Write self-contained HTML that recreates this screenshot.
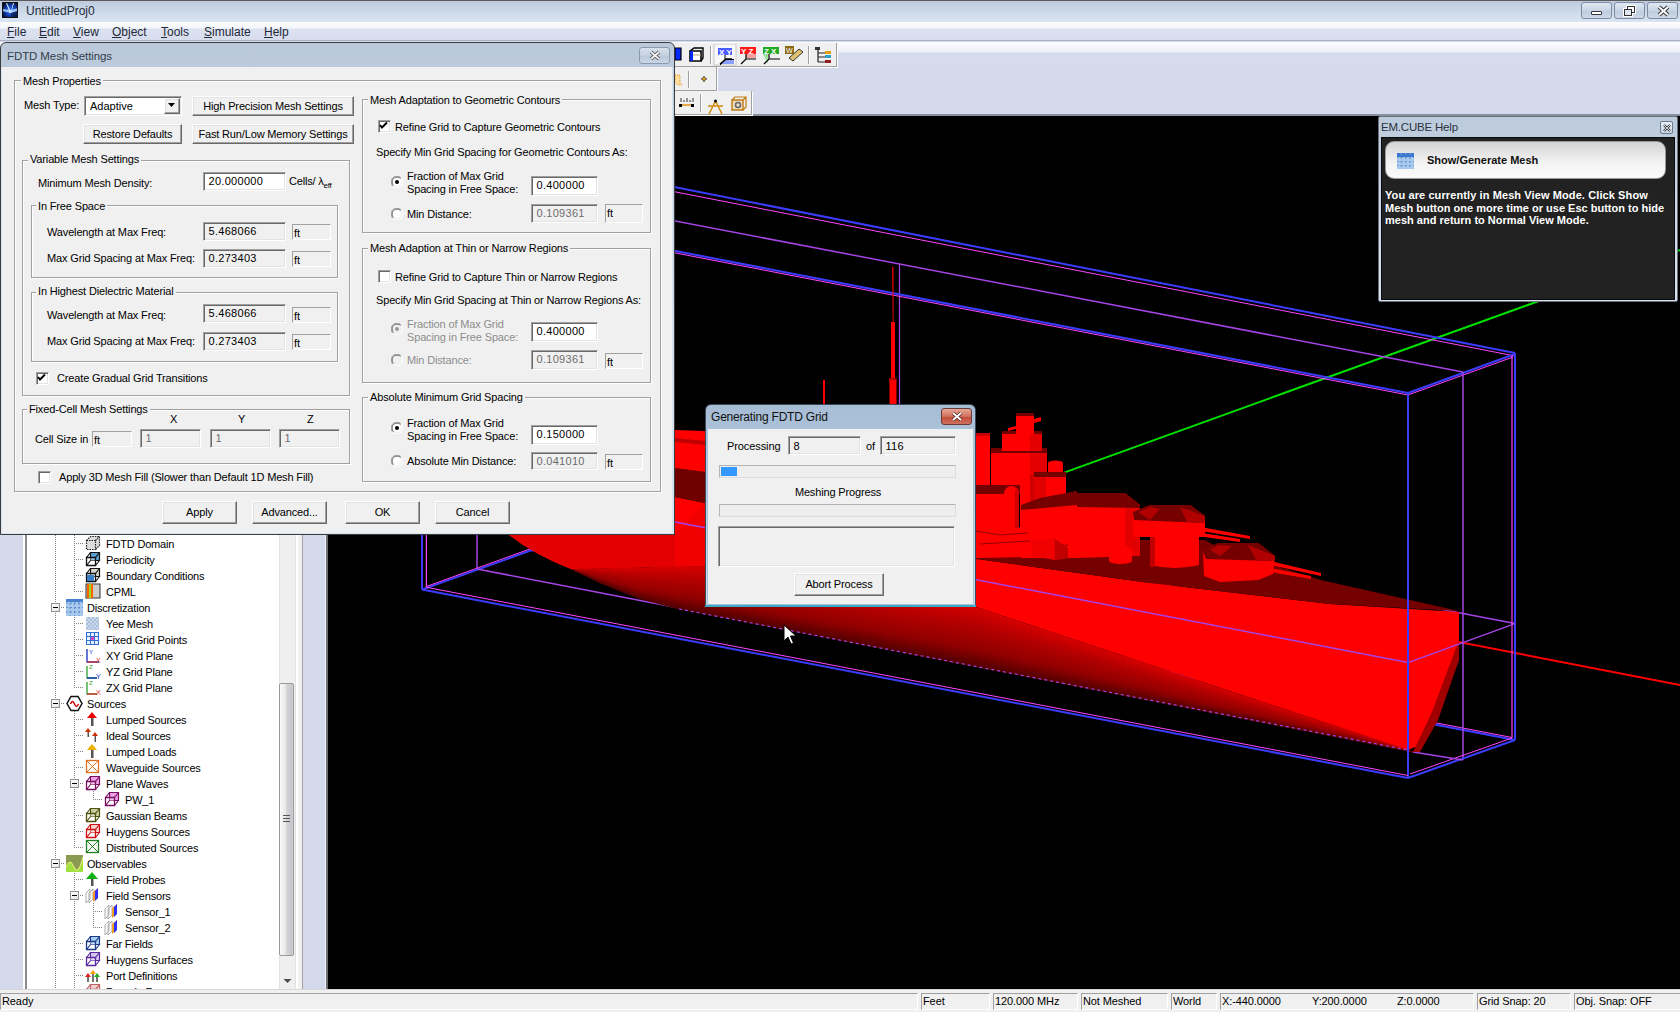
<!DOCTYPE html><html><head><meta charset="utf-8"><style>
*{margin:0;padding:0;box-sizing:border-box}
body{width:1680px;height:1012px;overflow:hidden;position:relative;background:#d4d9ec;font-family:"Liberation Sans",sans-serif;font-size:11px;color:#000}
.t{position:absolute;white-space:nowrap;letter-spacing:-0.15px}
.a{position:absolute}
.gb{position:absolute;border:1px solid #a0a0a0;box-shadow:inset 1px 1px 0 #fff,1px 1px 0 #fff}
.ed{position:absolute;border:1px solid;border-color:#a0a0a0 #fff #fff #a0a0a0;box-shadow:inset 1px 1px 0 #696969,inset -1px -1px 0 #e3e3e3}
.ub{position:absolute;border:1px solid;border-color:#a0a0a0 #fff #fff #a0a0a0;background:#f0f0f0}
.bt{position:absolute;background:#f0f0f0;border:1px solid;border-color:#fff #696969 #696969 #fff;box-shadow:inset -1px -1px 0 #a0a0a0,inset 1px 1px 0 #e3e3e3}
.cb{position:absolute;background:#fff;border:1px solid;border-color:#a0a0a0 #fff #fff #a0a0a0;box-shadow:inset 1px 1px 0 #696969,inset -1px -1px 0 #e3e3e3}
.rd{position:absolute}
.sb{position:absolute;border:1px solid;border-color:#a0a0a0 #fff #fff #a0a0a0}
</style></head><body>
<div class="a" style="left:0;top:0;width:1680px;height:22px;background:linear-gradient(#bccbdc,#cfdceb 60%,#dae5f2);border-top:1px solid #5a5a5a"></div>
<svg class="a" style="left:2px;top:2px" width="16" height="16"><defs><radialGradient id="ig" cx="0.55" cy="0.55" r="0.6"><stop offset="0" stop-color="#3a78ff"/><stop offset="0.6" stop-color="#0f3aa8"/><stop offset="1" stop-color="#050a20"/></radialGradient></defs><rect width="16" height="16" fill="url(#ig)"/><path d="M0 9 L9 11 L16 9 L16 6 L9 8 L0 7z" fill="#b8dcff" opacity="0.8"/><path d="M5 1 L9 10 L11 1 L12 1 L9 11 L8 11 L4 1z" fill="#d8f0ff"/><path d="M9 11 L16 9 L16 16 L9 16z" fill="#0a1a40" opacity="0.7"/><rect x="0.5" y="0.5" width="15" height="15" fill="none" stroke="#111" stroke-width="1"/></svg>
<div class="t" style="left:26px;top:5.34px;font-size:12px;line-height:12px;color:#1e2a3a;letter-spacing:0px;">UntitledProj0</div>
<div class="a" style="left:1581px;top:2px;width:31px;height:17px;border:1px solid #7d8ba0;border-radius:3px;background:linear-gradient(#dfe8f3,#c8d5e5 50%,#bccbdd 51%,#cdd9e8)"><div class="a" style="left:9px;top:8px;width:11px;height:4px;background:#fff;border:1px solid #333;border-radius:1px"></div></div>
<div class="a" style="left:1614px;top:2px;width:31px;height:17px;border:1px solid #7d8ba0;border-radius:3px;background:linear-gradient(#dfe8f3,#c8d5e5 50%,#bccbdd 51%,#cdd9e8)"><svg class="a" style="left:8px;top:2px" width="14" height="12"><rect x="4.5" y="1.5" width="7" height="6" fill="none" stroke="#fff" stroke-width="3"/><rect x="1.5" y="4.5" width="7" height="6" fill="none" stroke="#fff" stroke-width="3"/><rect x="4.5" y="1.5" width="7" height="6" fill="none" stroke="#333" stroke-width="1"/><rect x="1.5" y="4.5" width="7" height="6" fill="#dfe7f0" stroke="#333" stroke-width="1"/></svg></div>
<div class="a" style="left:1647px;top:2px;width:31px;height:17px;border:1px solid #7d8ba0;border-radius:3px;background:linear-gradient(#dfe8f3,#c8d5e5 50%,#bccbdd 51%,#cdd9e8)"><svg class="a" style="left:9px;top:2px" width="13" height="12"><path d="M2 2 L11 10 M11 2 L2 10" stroke="#333" stroke-width="4"/><path d="M2 2 L11 10 M11 2 L2 10" stroke="#fff" stroke-width="2"/></svg></div>
<div class="a" style="left:0;top:22px;width:1680px;height:19px;background:linear-gradient(#fdfdfe 0,#f4f6fb 6px,#dde2f1 7px,#d8ddee 18px);border-bottom:1px solid #a8b0c4"></div>
<div class="t" style="left:7px;top:25.84px;font-size:12px;line-height:12px;color:#1e2a3a;letter-spacing:0px;"><u>F</u>ile</div>
<div class="t" style="left:39px;top:25.84px;font-size:12px;line-height:12px;color:#1e2a3a;letter-spacing:0px;"><u>E</u>dit</div>
<div class="t" style="left:73px;top:25.84px;font-size:12px;line-height:12px;color:#1e2a3a;letter-spacing:0px;"><u>V</u>iew</div>
<div class="t" style="left:112px;top:25.84px;font-size:12px;line-height:12px;color:#1e2a3a;letter-spacing:0px;"><u>O</u>bject</div>
<div class="t" style="left:161px;top:25.84px;font-size:12px;line-height:12px;color:#1e2a3a;letter-spacing:0px;"><u>T</u>ools</div>
<div class="t" style="left:204px;top:25.84px;font-size:12px;line-height:12px;color:#1e2a3a;letter-spacing:0px;"><u>S</u>imulate</div>
<div class="t" style="left:264px;top:25.84px;font-size:12px;line-height:12px;color:#1e2a3a;letter-spacing:0px;"><u>H</u>elp</div>
<div class="a" style="left:0;top:42px;width:1680px;height:74px;background:linear-gradient(#fbfcfe 0,#eef0f8 10px,#d5daed 11px,#d4d9ec 100%)"></div>
<div class="a" style="left:0;top:114px;width:1680px;height:2px;background:#8a8f9e"></div>
<div class="a" style="left:640px;top:43px;width:197px;height:24px;background:#f0f0f0;border-right:1px solid #a0a0a0;border-bottom:1px solid #a0a0a0;box-shadow:1px 1px 0 #fff"></div>
<div class="a" style="left:640px;top:67px;width:77px;height:24px;background:#f0f0f0;border-right:1px solid #a0a0a0;border-bottom:1px solid #a0a0a0;box-shadow:1px 1px 0 #fff"></div>
<div class="a" style="left:640px;top:91px;width:112px;height:24px;background:#f0f0f0;border-right:1px solid #a0a0a0;border-bottom:1px solid #a0a0a0;box-shadow:1px 1px 0 #fff"></div>
<div class="a" style="left:710px;top:46px;width:1px;height:18px;background:#a0a0a0;box-shadow:1px 0 0 #fff"></div>
<div class="a" style="left:808px;top:46px;width:1px;height:18px;background:#a0a0a0;box-shadow:1px 0 0 #fff"></div>
<div class="a" style="left:688px;top:71px;width:1px;height:17px;background:#a0a0a0;box-shadow:1px 0 0 #fff"></div>
<div class="a" style="left:700px;top:94px;width:1px;height:18px;background:#a0a0a0;box-shadow:1px 0 0 #fff"></div>
<svg class="a" style="left:672px;top:44px" width="170" height="22"><path d="M3 4 h6 v12 h-6z" fill="#0028ff"/><path d="M3 4 h6 v12 h-6z" fill="none" stroke="#000" stroke-width="1.2"/><path d="M18 7 h11 v10 h-11z" fill="#fff" stroke="#000" stroke-width="1.6"/><path d="M18 7 l4 -3 h9 v10 l-2 3" fill="none" stroke="#000" stroke-width="1.4"/><path d="M18 7 h3 v10 h-3z" fill="#0028ff"/><path d="M21 11 h8" stroke="#b0a080"/><rect x="42" y="0" width="22" height="21" fill="#f8f8f8" stroke="#c8c8c8"/><rect x="46" y="4" width="14" height="7" fill="#4a5cff"/><text x="47" y="10.5" font-family="Liberation Sans" font-size="8" fill="#fff" font-weight="bold">X Y</text><path d="M48 20 L54 15 H60" stroke="#000" stroke-width="1.3" fill="none"/><path d="M49 20 L54 16 H62 V20z" fill="#8ca0ff"/><path d="M48 21 L54 15.5 H62" stroke="#000" stroke-width="1" fill="none"/><path d="M53 11 V16" stroke="#000"/><rect x="68" y="3" width="16" height="7" fill="#ff1a1a"/><text x="69" y="9.5" font-family="Liberation Sans" font-size="8" fill="#fff" font-weight="bold">Y Z</text><rect x="74" y="10" width="10" height="4" fill="#f7a0a0"/><path d="M69 20 L74 15 H84 M74 10 V15" stroke="#000" stroke-width="1.2" fill="none"/><rect x="91" y="3" width="16" height="7" fill="#22aa22"/><text x="92" y="9.5" font-family="Liberation Sans" font-size="8" fill="#fff" font-weight="bold">Z X</text><path d="M91 10 h5 v10z" fill="#a0e0a0"/><path d="M92 20 L97 15 H108 M97 10 V15" stroke="#000" stroke-width="1.2" fill="none"/><rect x="113" y="2" width="9" height="8" fill="#8a6a10"/><text x="114" y="9" font-family="Liberation Sans" font-size="7" fill="#fff">W</text><path d="M117 14 L127 5 L131 8 L121 17z" fill="#e0c070" stroke="#333" stroke-width="1"/><rect x="143" y="3" width="5" height="3" fill="#333"/><path d="M146 6 V18 M146 9 H153 M146 13 H153 M146 18 H153" stroke="#222" stroke-width="1.2" fill="none"/><rect x="153" y="7" width="6" height="3" fill="#e0a010"/><rect x="153" y="11" width="6" height="3" fill="#30a0c0"/><rect x="153" y="16" width="6" height="3" fill="#902020"/></svg>
<svg class="a" style="left:672px;top:68px" width="80" height="46"><path d="M3 7 h5 v8 l2 2 h-4 l-3 -3z" fill="#ffe0a0" stroke="#e09020" stroke-dasharray="1 1"/><path d="M31 10 l1 -2 l1 2 l2 1 l-2 1 l-1 2 l-1 -2 l-2 -1z" fill="#e0a020" stroke="#222" stroke-width="0.6"/><path d="M8 37 H22" stroke="#e09010" stroke-width="1.5"/><rect x="7" y="36" width="3" height="3" fill="#000"/><rect x="19" y="36" width="3" height="3" fill="#000"/><path d="M9 30 V34 M12 32 V34 M15 30 V34 M18 32 V34 M21 30 V34" stroke="#333" stroke-width="1"/><path d="M43.5 33 L37 46 M43.5 33 L50 46 M36 38 L51 38" stroke="#d08a10" stroke-width="1.5" fill="none"/><circle cx="43.5" cy="33" r="1.5" fill="#000"/><path d="M60 32 h11 v10 h-11z" fill="#ecdcc0" stroke="#c07810" stroke-width="1.4"/><path d="M60 32 l3 -3 h11 v10 l-3 3 M71 32 l3 -3" fill="none" stroke="#c07810" stroke-width="1.2"/><circle cx="66" cy="37" r="2.5" fill="none" stroke="#666" stroke-width="1.5"/></svg>
<div class="a" style="left:23px;top:116px;width:280px;height:874px;border-left:2px solid #fff;"></div>
<div class="a" style="left:25px;top:116px;width:278px;height:873px;background:#fff;border-left:2px solid #8c8c8c;border-right:1px solid #a0a0a0"></div>
<div class="a" style="left:279px;top:116px;width:17px;height:873px;background:#efefef;border-left:1px solid #e2e2e2;border-right:1px solid #e2e2e2"></div>
<div class="a" style="left:296px;top:116px;width:2px;height:873px;background:#fff"></div>
<div class="a" style="left:298px;top:116px;width:4px;height:873px;background:#f0f0f0"></div>
<div class="a" style="left:325px;top:116px;width:1px;height:874px;background:#eef0f8"></div>
<div class="a" style="left:326px;top:116px;width:2px;height:874px;background:#6e6e6e"></div>
<div class="a" style="left:279px;top:683px;width:15px;height:273px;border:1px solid #9a9a9a;border-radius:2px;background:linear-gradient(90deg,#fbfbfb,#e6e6e8 45%,#d6d6da 50%,#c4c4ca 92%,#d8d8dc)"></div>
<div class="a" style="left:283px;top:815px;width:7px;height:7px;border-top:1px solid #555;border-bottom:1px solid #555"></div><div class="a" style="left:283px;top:818px;width:7px;height:1px;background:#555"></div>
<svg class="a" style="left:282px;top:978px" width="11" height="6"><path d="M1.5 1 H9.5 L5.5 5z" fill="#4d4d4d"/></svg>
<div class="a" style="left:25px;top:989px;width:278px;height:1px;background:#a0a0a0"></div>
<div class="a" style="left:28px;top:535px;width:251px;height:454px;overflow:hidden">
<div class="a" style="left:27px;top:0px;width:1px;height:455px;background:repeating-linear-gradient(#808080 0 1px,transparent 1px 2px)"></div>
<div class="a" style="left:46px;top:0px;width:1px;height:57px;background:repeating-linear-gradient(#808080 0 1px,transparent 1px 2px)"></div>
<div class="a" style="left:46px;top:80px;width:1px;height:73px;background:repeating-linear-gradient(#808080 0 1px,transparent 1px 2px)"></div>
<div class="a" style="left:46px;top:176px;width:1px;height:137px;background:repeating-linear-gradient(#808080 0 1px,transparent 1px 2px)"></div>
<div class="a" style="left:46px;top:336px;width:1px;height:119px;background:repeating-linear-gradient(#808080 0 1px,transparent 1px 2px)"></div>
<div class="a" style="left:65px;top:256px;width:1px;height:9px;background:repeating-linear-gradient(#808080 0 1px,transparent 1px 2px)"></div>
<div class="a" style="left:65px;top:368px;width:1px;height:25px;background:repeating-linear-gradient(#808080 0 1px,transparent 1px 2px)"></div>
<div class="a" style="left:46px;top:8px;width:10px;height:1px;background:repeating-linear-gradient(90deg,#808080 0 1px,transparent 1px 2px)"></div>
<svg class="a" style="left:57px;top:0px" width="16" height="16"><path d="M1.5 5.5 h9 v9 h-9z M1.5 5.5 l4 -4 h9 v9 l-4 4 M10.5 5.5 l4 -4" fill="#ddd" stroke="#222" stroke-dasharray="1.5 1" stroke-width="1.2"/></svg>
<div class="t" style="left:78px;top:3.6899999999999995px;font-size:11px;line-height:11px;letter-spacing:-0.2px;">FDTD Domain</div>
<div class="a" style="left:46px;top:24px;width:10px;height:1px;background:repeating-linear-gradient(90deg,#808080 0 1px,transparent 1px 2px)"></div>
<svg class="a" style="left:57px;top:16px" width="16" height="16"><path d="M5.5 1.5 h9 v8 h-9z" fill="#5aa0d0" stroke="#111" stroke-width="1.2"/><path d="M1.5 6.5 h9 v8 h-9z" fill="#fff" fill-opacity="0.35" stroke="#111" stroke-width="1.3"/><path d="M1.5 6.5 L5.5 1.5 M10.5 6.5 L14.5 1.5 M10.5 14.5 L14.5 9.5 M1.5 14.5 L5.5 9.5" stroke="#111" stroke-width="1.2" fill="none"/></svg>
<div class="t" style="left:78px;top:19.689999999999998px;font-size:11px;line-height:11px;letter-spacing:-0.2px;">Periodicity</div>
<div class="a" style="left:46px;top:40px;width:10px;height:1px;background:repeating-linear-gradient(90deg,#808080 0 1px,transparent 1px 2px)"></div>
<svg class="a" style="left:57px;top:32px" width="16" height="16"><path d="M5.5 1.5 h9 v8 h-9z" fill="#d8d4cc" stroke="#111" stroke-width="1.2"/><path d="M1.5 6.5 h9 v8 h-9z" fill="#fff" fill-opacity="0.35" stroke="#111" stroke-width="1.3"/><path d="M1.5 6.5 L5.5 1.5 M10.5 6.5 L14.5 1.5 M10.5 14.5 L14.5 9.5 M1.5 14.5 L5.5 9.5" stroke="#111" stroke-width="1.2" fill="none"/><path d="M2 8 h7 v6 h-7z" fill="#3a80c8"/></svg>
<div class="t" style="left:78px;top:35.69px;font-size:11px;line-height:11px;letter-spacing:-0.2px;">Boundary Conditions</div>
<div class="a" style="left:46px;top:56px;width:10px;height:1px;background:repeating-linear-gradient(90deg,#808080 0 1px,transparent 1px 2px)"></div>
<svg class="a" style="left:57px;top:48px" width="16" height="16"><rect x="1" y="1" width="14" height="14" fill="#ccc" stroke="#333"/><rect x="2" y="1" width="2" height="14" fill="#ff6000"/><rect x="4" y="1" width="2" height="14" fill="#90e020"/><rect x="6" y="1" width="2" height="14" fill="#ff6000"/></svg>
<div class="t" style="left:78px;top:51.69px;font-size:11px;line-height:11px;letter-spacing:-0.2px;">CPML</div>
<div class="a" style="left:27px;top:72px;width:10px;height:1px;background:repeating-linear-gradient(90deg,#808080 0 1px,transparent 1px 2px)"></div>
<div class="a" style="left:23px;top:68px;width:9px;height:9px;border:1px solid #919191;background:linear-gradient(135deg,#fff,#e6e6e6)"><div class="a" style="left:1px;top:3px;width:5px;height:1px;background:#000"></div></div>
<svg class="a" style="left:38px;top:64px" width="17" height="17"><rect x="0" y="0" width="17" height="17" fill="#a8c8ec"/><path d="M0 4 H17 M0 8.5 H17 M0 13 H17 M4 0 V17 M8.5 0 V17 M13 0 V17" stroke="#5a8cd0" stroke-width="1" stroke-dasharray="2 2"/><rect x="0" y="0" width="17" height="3" fill="#4a80d0"/></svg>
<div class="t" style="left:59px;top:67.69px;font-size:11px;line-height:11px;letter-spacing:-0.2px;">Discretization</div>
<div class="a" style="left:46px;top:88px;width:10px;height:1px;background:repeating-linear-gradient(90deg,#808080 0 1px,transparent 1px 2px)"></div>
<svg class="a" style="left:57px;top:80px" width="16" height="16"><rect x="1" y="2" width="13" height="13" fill="#c8d8ea"/><path d="M1 5 H14 M1 9 H14 M1 13 H14 M4 2 V15 M8 2 V15 M12 2 V15" stroke="#8aaad0" stroke-dasharray="2 2"/></svg>
<div class="t" style="left:78px;top:83.69px;font-size:11px;line-height:11px;letter-spacing:-0.2px;">Yee Mesh</div>
<div class="a" style="left:46px;top:104px;width:10px;height:1px;background:repeating-linear-gradient(90deg,#808080 0 1px,transparent 1px 2px)"></div>
<svg class="a" style="left:57px;top:96px" width="16" height="16"><rect x="1.5" y="1.5" width="12" height="12" fill="#e8f0ff" stroke="#3070d0"/><path d="M1.5 5.5 H13.5 M1.5 9.5 H13.5 M5.5 1.5 V13.5 M9.5 1.5 V13.5" stroke="#3070d0"/><circle cx="7.5" cy="7.5" r="1.8" fill="#e040c0"/></svg>
<div class="t" style="left:78px;top:99.69px;font-size:11px;line-height:11px;letter-spacing:-0.2px;">Fixed Grid Points</div>
<div class="a" style="left:46px;top:120px;width:10px;height:1px;background:repeating-linear-gradient(90deg,#808080 0 1px,transparent 1px 2px)"></div>
<svg class="a" style="left:57px;top:112px" width="16" height="16"><path d="M2 2 V15 H14" stroke="#1030c0" stroke-width="1.3" fill="none"/><path d="M2 15 H12" stroke="#e03030" stroke-width="1.3"/><text x="4" y="7" font-size="6" fill="#1030c0" font-family="Liberation Sans">Y</text><text x="11" y="16" font-size="7" fill="#e03030" font-family="Liberation Sans">X</text></svg>
<div class="t" style="left:78px;top:115.69px;font-size:11px;line-height:11px;letter-spacing:-0.2px;">XY Grid Plane</div>
<div class="a" style="left:46px;top:136px;width:10px;height:1px;background:repeating-linear-gradient(90deg,#808080 0 1px,transparent 1px 2px)"></div>
<svg class="a" style="left:57px;top:128px" width="16" height="16"><path d="M2 3 V15 H12" stroke="#30a030" stroke-width="1.3" fill="none"/><path d="M2 15 H12" stroke="#1030c0" stroke-width="1.3"/><text x="4" y="6" font-size="6" fill="#30a030" font-family="Liberation Sans">Z</text><text x="11" y="16" font-size="7" fill="#1030c0" font-family="Liberation Sans">Y</text></svg>
<div class="t" style="left:78px;top:131.69px;font-size:11px;line-height:11px;letter-spacing:-0.2px;">YZ Grid Plane</div>
<div class="a" style="left:46px;top:152px;width:10px;height:1px;background:repeating-linear-gradient(90deg,#808080 0 1px,transparent 1px 2px)"></div>
<svg class="a" style="left:57px;top:144px" width="16" height="16"><path d="M2 3 V15 H12" stroke="#30a030" stroke-width="1.3" fill="none"/><path d="M2 15 H12" stroke="#e03030" stroke-width="1.3"/><text x="4" y="6" font-size="6" fill="#30a030" font-family="Liberation Sans">Z</text><text x="11" y="16" font-size="7" fill="#e03030" font-family="Liberation Sans">X</text></svg>
<div class="t" style="left:78px;top:147.69px;font-size:11px;line-height:11px;letter-spacing:-0.2px;">ZX Grid Plane</div>
<div class="a" style="left:27px;top:168px;width:10px;height:1px;background:repeating-linear-gradient(90deg,#808080 0 1px,transparent 1px 2px)"></div>
<div class="a" style="left:23px;top:164px;width:9px;height:9px;border:1px solid #919191;background:linear-gradient(135deg,#fff,#e6e6e6)"><div class="a" style="left:1px;top:3px;width:5px;height:1px;background:#000"></div></div>
<svg class="a" style="left:38px;top:160px" width="17" height="17"><path d="M5 1.5 h7 l4 7 l-4 7 h-7 l-4 -7z" fill="#fff" stroke="#111" stroke-width="1.5"/><path d="M4.5 9 q2 -5 4 0 t4 0" stroke="#c00" stroke-width="1.5" fill="none"/></svg>
<div class="t" style="left:59px;top:163.69px;font-size:11px;line-height:11px;letter-spacing:-0.2px;">Sources</div>
<div class="a" style="left:46px;top:184px;width:10px;height:1px;background:repeating-linear-gradient(90deg,#808080 0 1px,transparent 1px 2px)"></div>
<svg class="a" style="left:57px;top:176px" width="16" height="16"><path d="M7 1 L12 7 H2z" fill="#e00"/><rect x="6" y="7" width="2.5" height="8" fill="#555"/></svg>
<div class="t" style="left:78px;top:179.69px;font-size:11px;line-height:11px;letter-spacing:-0.2px;">Lumped Sources</div>
<div class="a" style="left:46px;top:200px;width:10px;height:1px;background:repeating-linear-gradient(90deg,#808080 0 1px,transparent 1px 2px)"></div>
<svg class="a" style="left:57px;top:192px" width="16" height="16"><path d="M3 1 L6 5 H0z M10 5 L13 9 H7z" fill="#d03000"/><rect x="2.5" y="5" width="1.5" height="5" fill="#555"/><rect x="9.5" y="9" width="1.5" height="6" fill="#555"/></svg>
<div class="t" style="left:78px;top:195.69px;font-size:11px;line-height:11px;letter-spacing:-0.2px;">Ideal Sources</div>
<div class="a" style="left:46px;top:216px;width:10px;height:1px;background:repeating-linear-gradient(90deg,#808080 0 1px,transparent 1px 2px)"></div>
<svg class="a" style="left:57px;top:208px" width="16" height="16"><path d="M7 1 L12 7 H2z" fill="#f0b000"/><rect x="6" y="7" width="2.5" height="8" fill="#555"/></svg>
<div class="t" style="left:78px;top:211.69px;font-size:11px;line-height:11px;letter-spacing:-0.2px;">Lumped Loads</div>
<div class="a" style="left:46px;top:232px;width:10px;height:1px;background:repeating-linear-gradient(90deg,#808080 0 1px,transparent 1px 2px)"></div>
<svg class="a" style="left:57px;top:224px" width="16" height="16"><rect x="1.5" y="1.5" width="12" height="12" fill="#fff" stroke="#e07020" stroke-width="1.3"/><path d="M1.5 1.5 L13.5 13.5 M13.5 1.5 L1.5 13.5" stroke="#e07020"/></svg>
<div class="t" style="left:78px;top:227.69px;font-size:11px;line-height:11px;letter-spacing:-0.2px;">Waveguide Sources</div>
<div class="a" style="left:46px;top:248px;width:10px;height:1px;background:repeating-linear-gradient(90deg,#808080 0 1px,transparent 1px 2px)"></div>
<div class="a" style="left:42px;top:244px;width:9px;height:9px;border:1px solid #919191;background:linear-gradient(135deg,#fff,#e6e6e6)"><div class="a" style="left:1px;top:3px;width:5px;height:1px;background:#000"></div></div>
<svg class="a" style="left:57px;top:240px" width="16" height="16"><path d="M5.5 1.5 h9 v8 h-9z" fill="#f0a0e8" stroke="#7a1060" stroke-width="1.2"/><path d="M1.5 6.5 h9 v8 h-9z" fill="#fff" fill-opacity="0.35" stroke="#7a1060" stroke-width="1.3"/><path d="M1.5 6.5 L5.5 1.5 M10.5 6.5 L14.5 1.5 M10.5 14.5 L14.5 9.5 M1.5 14.5 L5.5 9.5" stroke="#7a1060" stroke-width="1.2" fill="none"/></svg>
<div class="t" style="left:78px;top:243.69px;font-size:11px;line-height:11px;letter-spacing:-0.2px;">Plane Waves</div>
<div class="a" style="left:65px;top:264px;width:10px;height:1px;background:repeating-linear-gradient(90deg,#808080 0 1px,transparent 1px 2px)"></div>
<svg class="a" style="left:76px;top:256px" width="16" height="16"><path d="M5.5 1.5 h9 v8 h-9z" fill="#f0a0e8" stroke="#7a1060" stroke-width="1.2"/><path d="M1.5 6.5 h9 v8 h-9z" fill="#fff" fill-opacity="0.35" stroke="#7a1060" stroke-width="1.3"/><path d="M1.5 6.5 L5.5 1.5 M10.5 6.5 L14.5 1.5 M10.5 14.5 L14.5 9.5 M1.5 14.5 L5.5 9.5" stroke="#7a1060" stroke-width="1.2" fill="none"/></svg>
<div class="t" style="left:97px;top:259.69px;font-size:11px;line-height:11px;letter-spacing:-0.2px;">PW_1</div>
<div class="a" style="left:46px;top:280px;width:10px;height:1px;background:repeating-linear-gradient(90deg,#808080 0 1px,transparent 1px 2px)"></div>
<svg class="a" style="left:57px;top:272px" width="16" height="16"><path d="M5.5 1.5 h9 v8 h-9z" fill="#c8d0a0" stroke="#505010" stroke-width="1.2"/><path d="M1.5 6.5 h9 v8 h-9z" fill="#fff" fill-opacity="0.35" stroke="#505010" stroke-width="1.3"/><path d="M1.5 6.5 L5.5 1.5 M10.5 6.5 L14.5 1.5 M10.5 14.5 L14.5 9.5 M1.5 14.5 L5.5 9.5" stroke="#505010" stroke-width="1.2" fill="none"/></svg>
<div class="t" style="left:78px;top:275.69px;font-size:11px;line-height:11px;letter-spacing:-0.2px;">Gaussian Beams</div>
<div class="a" style="left:46px;top:296px;width:10px;height:1px;background:repeating-linear-gradient(90deg,#808080 0 1px,transparent 1px 2px)"></div>
<svg class="a" style="left:57px;top:288px" width="16" height="16"><path d="M5.5 1.5 h9 v8 h-9z" fill="#f8d0d0" stroke="#d01010" stroke-width="1.2"/><path d="M1.5 6.5 h9 v8 h-9z" fill="#fff" fill-opacity="0.35" stroke="#d01010" stroke-width="1.3"/><path d="M1.5 6.5 L5.5 1.5 M10.5 6.5 L14.5 1.5 M10.5 14.5 L14.5 9.5 M1.5 14.5 L5.5 9.5" stroke="#d01010" stroke-width="1.2" fill="none"/></svg>
<div class="t" style="left:78px;top:291.69px;font-size:11px;line-height:11px;letter-spacing:-0.2px;">Huygens Sources</div>
<div class="a" style="left:46px;top:312px;width:10px;height:1px;background:repeating-linear-gradient(90deg,#808080 0 1px,transparent 1px 2px)"></div>
<svg class="a" style="left:57px;top:304px" width="16" height="16"><rect x="1.5" y="1.5" width="12" height="12" fill="#fff" stroke="#208020" stroke-width="1.3"/><path d="M1.5 1.5 L13.5 13.5 M13.5 1.5 L1.5 13.5" stroke="#208020"/></svg>
<div class="t" style="left:78px;top:307.69px;font-size:11px;line-height:11px;letter-spacing:-0.2px;">Distributed Sources</div>
<div class="a" style="left:27px;top:328px;width:10px;height:1px;background:repeating-linear-gradient(90deg,#808080 0 1px,transparent 1px 2px)"></div>
<div class="a" style="left:23px;top:324px;width:9px;height:9px;border:1px solid #919191;background:linear-gradient(135deg,#fff,#e6e6e6)"><div class="a" style="left:1px;top:3px;width:5px;height:1px;background:#000"></div></div>
<svg class="a" style="left:38px;top:320px" width="17" height="17"><rect x="0" y="0" width="17" height="17" fill="#8a9a50"/><path d="M0 17 V12 Q4 2 8 12 T17 2 V17z" fill="#a0e040"/><path d="M0 12 Q4 2 8 12 T17 2" stroke="#f0f080" fill="none"/></svg>
<div class="t" style="left:59px;top:323.69px;font-size:11px;line-height:11px;letter-spacing:-0.2px;">Observables</div>
<div class="a" style="left:46px;top:344px;width:10px;height:1px;background:repeating-linear-gradient(90deg,#808080 0 1px,transparent 1px 2px)"></div>
<svg class="a" style="left:57px;top:336px" width="16" height="16"><path d="M7 1 L13 8 H1z" fill="#10b010"/><rect x="6" y="8" width="2.5" height="7" fill="#555"/></svg>
<div class="t" style="left:78px;top:339.69px;font-size:11px;line-height:11px;letter-spacing:-0.2px;">Field Probes</div>
<div class="a" style="left:46px;top:360px;width:10px;height:1px;background:repeating-linear-gradient(90deg,#808080 0 1px,transparent 1px 2px)"></div>
<div class="a" style="left:42px;top:356px;width:9px;height:9px;border:1px solid #919191;background:linear-gradient(135deg,#fff,#e6e6e6)"><div class="a" style="left:1px;top:3px;width:5px;height:1px;background:#000"></div></div>
<svg class="a" style="left:57px;top:352px" width="16" height="16"><path d="M1 6 l4 -4 v10 l-4 4z M4 6 l4 -4 v10 l-4 4z" fill="none" stroke="#aaa"/><path d="M8 5 l5 -4 v10 l-5 4z" fill="#f0a020"/><path d="M10 4 l3 -3 v10 l-3 3z" fill="#3030ff"/></svg>
<div class="t" style="left:78px;top:355.69px;font-size:11px;line-height:11px;letter-spacing:-0.2px;">Field Sensors</div>
<div class="a" style="left:65px;top:376px;width:10px;height:1px;background:repeating-linear-gradient(90deg,#808080 0 1px,transparent 1px 2px)"></div>
<svg class="a" style="left:76px;top:368px" width="16" height="16"><path d="M1 6 l4 -4 v10 l-4 4z M4 6 l4 -4 v10 l-4 4z" fill="none" stroke="#aaa"/><path d="M8 5 l5 -4 v10 l-5 4z" fill="#f0a020"/><path d="M10 4 l3 -3 v10 l-3 3z" fill="#3030ff"/></svg>
<div class="t" style="left:97px;top:371.69px;font-size:11px;line-height:11px;letter-spacing:-0.2px;">Sensor_1</div>
<div class="a" style="left:65px;top:392px;width:10px;height:1px;background:repeating-linear-gradient(90deg,#808080 0 1px,transparent 1px 2px)"></div>
<svg class="a" style="left:76px;top:384px" width="16" height="16"><path d="M1 6 l4 -4 v10 l-4 4z M4 6 l4 -4 v10 l-4 4z" fill="none" stroke="#aaa"/><path d="M8 5 l5 -4 v10 l-5 4z" fill="#f0a020"/><path d="M10 4 l3 -3 v10 l-3 3z" fill="#3030ff"/></svg>
<div class="t" style="left:97px;top:387.69px;font-size:11px;line-height:11px;letter-spacing:-0.2px;">Sensor_2</div>
<div class="a" style="left:46px;top:408px;width:10px;height:1px;background:repeating-linear-gradient(90deg,#808080 0 1px,transparent 1px 2px)"></div>
<svg class="a" style="left:57px;top:400px" width="16" height="16"><path d="M5.5 1.5 h9 v8 h-9z" fill="#a8d0f0" stroke="#1a3a8a" stroke-width="1.2"/><path d="M1.5 6.5 h9 v8 h-9z" fill="#fff" fill-opacity="0.35" stroke="#1a3a8a" stroke-width="1.3"/><path d="M1.5 6.5 L5.5 1.5 M10.5 6.5 L14.5 1.5 M10.5 14.5 L14.5 9.5 M1.5 14.5 L5.5 9.5" stroke="#1a3a8a" stroke-width="1.2" fill="none"/></svg>
<div class="t" style="left:78px;top:403.69px;font-size:11px;line-height:11px;letter-spacing:-0.2px;">Far Fields</div>
<div class="a" style="left:46px;top:424px;width:10px;height:1px;background:repeating-linear-gradient(90deg,#808080 0 1px,transparent 1px 2px)"></div>
<svg class="a" style="left:57px;top:416px" width="16" height="16"><path d="M5.5 1.5 h9 v8 h-9z" fill="#d8c8f0" stroke="#5a2aa0" stroke-width="1.2"/><path d="M1.5 6.5 h9 v8 h-9z" fill="#fff" fill-opacity="0.35" stroke="#5a2aa0" stroke-width="1.3"/><path d="M1.5 6.5 L5.5 1.5 M10.5 6.5 L14.5 1.5 M10.5 14.5 L14.5 9.5 M1.5 14.5 L5.5 9.5" stroke="#5a2aa0" stroke-width="1.2" fill="none"/></svg>
<div class="t" style="left:78px;top:419.69px;font-size:11px;line-height:11px;letter-spacing:-0.2px;">Huygens Surfaces</div>
<div class="a" style="left:46px;top:440px;width:10px;height:1px;background:repeating-linear-gradient(90deg,#808080 0 1px,transparent 1px 2px)"></div>
<svg class="a" style="left:57px;top:432px" width="16" height="16"><path d="M3 6 L6 10 H0z" fill="#e02020"/><path d="M8 3 L11 7 H5z" fill="#f0a000"/><path d="M12 6 L15 10 H9z" fill="#20b020"/><path d="M3 10 V15 M8 7 V15 M12 10 V15" stroke="#444" stroke-width="1.5"/></svg>
<div class="t" style="left:78px;top:435.69px;font-size:11px;line-height:11px;letter-spacing:-0.2px;">Port Definitions</div>
<div class="a" style="left:46px;top:456px;width:10px;height:1px;background:repeating-linear-gradient(90deg,#808080 0 1px,transparent 1px 2px)"></div>
<svg class="a" style="left:57px;top:448px" width="16" height="16"><path d="M5.5 1.5 h9 v8 h-9z" fill="#f0d0d0" stroke="#c06060" stroke-width="1.2"/><path d="M1.5 6.5 h9 v8 h-9z" fill="#fff" fill-opacity="0.35" stroke="#c06060" stroke-width="1.3"/><path d="M1.5 6.5 L5.5 1.5 M10.5 6.5 L14.5 1.5 M10.5 14.5 L14.5 9.5 M1.5 14.5 L5.5 9.5" stroke="#c06060" stroke-width="1.2" fill="none"/></svg>
<div class="t" style="left:78px;top:451.69px;font-size:11px;line-height:11px;letter-spacing:-0.2px;">Domain F</div>
</div>
<div class="a" style="left:0;top:989px;width:1680px;height:23px;background:#f0f0f0;border-top:1px solid #d8d8d8"></div>
<div class="t" style="left:2px;top:996.19px;font-size:11px;line-height:11px;letter-spacing:-0.1px;">Ready</div>
<div class="sb" style="left:0px;top:993px;width:918px;height:17px"></div>
<div class="sb" style="left:921px;top:993px;width:69px;height:17px"></div>
<div class="t" style="left:923px;top:996.19px;font-size:11px;line-height:11px;letter-spacing:-0.1px;">Feet</div>
<div class="sb" style="left:993px;top:993px;width:85px;height:17px"></div>
<div class="t" style="left:995px;top:996.19px;font-size:11px;line-height:11px;letter-spacing:-0.1px;">120.000 MHz</div>
<div class="sb" style="left:1081px;top:993px;width:87px;height:17px"></div>
<div class="t" style="left:1083px;top:996.19px;font-size:11px;line-height:11px;letter-spacing:-0.1px;">Not Meshed</div>
<div class="sb" style="left:1171px;top:993px;width:46px;height:17px"></div>
<div class="t" style="left:1173px;top:996.19px;font-size:11px;line-height:11px;letter-spacing:-0.1px;">World</div>
<div class="sb" style="left:1220px;top:993px;width:254px;height:17px"></div>
<div class="sb" style="left:1477px;top:993px;width:94px;height:17px"></div>
<div class="t" style="left:1479px;top:996.19px;font-size:11px;line-height:11px;letter-spacing:-0.1px;">Grid Snap: 20</div>
<div class="sb" style="left:1574px;top:993px;width:116px;height:17px"></div>
<div class="t" style="left:1576px;top:996.19px;font-size:11px;line-height:11px;letter-spacing:-0.1px;">Obj. Snap: OFF</div>
<div class="t" style="left:1222px;top:996.19px;font-size:11px;line-height:11px;letter-spacing:-0.1px;">X:-440.0000</div>
<div class="t" style="left:1312px;top:996.19px;font-size:11px;line-height:11px;letter-spacing:-0.1px;">Y:200.0000</div>
<div class="t" style="left:1397px;top:996.19px;font-size:11px;line-height:11px;letter-spacing:-0.1px;">Z:0.0000</div>
<svg class="a" style="left:328px;top:116px" width="1352" height="873" viewBox="328 116 1352 873"><defs><filter id="bl" x="-20%" y="-50%" width="140%" height="200%"><feGaussianBlur stdDeviation="7"/></filter><linearGradient id="hg" gradientUnits="userSpaceOnUse" x1="1000" y1="600" x2="970" y2="680"><stop offset="0" stop-color="#b00000"/><stop offset="1" stop-color="#200000"/></linearGradient><linearGradient id="hg2" gradientUnits="userSpaceOnUse" x1="640" y1="566" x2="620" y2="600"><stop offset="0" stop-color="#a80000"/><stop offset="1" stop-color="#400000"/></linearGradient></defs><rect x="328" y="116" width="1352" height="873" fill="#000"/><line x1="897" y1="533" x2="1680" y2="685" stroke="#ff0000" stroke-width="2" /><line x1="897" y1="533" x2="1680" y2="250" stroke="#00e000" stroke-width="2" /><line x1="530" y1="550" x2="1515" y2="740" stroke="#3c3cff" stroke-width="2" /><line x1="530" y1="548.5" x2="1512" y2="737.5" stroke="#ff44ff" stroke-width="1" /><line x1="530" y1="434" x2="1515" y2="623.6" stroke="#a444e4" stroke-width="1.5" /><line x1="899.5" y1="264" x2="899.5" y2="533" stroke="#a444e4" stroke-width="1.2" /><line x1="423" y1="202" x2="1408" y2="393" stroke="#3c3cff" stroke-width="2" /><line x1="423" y1="204" x2="1408" y2="395" stroke="#ff44ff" stroke-width="1" /><line x1="530" y1="158.6" x2="1515" y2="353" stroke="#3c3cff" stroke-width="2" /><line x1="530" y1="163.5" x2="1515" y2="356" stroke="#ff44ff" stroke-width="1" /><line x1="477" y1="183" x2="1463" y2="372" stroke="#a444e4" stroke-width="1.5" /><line x1="1408" y1="393" x2="1515" y2="354" stroke="#3c3cff" stroke-width="2" /><line x1="1408" y1="395" x2="1513" y2="357" stroke="#ff44ff" stroke-width="1" /><line x1="1515" y1="353" x2="1515" y2="740" stroke="#3c3cff" stroke-width="2" /><line x1="1512" y1="355" x2="1512" y2="738" stroke="#ff44ff" stroke-width="1.2" /><line x1="422" y1="202" x2="422" y2="589.6" stroke="#3c3cff" stroke-width="2" /><line x1="426.4" y1="206" x2="426.4" y2="587.3" stroke="#ff44ff" stroke-width="1.2" /><line x1="422" y1="589.6" x2="531" y2="550.4" stroke="#3c3cff" stroke-width="2" /><line x1="426.4" y1="586.5" x2="531" y2="548.6" stroke="#ff44ff" stroke-width="1" /><line x1="477" y1="183" x2="477" y2="569" stroke="#a444e4" stroke-width="1.5" /><line x1="477" y1="569" x2="679" y2="608" stroke="#a444e4" stroke-width="1.5" /><line x1="1463" y1="372" x2="1463" y2="760" stroke="#a444e4" stroke-width="1.5" /><line x1="1408" y1="778" x2="1515" y2="740" stroke="#3c3cff" stroke-width="2" /><line x1="1410" y1="774" x2="1512" y2="738" stroke="#ff44ff" stroke-width="1" /><line x1="1413" y1="752" x2="1463" y2="760" stroke="#a444e4" stroke-width="1.5" /><path d="M892.2 267 h1.3 v55 h1.5 v56 h1.5 v34 h-7 v-34 h1.5 v-56 h1.7z" fill="#ff0000"/><path d="M889 378 h7 v2 h-7z" fill="#b00000"/><path d="M823 380 h2 v40 h-2z" fill="#ff0000"/><path d="M480 535 L675 535 L675 497 L705 503 L977 559 L1150 583 L1330 604 L1459 612 L1459 645 L1440 700 L1420 745 L1408 750 L976 607 L704 566 L571 569 Q535 555 509 535z" fill="#ff0000"/><path d="M480 535 L675 535 L705 566 L571 569 Q535 555 509 535z" fill="#e20000"/><path d="M675 535 L705 503 L705 566 L675 567z" fill="#f00000"/><g><path d="M571.0 569.0 L577.0 568.9 L583.0 568.7 L589.0 568.6 L595.0 568.5 L601.0 568.3 L607.0 568.2 L613.0 568.1 L619.0 567.9 L625.0 567.8 L631.0 567.6 L637.0 567.5 L643.0 567.4 L649.0 567.2 L655.0 567.1 L661.0 567.0 L667.0 566.8 L673.0 566.7 L679.0 566.6 L685.0 566.4 L691.0 566.3 L697.0 566.2 L703.0 566.0 L709.0 566.8 L715.0 567.7 L721.0 568.6 L727.0 569.5 L733.0 570.4 L739.0 571.3 L745.0 572.2 L751.0 573.1 L757.0 574.0 L763.0 574.9 L769.0 575.8 L775.0 576.7 L781.0 577.6 L787.0 578.5 L793.0 579.4 L799.0 580.3 L805.0 581.2 L811.0 582.1 L817.0 583.0 L823.0 583.9 L829.0 584.8 L835.0 585.7 L841.0 586.7 L847.0 587.6 L853.0 588.5 L859.0 589.4 L865.0 590.3 L871.0 591.2 L877.0 592.1 L883.0 593.0 L889.0 593.9 L895.0 594.8 L901.0 595.7 L907.0 596.6 L913.0 597.5 L919.0 598.4 L925.0 599.3 L931.0 600.2 L937.0 601.1 L943.0 602.0 L949.0 602.9 L955.0 603.8 L961.0 604.7 L967.0 605.6 L973.0 606.5 L979.0 608.0 L985.0 610.0 L991.0 612.0 L997.0 614.0 L1003.0 615.9 L1009.0 617.9 L1015.0 619.9 L1021.0 621.9 L1027.0 623.9 L1033.0 625.9 L1039.0 627.9 L1045.0 629.8 L1051.0 631.8 L1057.0 633.8 L1063.0 635.8 L1069.0 637.8 L1075.0 639.8 L1081.0 641.8 L1087.0 643.7 L1093.0 645.7 L1099.0 647.7 L1105.0 649.7 L1111.0 651.7 L1117.0 653.7 L1123.0 655.7 L1129.0 657.6 L1135.0 659.6 L1141.0 661.6 L1147.0 663.6 L1153.0 665.6 L1159.0 667.6 L1165.0 669.6 L1171.0 671.5 L1177.0 673.5 L1183.0 675.5 L1189.0 677.5 L1195.0 679.5 L1201.0 681.5 L1207.0 683.5 L1213.0 685.5 L1219.0 687.4 L1225.0 689.4 L1231.0 691.4 L1237.0 693.4 L1243.0 695.4 L1249.0 697.4 L1255.0 699.4 L1261.0 701.3 L1267.0 703.3 L1273.0 705.3 L1279.0 707.3 L1285.0 709.3 L1291.0 711.3 L1297.0 713.3 L1303.0 715.2 L1309.0 717.2 L1315.0 719.2 L1321.0 721.2 L1327.0 723.2 L1333.0 725.2 L1339.0 727.2 L1345.0 729.1 L1351.0 731.1 L1357.0 733.1 L1363.0 735.1 L1369.0 737.1 L1375.0 739.1 L1381.0 741.1 L1387.0 743.0 L1393.0 745.0 L1399.0 747.0 L1405.0 749.0 L1411.0 751.2 L1413.0 752.0 L1413.0 752.3 L1411.0 751.5 L1405.0 749.4 L1399.0 747.4 L1393.0 745.5 L1387.0 743.6 L1381.0 741.6 L1375.0 739.7 L1369.0 737.7 L1363.0 735.8 L1357.0 733.9 L1351.0 731.9 L1345.0 730.0 L1339.0 728.0 L1333.0 726.1 L1327.0 724.2 L1321.0 722.2 L1315.0 720.3 L1309.0 718.3 L1303.0 716.4 L1297.0 714.5 L1291.0 712.5 L1285.0 710.6 L1279.0 708.6 L1273.0 706.7 L1267.0 704.8 L1261.0 702.8 L1255.0 700.9 L1249.0 698.9 L1243.0 697.0 L1237.0 695.1 L1231.0 693.1 L1225.0 691.2 L1219.0 689.2 L1213.0 687.3 L1207.0 685.3 L1201.0 683.4 L1195.0 681.5 L1189.0 679.5 L1183.0 677.6 L1177.0 675.6 L1171.0 673.7 L1165.0 671.8 L1159.0 669.8 L1153.0 667.9 L1147.0 665.9 L1141.0 664.0 L1135.0 662.1 L1129.0 660.1 L1123.0 658.2 L1117.0 656.2 L1111.0 654.3 L1105.0 652.4 L1099.0 650.4 L1093.0 648.5 L1087.0 646.5 L1081.0 644.6 L1075.0 642.7 L1069.0 640.7 L1063.0 638.8 L1057.0 636.8 L1051.0 634.9 L1045.0 633.0 L1039.0 631.0 L1033.0 629.1 L1027.0 627.1 L1021.0 625.2 L1015.0 623.2 L1009.0 621.3 L1003.0 619.4 L997.0 617.4 L991.0 615.5 L985.0 613.5 L979.0 611.6 L973.0 610.2 L967.0 609.3 L961.0 608.3 L955.0 607.4 L949.0 606.5 L943.0 605.6 L937.0 604.7 L931.0 603.7 L925.0 602.8 L919.0 601.9 L913.0 601.0 L907.0 600.1 L901.0 599.1 L895.0 598.2 L889.0 597.3 L883.0 596.4 L877.0 595.5 L871.0 594.6 L865.0 593.6 L859.0 592.7 L853.0 591.8 L847.0 590.9 L841.0 590.0 L835.0 589.0 L829.0 588.1 L823.0 587.2 L817.0 586.3 L811.0 585.4 L805.0 584.4 L799.0 583.5 L793.0 582.6 L787.0 581.7 L781.0 580.8 L775.0 579.8 L769.0 578.9 L763.0 578.0 L757.0 577.1 L751.0 576.2 L745.0 575.2 L739.0 574.3 L733.0 573.4 L727.0 572.5 L721.0 571.6 L715.0 570.7 L709.0 569.7 L703.0 569.0 L697.0 569.0 L691.0 569.1 L685.0 569.2 L679.0 569.2 L673.0 569.3 L667.0 569.3 L661.0 569.4 L655.0 569.4 L649.0 569.4 L643.0 569.5 L637.0 569.5 L631.0 569.5 L625.0 569.5 L619.0 569.5 L613.0 569.5 L607.0 569.5 L601.0 569.5 L595.0 569.4 L589.0 569.4 L583.0 569.4 L577.0 569.3 L571.0 569.3z" fill="#d50000"/><path d="M571.0 569.0 L577.0 569.0 L583.0 568.9 L589.0 568.9 L595.0 568.9 L601.0 568.9 L607.0 568.8 L613.0 568.8 L619.0 568.7 L625.0 568.7 L631.0 568.6 L637.0 568.6 L643.0 568.5 L649.0 568.5 L655.0 568.4 L661.0 568.3 L667.0 568.2 L673.0 568.2 L679.0 568.1 L685.0 568.0 L691.0 567.9 L697.0 567.8 L703.0 567.7 L709.0 568.5 L715.0 569.4 L721.0 570.3 L727.0 571.2 L733.0 572.1 L739.0 573.0 L745.0 574.0 L751.0 574.9 L757.0 575.8 L763.0 576.7 L769.0 577.6 L775.0 578.5 L781.0 579.4 L787.0 580.4 L793.0 581.3 L799.0 582.2 L805.0 583.1 L811.0 584.0 L817.0 584.9 L823.0 585.8 L829.0 586.7 L835.0 587.7 L841.0 588.6 L847.0 589.5 L853.0 590.4 L859.0 591.3 L865.0 592.2 L871.0 593.1 L877.0 594.1 L883.0 595.0 L889.0 595.9 L895.0 596.8 L901.0 597.7 L907.0 598.6 L913.0 599.5 L919.0 600.5 L925.0 601.4 L931.0 602.3 L937.0 603.2 L943.0 604.1 L949.0 605.0 L955.0 605.9 L961.0 606.9 L967.0 607.8 L973.0 608.7 L979.0 610.1 L985.0 612.1 L991.0 614.0 L997.0 616.0 L1003.0 617.9 L1009.0 619.9 L1015.0 621.9 L1021.0 623.8 L1027.0 625.8 L1033.0 627.7 L1039.0 629.7 L1045.0 631.6 L1051.0 633.6 L1057.0 635.6 L1063.0 637.5 L1069.0 639.5 L1075.0 641.4 L1081.0 643.4 L1087.0 645.3 L1093.0 647.3 L1099.0 649.3 L1105.0 651.2 L1111.0 653.2 L1117.0 655.1 L1123.0 657.1 L1129.0 659.0 L1135.0 661.0 L1141.0 663.0 L1147.0 664.9 L1153.0 666.9 L1159.0 668.8 L1165.0 670.8 L1171.0 672.7 L1177.0 674.7 L1183.0 676.7 L1189.0 678.6 L1195.0 680.6 L1201.0 682.5 L1207.0 684.5 L1213.0 686.4 L1219.0 688.4 L1225.0 690.4 L1231.0 692.3 L1237.0 694.3 L1243.0 696.2 L1249.0 698.2 L1255.0 700.1 L1261.0 702.1 L1267.0 704.0 L1273.0 706.0 L1279.0 708.0 L1285.0 709.9 L1291.0 711.9 L1297.0 713.8 L1303.0 715.8 L1309.0 717.7 L1315.0 719.7 L1321.0 721.7 L1327.0 723.6 L1333.0 725.6 L1339.0 727.5 L1345.0 729.5 L1351.0 731.4 L1357.0 733.4 L1363.0 735.4 L1369.0 737.3 L1375.0 739.3 L1381.0 741.2 L1387.0 743.2 L1393.0 745.1 L1399.0 747.1 L1405.0 749.1 L1411.0 751.2 L1413.0 752.0 L1413.0 752.3 L1411.0 751.5 L1405.0 749.4 L1399.0 747.5 L1393.0 745.6 L1387.0 743.7 L1381.0 741.8 L1375.0 739.9 L1369.0 738.0 L1363.0 736.1 L1357.0 734.1 L1351.0 732.2 L1345.0 730.3 L1339.0 728.4 L1333.0 726.5 L1327.0 724.6 L1321.0 722.7 L1315.0 720.8 L1309.0 718.9 L1303.0 716.9 L1297.0 715.0 L1291.0 713.1 L1285.0 711.2 L1279.0 709.3 L1273.0 707.4 L1267.0 705.5 L1261.0 703.6 L1255.0 701.7 L1249.0 699.7 L1243.0 697.8 L1237.0 695.9 L1231.0 694.0 L1225.0 692.1 L1219.0 690.2 L1213.0 688.3 L1207.0 686.4 L1201.0 684.5 L1195.0 682.5 L1189.0 680.6 L1183.0 678.7 L1177.0 676.8 L1171.0 674.9 L1165.0 673.0 L1159.0 671.1 L1153.0 669.2 L1147.0 667.2 L1141.0 665.3 L1135.0 663.4 L1129.0 661.5 L1123.0 659.6 L1117.0 657.7 L1111.0 655.8 L1105.0 653.9 L1099.0 652.0 L1093.0 650.0 L1087.0 648.1 L1081.0 646.2 L1075.0 644.3 L1069.0 642.4 L1063.0 640.5 L1057.0 638.6 L1051.0 636.7 L1045.0 634.8 L1039.0 632.8 L1033.0 630.9 L1027.0 629.0 L1021.0 627.1 L1015.0 625.2 L1009.0 623.3 L1003.0 621.4 L997.0 619.5 L991.0 617.6 L985.0 615.6 L979.0 613.7 L973.0 612.3 L967.0 611.4 L961.0 610.5 L955.0 609.5 L949.0 608.6 L943.0 607.7 L937.0 606.7 L931.0 605.8 L925.0 604.9 L919.0 604.0 L913.0 603.0 L907.0 602.1 L901.0 601.2 L895.0 600.2 L889.0 599.3 L883.0 598.4 L877.0 597.5 L871.0 596.5 L865.0 595.6 L859.0 594.7 L853.0 593.7 L847.0 592.8 L841.0 591.9 L835.0 591.0 L829.0 590.0 L823.0 589.1 L817.0 588.2 L811.0 587.2 L805.0 586.3 L799.0 585.4 L793.0 584.5 L787.0 583.5 L781.0 582.6 L775.0 581.7 L769.0 580.7 L763.0 579.8 L757.0 578.9 L751.0 578.0 L745.0 577.0 L739.0 576.1 L733.0 575.2 L727.0 574.2 L721.0 573.3 L715.0 572.4 L709.0 571.5 L703.0 570.7 L697.0 570.7 L691.0 570.7 L685.0 570.7 L679.0 570.7 L673.0 570.7 L667.0 570.7 L661.0 570.7 L655.0 570.7 L649.0 570.7 L643.0 570.6 L637.0 570.6 L631.0 570.5 L625.0 570.4 L619.0 570.3 L613.0 570.2 L607.0 570.1 L601.0 570.0 L595.0 569.9 L589.0 569.7 L583.0 569.6 L577.0 569.4 L571.0 569.3z" fill="#d10000"/><path d="M571.0 569.0 L577.0 569.1 L583.0 569.2 L589.0 569.2 L595.0 569.3 L601.0 569.4 L607.0 569.4 L613.0 569.5 L619.0 569.5 L625.0 569.6 L631.0 569.6 L637.0 569.7 L643.0 569.7 L649.0 569.7 L655.0 569.7 L661.0 569.6 L667.0 569.6 L673.0 569.6 L679.0 569.6 L685.0 569.6 L691.0 569.5 L697.0 569.5 L703.0 569.4 L709.0 570.2 L715.0 571.1 L721.0 572.0 L727.0 573.0 L733.0 573.9 L739.0 574.8 L745.0 575.7 L751.0 576.7 L757.0 577.6 L763.0 578.5 L769.0 579.4 L775.0 580.3 L781.0 581.3 L787.0 582.2 L793.0 583.1 L799.0 584.0 L805.0 585.0 L811.0 585.9 L817.0 586.8 L823.0 587.7 L829.0 588.7 L835.0 589.6 L841.0 590.5 L847.0 591.4 L853.0 592.3 L859.0 593.3 L865.0 594.2 L871.0 595.1 L877.0 596.0 L883.0 597.0 L889.0 597.9 L895.0 598.8 L901.0 599.7 L907.0 600.7 L913.0 601.6 L919.0 602.5 L925.0 603.4 L931.0 604.4 L937.0 605.3 L943.0 606.2 L949.0 607.1 L955.0 608.0 L961.0 609.0 L967.0 609.9 L973.0 610.8 L979.0 612.2 L985.0 614.2 L991.0 616.1 L997.0 618.0 L1003.0 620.0 L1009.0 621.9 L1015.0 623.8 L1021.0 625.7 L1027.0 627.7 L1033.0 629.6 L1039.0 631.5 L1045.0 633.4 L1051.0 635.4 L1057.0 637.3 L1063.0 639.2 L1069.0 641.2 L1075.0 643.1 L1081.0 645.0 L1087.0 646.9 L1093.0 648.9 L1099.0 650.8 L1105.0 652.7 L1111.0 654.7 L1117.0 656.6 L1123.0 658.5 L1129.0 660.4 L1135.0 662.4 L1141.0 664.3 L1147.0 666.2 L1153.0 668.1 L1159.0 670.1 L1165.0 672.0 L1171.0 673.9 L1177.0 675.9 L1183.0 677.8 L1189.0 679.7 L1195.0 681.6 L1201.0 683.6 L1207.0 685.5 L1213.0 687.4 L1219.0 689.3 L1225.0 691.3 L1231.0 693.2 L1237.0 695.1 L1243.0 697.1 L1249.0 699.0 L1255.0 700.9 L1261.0 702.8 L1267.0 704.8 L1273.0 706.7 L1279.0 708.6 L1285.0 710.6 L1291.0 712.5 L1297.0 714.4 L1303.0 716.3 L1309.0 718.3 L1315.0 720.2 L1321.0 722.1 L1327.0 724.0 L1333.0 726.0 L1339.0 727.9 L1345.0 729.8 L1351.0 731.8 L1357.0 733.7 L1363.0 735.6 L1369.0 737.5 L1375.0 739.5 L1381.0 741.4 L1387.0 743.3 L1393.0 745.3 L1399.0 747.2 L1405.0 749.1 L1411.0 751.2 L1413.0 752.0 L1413.0 752.3 L1411.0 751.6 L1405.0 749.5 L1399.0 747.6 L1393.0 745.7 L1387.0 743.8 L1381.0 742.0 L1375.0 740.1 L1369.0 738.2 L1363.0 736.3 L1357.0 734.4 L1351.0 732.5 L1345.0 730.7 L1339.0 728.8 L1333.0 726.9 L1327.0 725.0 L1321.0 723.1 L1315.0 721.3 L1309.0 719.4 L1303.0 717.5 L1297.0 715.6 L1291.0 713.7 L1285.0 711.8 L1279.0 710.0 L1273.0 708.1 L1267.0 706.2 L1261.0 704.3 L1255.0 702.4 L1249.0 700.6 L1243.0 698.7 L1237.0 696.8 L1231.0 694.9 L1225.0 693.0 L1219.0 691.1 L1213.0 689.3 L1207.0 687.4 L1201.0 685.5 L1195.0 683.6 L1189.0 681.7 L1183.0 679.8 L1177.0 678.0 L1171.0 676.1 L1165.0 674.2 L1159.0 672.3 L1153.0 670.4 L1147.0 668.6 L1141.0 666.7 L1135.0 664.8 L1129.0 662.9 L1123.0 661.0 L1117.0 659.1 L1111.0 657.3 L1105.0 655.4 L1099.0 653.5 L1093.0 651.6 L1087.0 649.7 L1081.0 647.8 L1075.0 646.0 L1069.0 644.1 L1063.0 642.2 L1057.0 640.3 L1051.0 638.4 L1045.0 636.6 L1039.0 634.7 L1033.0 632.8 L1027.0 630.9 L1021.0 629.0 L1015.0 627.1 L1009.0 625.3 L1003.0 623.4 L997.0 621.5 L991.0 619.6 L985.0 617.7 L979.0 615.9 L973.0 614.4 L967.0 613.5 L961.0 612.6 L955.0 611.6 L949.0 610.7 L943.0 609.8 L937.0 608.8 L931.0 607.9 L925.0 606.9 L919.0 606.0 L913.0 605.1 L907.0 604.1 L901.0 603.2 L895.0 602.2 L889.0 601.3 L883.0 600.4 L877.0 599.4 L871.0 598.5 L865.0 597.6 L859.0 596.6 L853.0 595.7 L847.0 594.7 L841.0 593.8 L835.0 592.9 L829.0 591.9 L823.0 591.0 L817.0 590.1 L811.0 589.1 L805.0 588.2 L799.0 587.2 L793.0 586.3 L787.0 585.4 L781.0 584.4 L775.0 583.5 L769.0 582.5 L763.0 581.6 L757.0 580.7 L751.0 579.7 L745.0 578.8 L739.0 577.9 L733.0 576.9 L727.0 576.0 L721.0 575.0 L715.0 574.1 L709.0 573.2 L703.0 572.4 L697.0 572.4 L691.0 572.3 L685.0 572.3 L679.0 572.3 L673.0 572.2 L667.0 572.1 L661.0 572.0 L655.0 571.9 L649.0 571.9 L643.0 571.8 L637.0 571.7 L631.0 571.5 L625.0 571.3 L619.0 571.1 L613.0 570.9 L607.0 570.7 L601.0 570.5 L595.0 570.3 L589.0 570.1 L583.0 569.8 L577.0 569.6 L571.0 569.3z" fill="#cd0000"/><path d="M571.0 569.0 L577.0 569.2 L583.0 569.4 L589.0 569.6 L595.0 569.8 L601.0 569.9 L607.0 570.1 L613.0 570.2 L619.0 570.3 L625.0 570.5 L631.0 570.6 L637.0 570.8 L643.0 570.8 L649.0 570.9 L655.0 570.9 L661.0 571.0 L667.0 571.0 L673.0 571.1 L679.0 571.1 L685.0 571.1 L691.0 571.1 L697.0 571.1 L703.0 571.1 L709.0 571.9 L715.0 572.8 L721.0 573.8 L727.0 574.7 L733.0 575.6 L739.0 576.6 L745.0 577.5 L751.0 578.4 L757.0 579.4 L763.0 580.3 L769.0 581.2 L775.0 582.2 L781.0 583.1 L787.0 584.0 L793.0 585.0 L799.0 585.9 L805.0 586.8 L811.0 587.8 L817.0 588.7 L823.0 589.6 L829.0 590.6 L835.0 591.5 L841.0 592.4 L847.0 593.4 L853.0 594.3 L859.0 595.2 L865.0 596.2 L871.0 597.1 L877.0 598.0 L883.0 599.0 L889.0 599.9 L895.0 600.8 L901.0 601.8 L907.0 602.7 L913.0 603.6 L919.0 604.6 L925.0 605.5 L931.0 606.4 L937.0 607.4 L943.0 608.3 L949.0 609.2 L955.0 610.1 L961.0 611.1 L967.0 612.0 L973.0 612.9 L979.0 614.4 L985.0 616.3 L991.0 618.2 L997.0 620.1 L1003.0 622.0 L1009.0 623.9 L1015.0 625.8 L1021.0 627.7 L1027.0 629.6 L1033.0 631.5 L1039.0 633.3 L1045.0 635.2 L1051.0 637.1 L1057.0 639.0 L1063.0 640.9 L1069.0 642.8 L1075.0 644.7 L1081.0 646.6 L1087.0 648.5 L1093.0 650.4 L1099.0 652.3 L1105.0 654.2 L1111.0 656.1 L1117.0 658.0 L1123.0 659.9 L1129.0 661.8 L1135.0 663.7 L1141.0 665.6 L1147.0 667.5 L1153.0 669.4 L1159.0 671.3 L1165.0 673.2 L1171.0 675.1 L1177.0 677.0 L1183.0 678.9 L1189.0 680.8 L1195.0 682.7 L1201.0 684.6 L1207.0 686.5 L1213.0 688.4 L1219.0 690.3 L1225.0 692.2 L1231.0 694.1 L1237.0 696.0 L1243.0 697.9 L1249.0 699.8 L1255.0 701.7 L1261.0 703.6 L1267.0 705.5 L1273.0 707.4 L1279.0 709.3 L1285.0 711.2 L1291.0 713.1 L1297.0 715.0 L1303.0 716.9 L1309.0 718.8 L1315.0 720.7 L1321.0 722.6 L1327.0 724.5 L1333.0 726.4 L1339.0 728.3 L1345.0 730.2 L1351.0 732.1 L1357.0 734.0 L1363.0 735.9 L1369.0 737.8 L1375.0 739.7 L1381.0 741.6 L1387.0 743.5 L1393.0 745.4 L1399.0 747.3 L1405.0 749.2 L1411.0 751.2 L1413.0 752.0 L1413.0 752.3 L1411.0 751.6 L1405.0 749.5 L1399.0 747.7 L1393.0 745.8 L1387.0 744.0 L1381.0 742.1 L1375.0 740.3 L1369.0 738.4 L1363.0 736.6 L1357.0 734.7 L1351.0 732.9 L1345.0 731.0 L1339.0 729.2 L1333.0 727.3 L1327.0 725.5 L1321.0 723.6 L1315.0 721.7 L1309.0 719.9 L1303.0 718.0 L1297.0 716.2 L1291.0 714.3 L1285.0 712.5 L1279.0 710.6 L1273.0 708.8 L1267.0 706.9 L1261.0 705.1 L1255.0 703.2 L1249.0 701.4 L1243.0 699.5 L1237.0 697.7 L1231.0 695.8 L1225.0 693.9 L1219.0 692.1 L1213.0 690.2 L1207.0 688.4 L1201.0 686.5 L1195.0 684.7 L1189.0 682.8 L1183.0 681.0 L1177.0 679.1 L1171.0 677.3 L1165.0 675.4 L1159.0 673.6 L1153.0 671.7 L1147.0 669.9 L1141.0 668.0 L1135.0 666.2 L1129.0 664.3 L1123.0 662.4 L1117.0 660.6 L1111.0 658.7 L1105.0 656.9 L1099.0 655.0 L1093.0 653.2 L1087.0 651.3 L1081.0 649.5 L1075.0 647.6 L1069.0 645.8 L1063.0 643.9 L1057.0 642.1 L1051.0 640.2 L1045.0 638.4 L1039.0 636.5 L1033.0 634.7 L1027.0 632.8 L1021.0 630.9 L1015.0 629.1 L1009.0 627.2 L1003.0 625.4 L997.0 623.5 L991.0 621.7 L985.0 619.8 L979.0 618.0 L973.0 616.6 L967.0 615.6 L961.0 614.7 L955.0 613.7 L949.0 612.8 L943.0 611.8 L937.0 610.9 L931.0 609.9 L925.0 609.0 L919.0 608.0 L913.0 607.1 L907.0 606.2 L901.0 605.2 L895.0 604.3 L889.0 603.3 L883.0 602.4 L877.0 601.4 L871.0 600.5 L865.0 599.5 L859.0 598.6 L853.0 597.6 L847.0 596.7 L841.0 595.7 L835.0 594.8 L829.0 593.8 L823.0 592.9 L817.0 591.9 L811.0 591.0 L805.0 590.0 L799.0 589.1 L793.0 588.2 L787.0 587.2 L781.0 586.3 L775.0 585.3 L769.0 584.4 L763.0 583.4 L757.0 582.5 L751.0 581.5 L745.0 580.6 L739.0 579.6 L733.0 578.7 L727.0 577.7 L721.0 576.8 L715.0 575.8 L709.0 574.9 L703.0 574.1 L697.0 574.0 L691.0 573.9 L685.0 573.9 L679.0 573.8 L673.0 573.6 L667.0 573.5 L661.0 573.4 L655.0 573.2 L649.0 573.1 L643.0 573.0 L637.0 572.7 L631.0 572.5 L625.0 572.2 L619.0 571.9 L613.0 571.6 L607.0 571.4 L601.0 571.1 L595.0 570.7 L589.0 570.4 L583.0 570.0 L577.0 569.7 L571.0 569.3z" fill="#c80000"/><path d="M571.0 569.0 L577.0 569.3 L583.0 569.6 L589.0 569.9 L595.0 570.2 L601.0 570.5 L607.0 570.7 L613.0 570.9 L619.0 571.2 L625.0 571.4 L631.0 571.6 L637.0 571.8 L643.0 572.0 L649.0 572.1 L655.0 572.2 L661.0 572.3 L667.0 572.4 L673.0 572.5 L679.0 572.6 L685.0 572.7 L691.0 572.7 L697.0 572.8 L703.0 572.8 L709.0 573.6 L715.0 574.6 L721.0 575.5 L727.0 576.5 L733.0 577.4 L739.0 578.3 L745.0 579.3 L751.0 580.2 L757.0 581.2 L763.0 582.1 L769.0 583.0 L775.0 584.0 L781.0 584.9 L787.0 585.9 L793.0 586.8 L799.0 587.8 L805.0 588.7 L811.0 589.6 L817.0 590.6 L823.0 591.5 L829.0 592.5 L835.0 593.4 L841.0 594.4 L847.0 595.3 L853.0 596.2 L859.0 597.2 L865.0 598.1 L871.0 599.1 L877.0 600.0 L883.0 600.9 L889.0 601.9 L895.0 602.8 L901.0 603.8 L907.0 604.7 L913.0 605.7 L919.0 606.6 L925.0 607.5 L931.0 608.5 L937.0 609.4 L943.0 610.4 L949.0 611.3 L955.0 612.3 L961.0 613.2 L967.0 614.1 L973.0 615.1 L979.0 616.5 L985.0 618.4 L991.0 620.2 L997.0 622.1 L1003.0 624.0 L1009.0 625.8 L1015.0 627.7 L1021.0 629.6 L1027.0 631.4 L1033.0 633.3 L1039.0 635.2 L1045.0 637.0 L1051.0 638.9 L1057.0 640.8 L1063.0 642.7 L1069.0 644.5 L1075.0 646.4 L1081.0 648.3 L1087.0 650.1 L1093.0 652.0 L1099.0 653.9 L1105.0 655.7 L1111.0 657.6 L1117.0 659.5 L1123.0 661.4 L1129.0 663.2 L1135.0 665.1 L1141.0 667.0 L1147.0 668.8 L1153.0 670.7 L1159.0 672.6 L1165.0 674.4 L1171.0 676.3 L1177.0 678.2 L1183.0 680.0 L1189.0 681.9 L1195.0 683.8 L1201.0 685.7 L1207.0 687.5 L1213.0 689.4 L1219.0 691.3 L1225.0 693.1 L1231.0 695.0 L1237.0 696.9 L1243.0 698.7 L1249.0 700.6 L1255.0 702.5 L1261.0 704.3 L1267.0 706.2 L1273.0 708.1 L1279.0 710.0 L1285.0 711.8 L1291.0 713.7 L1297.0 715.6 L1303.0 717.4 L1309.0 719.3 L1315.0 721.2 L1321.0 723.0 L1327.0 724.9 L1333.0 726.8 L1339.0 728.6 L1345.0 730.5 L1351.0 732.4 L1357.0 734.3 L1363.0 736.1 L1369.0 738.0 L1375.0 739.9 L1381.0 741.7 L1387.0 743.6 L1393.0 745.5 L1399.0 747.3 L1405.0 749.2 L1411.0 751.3 L1413.0 752.0 L1413.0 752.3 L1411.0 751.6 L1405.0 749.6 L1399.0 747.8 L1393.0 745.9 L1387.0 744.1 L1381.0 742.3 L1375.0 740.5 L1369.0 738.6 L1363.0 736.8 L1357.0 735.0 L1351.0 733.2 L1345.0 731.4 L1339.0 729.5 L1333.0 727.7 L1327.0 725.9 L1321.0 724.1 L1315.0 722.2 L1309.0 720.4 L1303.0 718.6 L1297.0 716.8 L1291.0 714.9 L1285.0 713.1 L1279.0 711.3 L1273.0 709.5 L1267.0 707.6 L1261.0 705.8 L1255.0 704.0 L1249.0 702.2 L1243.0 700.3 L1237.0 698.5 L1231.0 696.7 L1225.0 694.9 L1219.0 693.1 L1213.0 691.2 L1207.0 689.4 L1201.0 687.6 L1195.0 685.8 L1189.0 683.9 L1183.0 682.1 L1177.0 680.3 L1171.0 678.5 L1165.0 676.6 L1159.0 674.8 L1153.0 673.0 L1147.0 671.2 L1141.0 669.3 L1135.0 667.5 L1129.0 665.7 L1123.0 663.9 L1117.0 662.0 L1111.0 660.2 L1105.0 658.4 L1099.0 656.6 L1093.0 654.8 L1087.0 652.9 L1081.0 651.1 L1075.0 649.3 L1069.0 647.5 L1063.0 645.6 L1057.0 643.8 L1051.0 642.0 L1045.0 640.2 L1039.0 638.3 L1033.0 636.5 L1027.0 634.7 L1021.0 632.9 L1015.0 631.0 L1009.0 629.2 L1003.0 627.4 L997.0 625.6 L991.0 623.7 L985.0 621.9 L979.0 620.1 L973.0 618.7 L967.0 617.8 L961.0 616.8 L955.0 615.8 L949.0 614.9 L943.0 613.9 L937.0 613.0 L931.0 612.0 L925.0 611.1 L919.0 610.1 L913.0 609.1 L907.0 608.2 L901.0 607.2 L895.0 606.3 L889.0 605.3 L883.0 604.4 L877.0 603.4 L871.0 602.4 L865.0 601.5 L859.0 600.5 L853.0 599.6 L847.0 598.6 L841.0 597.7 L835.0 596.7 L829.0 595.7 L823.0 594.8 L817.0 593.8 L811.0 592.9 L805.0 591.9 L799.0 591.0 L793.0 590.0 L787.0 589.0 L781.0 588.1 L775.0 587.1 L769.0 586.2 L763.0 585.2 L757.0 584.3 L751.0 583.3 L745.0 582.3 L739.0 581.4 L733.0 580.4 L727.0 579.5 L721.0 578.5 L715.0 577.6 L709.0 576.6 L703.0 575.8 L697.0 575.7 L691.0 575.5 L685.0 575.4 L679.0 575.3 L673.0 575.1 L667.0 574.9 L661.0 574.7 L655.0 574.5 L649.0 574.3 L643.0 574.1 L637.0 573.8 L631.0 573.5 L625.0 573.1 L619.0 572.7 L613.0 572.4 L607.0 572.0 L601.0 571.6 L595.0 571.2 L589.0 570.7 L583.0 570.2 L577.0 569.8 L571.0 569.3z" fill="#c40000"/><path d="M571.0 569.0 L577.0 569.4 L583.0 569.8 L589.0 570.2 L595.0 570.6 L601.0 571.0 L607.0 571.3 L613.0 571.7 L619.0 572.0 L625.0 572.3 L631.0 572.6 L637.0 572.9 L643.0 573.2 L649.0 573.3 L655.0 573.5 L661.0 573.7 L667.0 573.8 L673.0 574.0 L679.0 574.1 L685.0 574.2 L691.0 574.3 L697.0 574.4 L703.0 574.5 L709.0 575.3 L715.0 576.3 L721.0 577.2 L727.0 578.2 L733.0 579.1 L739.0 580.1 L745.0 581.1 L751.0 582.0 L757.0 583.0 L763.0 583.9 L769.0 584.9 L775.0 585.8 L781.0 586.8 L787.0 587.7 L793.0 588.7 L799.0 589.6 L805.0 590.6 L811.0 591.5 L817.0 592.5 L823.0 593.4 L829.0 594.4 L835.0 595.3 L841.0 596.3 L847.0 597.2 L853.0 598.2 L859.0 599.1 L865.0 600.1 L871.0 601.0 L877.0 602.0 L883.0 602.9 L889.0 603.9 L895.0 604.8 L901.0 605.8 L907.0 606.7 L913.0 607.7 L919.0 608.6 L925.0 609.6 L931.0 610.6 L937.0 611.5 L943.0 612.5 L949.0 613.4 L955.0 614.4 L961.0 615.3 L967.0 616.3 L973.0 617.2 L979.0 618.6 L985.0 620.4 L991.0 622.3 L997.0 624.1 L1003.0 626.0 L1009.0 627.8 L1015.0 629.7 L1021.0 631.5 L1027.0 633.3 L1033.0 635.2 L1039.0 637.0 L1045.0 638.9 L1051.0 640.7 L1057.0 642.5 L1063.0 644.4 L1069.0 646.2 L1075.0 648.1 L1081.0 649.9 L1087.0 651.7 L1093.0 653.6 L1099.0 655.4 L1105.0 657.3 L1111.0 659.1 L1117.0 660.9 L1123.0 662.8 L1129.0 664.6 L1135.0 666.5 L1141.0 668.3 L1147.0 670.1 L1153.0 672.0 L1159.0 673.8 L1165.0 675.7 L1171.0 677.5 L1177.0 679.3 L1183.0 681.2 L1189.0 683.0 L1195.0 684.9 L1201.0 686.7 L1207.0 688.5 L1213.0 690.4 L1219.0 692.2 L1225.0 694.1 L1231.0 695.9 L1237.0 697.7 L1243.0 699.6 L1249.0 701.4 L1255.0 703.3 L1261.0 705.1 L1267.0 706.9 L1273.0 708.8 L1279.0 710.6 L1285.0 712.5 L1291.0 714.3 L1297.0 716.1 L1303.0 718.0 L1309.0 719.8 L1315.0 721.7 L1321.0 723.5 L1327.0 725.3 L1333.0 727.2 L1339.0 729.0 L1345.0 730.9 L1351.0 732.7 L1357.0 734.5 L1363.0 736.4 L1369.0 738.2 L1375.0 740.1 L1381.0 741.9 L1387.0 743.7 L1393.0 745.6 L1399.0 747.4 L1405.0 749.3 L1411.0 751.3 L1413.0 752.0 L1413.0 752.3 L1411.0 751.6 L1405.0 749.6 L1399.0 747.8 L1393.0 746.1 L1387.0 744.3 L1381.0 742.5 L1375.0 740.7 L1369.0 738.9 L1363.0 737.1 L1357.0 735.3 L1351.0 733.5 L1345.0 731.7 L1339.0 729.9 L1333.0 728.1 L1327.0 726.3 L1321.0 724.5 L1315.0 722.7 L1309.0 720.9 L1303.0 719.1 L1297.0 717.3 L1291.0 715.5 L1285.0 713.7 L1279.0 712.0 L1273.0 710.2 L1267.0 708.4 L1261.0 706.6 L1255.0 704.8 L1249.0 703.0 L1243.0 701.2 L1237.0 699.4 L1231.0 697.6 L1225.0 695.8 L1219.0 694.0 L1213.0 692.2 L1207.0 690.4 L1201.0 688.6 L1195.0 686.8 L1189.0 685.0 L1183.0 683.2 L1177.0 681.4 L1171.0 679.7 L1165.0 677.9 L1159.0 676.1 L1153.0 674.3 L1147.0 672.5 L1141.0 670.7 L1135.0 668.9 L1129.0 667.1 L1123.0 665.3 L1117.0 663.5 L1111.0 661.7 L1105.0 659.9 L1099.0 658.1 L1093.0 656.3 L1087.0 654.5 L1081.0 652.7 L1075.0 650.9 L1069.0 649.1 L1063.0 647.3 L1057.0 645.6 L1051.0 643.8 L1045.0 642.0 L1039.0 640.2 L1033.0 638.4 L1027.0 636.6 L1021.0 634.8 L1015.0 633.0 L1009.0 631.2 L1003.0 629.4 L997.0 627.6 L991.0 625.8 L985.0 624.0 L979.0 622.2 L973.0 620.8 L967.0 619.9 L961.0 618.9 L955.0 617.9 L949.0 617.0 L943.0 616.0 L937.0 615.0 L931.0 614.1 L925.0 613.1 L919.0 612.1 L913.0 611.2 L907.0 610.2 L901.0 609.2 L895.0 608.3 L889.0 607.3 L883.0 606.3 L877.0 605.4 L871.0 604.4 L865.0 603.4 L859.0 602.5 L853.0 601.5 L847.0 600.5 L841.0 599.6 L835.0 598.6 L829.0 597.6 L823.0 596.7 L817.0 595.7 L811.0 594.7 L805.0 593.8 L799.0 592.8 L793.0 591.9 L787.0 590.9 L781.0 589.9 L775.0 589.0 L769.0 588.0 L763.0 587.0 L757.0 586.1 L751.0 585.1 L745.0 584.1 L739.0 583.2 L733.0 582.2 L727.0 581.2 L721.0 580.3 L715.0 579.3 L709.0 578.3 L703.0 577.5 L697.0 577.3 L691.0 577.1 L685.0 577.0 L679.0 576.8 L673.0 576.5 L667.0 576.3 L661.0 576.0 L655.0 575.8 L649.0 575.5 L643.0 575.3 L637.0 574.9 L631.0 574.4 L625.0 574.0 L619.0 573.5 L613.0 573.1 L607.0 572.6 L601.0 572.2 L595.0 571.6 L589.0 571.0 L583.0 570.4 L577.0 569.9 L571.0 569.3z" fill="#c00000"/><path d="M571.0 569.0 L577.0 569.5 L583.0 570.0 L589.0 570.5 L595.0 571.1 L601.0 571.6 L607.0 572.0 L613.0 572.4 L619.0 572.8 L625.0 573.2 L631.0 573.6 L637.0 574.0 L643.0 574.3 L649.0 574.5 L655.0 574.8 L661.0 575.0 L667.0 575.2 L673.0 575.4 L679.0 575.7 L685.0 575.8 L691.0 575.9 L697.0 576.1 L703.0 576.2 L709.0 577.1 L715.0 578.0 L721.0 579.0 L727.0 579.9 L733.0 580.9 L739.0 581.9 L745.0 582.8 L751.0 583.8 L757.0 584.7 L763.0 585.7 L769.0 586.7 L775.0 587.6 L781.0 588.6 L787.0 589.6 L793.0 590.5 L799.0 591.5 L805.0 592.4 L811.0 593.4 L817.0 594.4 L823.0 595.3 L829.0 596.3 L835.0 597.2 L841.0 598.2 L847.0 599.2 L853.0 600.1 L859.0 601.1 L865.0 602.0 L871.0 603.0 L877.0 604.0 L883.0 604.9 L889.0 605.9 L895.0 606.9 L901.0 607.8 L907.0 608.8 L913.0 609.7 L919.0 610.7 L925.0 611.7 L931.0 612.6 L937.0 613.6 L943.0 614.5 L949.0 615.5 L955.0 616.5 L961.0 617.4 L967.0 618.4 L973.0 619.3 L979.0 620.7 L985.0 622.5 L991.0 624.4 L997.0 626.2 L1003.0 628.0 L1009.0 629.8 L1015.0 631.6 L1021.0 633.4 L1027.0 635.2 L1033.0 637.0 L1039.0 638.8 L1045.0 640.7 L1051.0 642.5 L1057.0 644.3 L1063.0 646.1 L1069.0 647.9 L1075.0 649.7 L1081.0 651.5 L1087.0 653.3 L1093.0 655.1 L1099.0 657.0 L1105.0 658.8 L1111.0 660.6 L1117.0 662.4 L1123.0 664.2 L1129.0 666.0 L1135.0 667.8 L1141.0 669.6 L1147.0 671.4 L1153.0 673.3 L1159.0 675.1 L1165.0 676.9 L1171.0 678.7 L1177.0 680.5 L1183.0 682.3 L1189.0 684.1 L1195.0 685.9 L1201.0 687.7 L1207.0 689.6 L1213.0 691.4 L1219.0 693.2 L1225.0 695.0 L1231.0 696.8 L1237.0 698.6 L1243.0 700.4 L1249.0 702.2 L1255.0 704.0 L1261.0 705.9 L1267.0 707.7 L1273.0 709.5 L1279.0 711.3 L1285.0 713.1 L1291.0 714.9 L1297.0 716.7 L1303.0 718.5 L1309.0 720.3 L1315.0 722.1 L1321.0 724.0 L1327.0 725.8 L1333.0 727.6 L1339.0 729.4 L1345.0 731.2 L1351.0 733.0 L1357.0 734.8 L1363.0 736.6 L1369.0 738.4 L1375.0 740.3 L1381.0 742.1 L1387.0 743.9 L1393.0 745.7 L1399.0 747.5 L1405.0 749.3 L1411.0 751.3 L1413.0 752.0 L1413.0 752.3 L1411.0 751.6 L1405.0 749.7 L1399.0 747.9 L1393.0 746.2 L1387.0 744.4 L1381.0 742.6 L1375.0 740.9 L1369.0 739.1 L1363.0 737.3 L1357.0 735.6 L1351.0 733.8 L1345.0 732.0 L1339.0 730.3 L1333.0 728.5 L1327.0 726.7 L1321.0 725.0 L1315.0 723.2 L1309.0 721.4 L1303.0 719.7 L1297.0 717.9 L1291.0 716.2 L1285.0 714.4 L1279.0 712.6 L1273.0 710.9 L1267.0 709.1 L1261.0 707.3 L1255.0 705.6 L1249.0 703.8 L1243.0 702.0 L1237.0 700.3 L1231.0 698.5 L1225.0 696.7 L1219.0 695.0 L1213.0 693.2 L1207.0 691.4 L1201.0 689.7 L1195.0 687.9 L1189.0 686.1 L1183.0 684.4 L1177.0 682.6 L1171.0 680.8 L1165.0 679.1 L1159.0 677.3 L1153.0 675.5 L1147.0 673.8 L1141.0 672.0 L1135.0 670.2 L1129.0 668.5 L1123.0 666.7 L1117.0 665.0 L1111.0 663.2 L1105.0 661.4 L1099.0 659.7 L1093.0 657.9 L1087.0 656.1 L1081.0 654.4 L1075.0 652.6 L1069.0 650.8 L1063.0 649.1 L1057.0 647.3 L1051.0 645.5 L1045.0 643.8 L1039.0 642.0 L1033.0 640.2 L1027.0 638.5 L1021.0 636.7 L1015.0 634.9 L1009.0 633.2 L1003.0 631.4 L997.0 629.6 L991.0 627.9 L985.0 626.1 L979.0 624.3 L973.0 623.0 L967.0 622.0 L961.0 621.0 L955.0 620.0 L949.0 619.1 L943.0 618.1 L937.0 617.1 L931.0 616.1 L925.0 615.2 L919.0 614.2 L913.0 613.2 L907.0 612.2 L901.0 611.3 L895.0 610.3 L889.0 609.3 L883.0 608.3 L877.0 607.4 L871.0 606.4 L865.0 605.4 L859.0 604.4 L853.0 603.5 L847.0 602.5 L841.0 601.5 L835.0 600.5 L829.0 599.6 L823.0 598.6 L817.0 597.6 L811.0 596.6 L805.0 595.7 L799.0 594.7 L793.0 593.7 L787.0 592.7 L781.0 591.7 L775.0 590.8 L769.0 589.8 L763.0 588.8 L757.0 587.8 L751.0 586.9 L745.0 585.9 L739.0 584.9 L733.0 583.9 L727.0 583.0 L721.0 582.0 L715.0 581.0 L709.0 580.0 L703.0 579.2 L697.0 579.0 L691.0 578.8 L685.0 578.5 L679.0 578.3 L673.0 578.0 L667.0 577.7 L661.0 577.4 L655.0 577.1 L649.0 576.7 L643.0 576.4 L637.0 576.0 L631.0 575.4 L625.0 574.9 L619.0 574.3 L613.0 573.8 L607.0 573.2 L601.0 572.7 L595.0 572.0 L589.0 571.3 L583.0 570.7 L577.0 570.0 L571.0 569.3z" fill="#bc0000"/><path d="M571.0 569.0 L577.0 569.6 L583.0 570.2 L589.0 570.9 L595.0 571.5 L601.0 572.1 L607.0 572.6 L613.0 573.1 L619.0 573.6 L625.0 574.1 L631.0 574.6 L637.0 575.1 L643.0 575.5 L649.0 575.8 L655.0 576.0 L661.0 576.3 L667.0 576.6 L673.0 576.9 L679.0 577.2 L685.0 577.4 L691.0 577.6 L697.0 577.7 L703.0 577.9 L709.0 578.8 L715.0 579.7 L721.0 580.7 L727.0 581.7 L733.0 582.7 L739.0 583.6 L745.0 584.6 L751.0 585.6 L757.0 586.5 L763.0 587.5 L769.0 588.5 L775.0 589.5 L781.0 590.4 L787.0 591.4 L793.0 592.4 L799.0 593.3 L805.0 594.3 L811.0 595.3 L817.0 596.2 L823.0 597.2 L829.0 598.2 L835.0 599.2 L841.0 600.1 L847.0 601.1 L853.0 602.1 L859.0 603.0 L865.0 604.0 L871.0 605.0 L877.0 606.0 L883.0 606.9 L889.0 607.9 L895.0 608.9 L901.0 609.8 L907.0 610.8 L913.0 611.8 L919.0 612.7 L925.0 613.7 L931.0 614.7 L937.0 615.7 L943.0 616.6 L949.0 617.6 L955.0 618.6 L961.0 619.5 L967.0 620.5 L973.0 621.5 L979.0 622.9 L985.0 624.6 L991.0 626.4 L997.0 628.2 L1003.0 630.0 L1009.0 631.8 L1015.0 633.5 L1021.0 635.3 L1027.0 637.1 L1033.0 638.9 L1039.0 640.7 L1045.0 642.5 L1051.0 644.2 L1057.0 646.0 L1063.0 647.8 L1069.0 649.6 L1075.0 651.4 L1081.0 653.1 L1087.0 654.9 L1093.0 656.7 L1099.0 658.5 L1105.0 660.3 L1111.0 662.1 L1117.0 663.8 L1123.0 665.6 L1129.0 667.4 L1135.0 669.2 L1141.0 671.0 L1147.0 672.7 L1153.0 674.5 L1159.0 676.3 L1165.0 678.1 L1171.0 679.9 L1177.0 681.7 L1183.0 683.4 L1189.0 685.2 L1195.0 687.0 L1201.0 688.8 L1207.0 690.6 L1213.0 692.3 L1219.0 694.1 L1225.0 695.9 L1231.0 697.7 L1237.0 699.5 L1243.0 701.3 L1249.0 703.0 L1255.0 704.8 L1261.0 706.6 L1267.0 708.4 L1273.0 710.2 L1279.0 711.9 L1285.0 713.7 L1291.0 715.5 L1297.0 717.3 L1303.0 719.1 L1309.0 720.9 L1315.0 722.6 L1321.0 724.4 L1327.0 726.2 L1333.0 728.0 L1339.0 729.8 L1345.0 731.5 L1351.0 733.3 L1357.0 735.1 L1363.0 736.9 L1369.0 738.7 L1375.0 740.5 L1381.0 742.2 L1387.0 744.0 L1393.0 745.8 L1399.0 747.6 L1405.0 749.4 L1411.0 751.3 L1413.0 752.0 L1413.0 752.3 L1411.0 751.6 L1405.0 749.7 L1399.0 748.0 L1393.0 746.3 L1387.0 744.5 L1381.0 742.8 L1375.0 741.1 L1369.0 739.3 L1363.0 737.6 L1357.0 735.9 L1351.0 734.1 L1345.0 732.4 L1339.0 730.6 L1333.0 728.9 L1327.0 727.2 L1321.0 725.4 L1315.0 723.7 L1309.0 722.0 L1303.0 720.2 L1297.0 718.5 L1291.0 716.8 L1285.0 715.0 L1279.0 713.3 L1273.0 711.5 L1267.0 709.8 L1261.0 708.1 L1255.0 706.3 L1249.0 704.6 L1243.0 702.9 L1237.0 701.1 L1231.0 699.4 L1225.0 697.7 L1219.0 695.9 L1213.0 694.2 L1207.0 692.4 L1201.0 690.7 L1195.0 689.0 L1189.0 687.2 L1183.0 685.5 L1177.0 683.8 L1171.0 682.0 L1165.0 680.3 L1159.0 678.6 L1153.0 676.8 L1147.0 675.1 L1141.0 673.3 L1135.0 671.6 L1129.0 669.9 L1123.0 668.1 L1117.0 666.4 L1111.0 664.7 L1105.0 662.9 L1099.0 661.2 L1093.0 659.5 L1087.0 657.7 L1081.0 656.0 L1075.0 654.2 L1069.0 652.5 L1063.0 650.8 L1057.0 649.0 L1051.0 647.3 L1045.0 645.6 L1039.0 643.8 L1033.0 642.1 L1027.0 640.4 L1021.0 638.6 L1015.0 636.9 L1009.0 635.2 L1003.0 633.4 L997.0 631.7 L991.0 629.9 L985.0 628.2 L979.0 626.5 L973.0 625.1 L967.0 624.1 L961.0 623.1 L955.0 622.2 L949.0 621.2 L943.0 620.2 L937.0 619.2 L931.0 618.2 L925.0 617.2 L919.0 616.2 L913.0 615.3 L907.0 614.3 L901.0 613.3 L895.0 612.3 L889.0 611.3 L883.0 610.3 L877.0 609.3 L871.0 608.4 L865.0 607.4 L859.0 606.4 L853.0 605.4 L847.0 604.4 L841.0 603.4 L835.0 602.4 L829.0 601.5 L823.0 600.5 L817.0 599.5 L811.0 598.5 L805.0 597.5 L799.0 596.5 L793.0 595.5 L787.0 594.6 L781.0 593.6 L775.0 592.6 L769.0 591.6 L763.0 590.6 L757.0 589.6 L751.0 588.7 L745.0 587.7 L739.0 586.7 L733.0 585.7 L727.0 584.7 L721.0 583.7 L715.0 582.7 L709.0 581.8 L703.0 580.9 L697.0 580.6 L691.0 580.4 L685.0 580.1 L679.0 579.8 L673.0 579.5 L667.0 579.1 L661.0 578.7 L655.0 578.3 L649.0 578.0 L643.0 577.6 L637.0 577.1 L631.0 576.4 L625.0 575.8 L619.0 575.2 L613.0 574.5 L607.0 573.9 L601.0 573.2 L595.0 572.5 L589.0 571.7 L583.0 570.9 L577.0 570.1 L571.0 569.3z" fill="#b80000"/><path d="M571.0 569.0 L577.0 569.7 L583.0 570.5 L589.0 571.2 L595.0 571.9 L601.0 572.6 L607.0 573.2 L613.0 573.8 L619.0 574.4 L625.0 575.0 L631.0 575.6 L637.0 576.2 L643.0 576.6 L649.0 577.0 L655.0 577.3 L661.0 577.7 L667.0 578.0 L673.0 578.3 L679.0 578.7 L685.0 578.9 L691.0 579.2 L697.0 579.4 L703.0 579.6 L709.0 580.5 L715.0 581.5 L721.0 582.5 L727.0 583.4 L733.0 584.4 L739.0 585.4 L745.0 586.4 L751.0 587.4 L757.0 588.3 L763.0 589.3 L769.0 590.3 L775.0 591.3 L781.0 592.3 L787.0 593.2 L793.0 594.2 L799.0 595.2 L805.0 596.2 L811.0 597.2 L817.0 598.1 L823.0 599.1 L829.0 600.1 L835.0 601.1 L841.0 602.1 L847.0 603.0 L853.0 604.0 L859.0 605.0 L865.0 606.0 L871.0 607.0 L877.0 607.9 L883.0 608.9 L889.0 609.9 L895.0 610.9 L901.0 611.9 L907.0 612.8 L913.0 613.8 L919.0 614.8 L925.0 615.8 L931.0 616.8 L937.0 617.7 L943.0 618.7 L949.0 619.7 L955.0 620.7 L961.0 621.7 L967.0 622.6 L973.0 623.6 L979.0 625.0 L985.0 626.7 L991.0 628.5 L997.0 630.2 L1003.0 632.0 L1009.0 633.7 L1015.0 635.5 L1021.0 637.2 L1027.0 639.0 L1033.0 640.8 L1039.0 642.5 L1045.0 644.3 L1051.0 646.0 L1057.0 647.8 L1063.0 649.5 L1069.0 651.3 L1075.0 653.0 L1081.0 654.8 L1087.0 656.5 L1093.0 658.3 L1099.0 660.0 L1105.0 661.8 L1111.0 663.5 L1117.0 665.3 L1123.0 667.0 L1129.0 668.8 L1135.0 670.5 L1141.0 672.3 L1147.0 674.1 L1153.0 675.8 L1159.0 677.6 L1165.0 679.3 L1171.0 681.1 L1177.0 682.8 L1183.0 684.6 L1189.0 686.3 L1195.0 688.1 L1201.0 689.8 L1207.0 691.6 L1213.0 693.3 L1219.0 695.1 L1225.0 696.8 L1231.0 698.6 L1237.0 700.3 L1243.0 702.1 L1249.0 703.8 L1255.0 705.6 L1261.0 707.4 L1267.0 709.1 L1273.0 710.9 L1279.0 712.6 L1285.0 714.4 L1291.0 716.1 L1297.0 717.9 L1303.0 719.6 L1309.0 721.4 L1315.0 723.1 L1321.0 724.9 L1327.0 726.6 L1333.0 728.4 L1339.0 730.1 L1345.0 731.9 L1351.0 733.6 L1357.0 735.4 L1363.0 737.1 L1369.0 738.9 L1375.0 740.7 L1381.0 742.4 L1387.0 744.2 L1393.0 745.9 L1399.0 747.7 L1405.0 749.4 L1411.0 751.3 L1413.0 752.0 L1413.0 752.3 L1411.0 751.6 L1405.0 749.8 L1399.0 748.1 L1393.0 746.4 L1387.0 744.7 L1381.0 743.0 L1375.0 741.3 L1369.0 739.6 L1363.0 737.8 L1357.0 736.1 L1351.0 734.4 L1345.0 732.7 L1339.0 731.0 L1333.0 729.3 L1327.0 727.6 L1321.0 725.9 L1315.0 724.2 L1309.0 722.5 L1303.0 720.8 L1297.0 719.1 L1291.0 717.4 L1285.0 715.7 L1279.0 713.9 L1273.0 712.2 L1267.0 710.5 L1261.0 708.8 L1255.0 707.1 L1249.0 705.4 L1243.0 703.7 L1237.0 702.0 L1231.0 700.3 L1225.0 698.6 L1219.0 696.9 L1213.0 695.2 L1207.0 693.5 L1201.0 691.8 L1195.0 690.0 L1189.0 688.3 L1183.0 686.6 L1177.0 684.9 L1171.0 683.2 L1165.0 681.5 L1159.0 679.8 L1153.0 678.1 L1147.0 676.4 L1141.0 674.7 L1135.0 673.0 L1129.0 671.3 L1123.0 669.6 L1117.0 667.9 L1111.0 666.1 L1105.0 664.4 L1099.0 662.7 L1093.0 661.0 L1087.0 659.3 L1081.0 657.6 L1075.0 655.9 L1069.0 654.2 L1063.0 652.5 L1057.0 650.8 L1051.0 649.1 L1045.0 647.4 L1039.0 645.7 L1033.0 644.0 L1027.0 642.2 L1021.0 640.5 L1015.0 638.8 L1009.0 637.1 L1003.0 635.4 L997.0 633.7 L991.0 632.0 L985.0 630.3 L979.0 628.6 L973.0 627.2 L967.0 626.2 L961.0 625.3 L955.0 624.3 L949.0 623.3 L943.0 622.3 L937.0 621.3 L931.0 620.3 L925.0 619.3 L919.0 618.3 L913.0 617.3 L907.0 616.3 L901.0 615.3 L895.0 614.3 L889.0 613.3 L883.0 612.3 L877.0 611.3 L871.0 610.3 L865.0 609.3 L859.0 608.3 L853.0 607.3 L847.0 606.4 L841.0 605.4 L835.0 604.4 L829.0 603.4 L823.0 602.4 L817.0 601.4 L811.0 600.4 L805.0 599.4 L799.0 598.4 L793.0 597.4 L787.0 596.4 L781.0 595.4 L775.0 594.4 L769.0 593.4 L763.0 592.4 L757.0 591.4 L751.0 590.4 L745.0 589.4 L739.0 588.4 L733.0 587.5 L727.0 586.5 L721.0 585.5 L715.0 584.5 L709.0 583.5 L703.0 582.6 L697.0 582.3 L691.0 582.0 L685.0 581.7 L679.0 581.4 L673.0 580.9 L667.0 580.5 L661.0 580.0 L655.0 579.6 L649.0 579.2 L643.0 578.7 L637.0 578.2 L631.0 577.4 L625.0 576.7 L619.0 576.0 L613.0 575.2 L607.0 574.5 L601.0 573.8 L595.0 572.9 L589.0 572.0 L583.0 571.1 L577.0 570.2 L571.0 569.3z" fill="#b40000"/><path d="M571.0 569.0 L577.0 569.8 L583.0 570.7 L589.0 571.5 L595.0 572.4 L601.0 573.2 L607.0 573.8 L613.0 574.5 L619.0 575.2 L625.0 575.9 L631.0 576.6 L637.0 577.2 L643.0 577.8 L649.0 578.2 L655.0 578.6 L661.0 579.0 L667.0 579.4 L673.0 579.8 L679.0 580.2 L685.0 580.5 L691.0 580.8 L697.0 581.1 L703.0 581.3 L709.0 582.2 L715.0 583.2 L721.0 584.2 L727.0 585.2 L733.0 586.2 L739.0 587.2 L745.0 588.1 L751.0 589.1 L757.0 590.1 L763.0 591.1 L769.0 592.1 L775.0 593.1 L781.0 594.1 L787.0 595.1 L793.0 596.1 L799.0 597.1 L805.0 598.0 L811.0 599.0 L817.0 600.0 L823.0 601.0 L829.0 602.0 L835.0 603.0 L841.0 604.0 L847.0 605.0 L853.0 606.0 L859.0 606.9 L865.0 607.9 L871.0 608.9 L877.0 609.9 L883.0 610.9 L889.0 611.9 L895.0 612.9 L901.0 613.9 L907.0 614.9 L913.0 615.9 L919.0 616.8 L925.0 617.8 L931.0 618.8 L937.0 619.8 L943.0 620.8 L949.0 621.8 L955.0 622.8 L961.0 623.8 L967.0 624.8 L973.0 625.7 L979.0 627.1 L985.0 628.8 L991.0 630.6 L997.0 632.3 L1003.0 634.0 L1009.0 635.7 L1015.0 637.4 L1021.0 639.2 L1027.0 640.9 L1033.0 642.6 L1039.0 644.3 L1045.0 646.1 L1051.0 647.8 L1057.0 649.5 L1063.0 651.2 L1069.0 653.0 L1075.0 654.7 L1081.0 656.4 L1087.0 658.1 L1093.0 659.8 L1099.0 661.6 L1105.0 663.3 L1111.0 665.0 L1117.0 666.7 L1123.0 668.5 L1129.0 670.2 L1135.0 671.9 L1141.0 673.6 L1147.0 675.4 L1153.0 677.1 L1159.0 678.8 L1165.0 680.5 L1171.0 682.3 L1177.0 684.0 L1183.0 685.7 L1189.0 687.4 L1195.0 689.1 L1201.0 690.9 L1207.0 692.6 L1213.0 694.3 L1219.0 696.0 L1225.0 697.8 L1231.0 699.5 L1237.0 701.2 L1243.0 702.9 L1249.0 704.7 L1255.0 706.4 L1261.0 708.1 L1267.0 709.8 L1273.0 711.6 L1279.0 713.3 L1285.0 715.0 L1291.0 716.7 L1297.0 718.4 L1303.0 720.2 L1309.0 721.9 L1315.0 723.6 L1321.0 725.3 L1327.0 727.1 L1333.0 728.8 L1339.0 730.5 L1345.0 732.2 L1351.0 734.0 L1357.0 735.7 L1363.0 737.4 L1369.0 739.1 L1375.0 740.9 L1381.0 742.6 L1387.0 744.3 L1393.0 746.0 L1399.0 747.7 L1405.0 749.5 L1411.0 751.3 L1413.0 752.0 L1413.0 752.3 L1411.0 751.7 L1405.0 749.8 L1399.0 748.2 L1393.0 746.5 L1387.0 744.8 L1381.0 743.1 L1375.0 741.5 L1369.0 739.8 L1363.0 738.1 L1357.0 736.4 L1351.0 734.7 L1345.0 733.1 L1339.0 731.4 L1333.0 729.7 L1327.0 728.0 L1321.0 726.4 L1315.0 724.7 L1309.0 723.0 L1303.0 721.3 L1297.0 719.6 L1291.0 718.0 L1285.0 716.3 L1279.0 714.6 L1273.0 712.9 L1267.0 711.3 L1261.0 709.6 L1255.0 707.9 L1249.0 706.2 L1243.0 704.5 L1237.0 702.9 L1231.0 701.2 L1225.0 699.5 L1219.0 697.8 L1213.0 696.2 L1207.0 694.5 L1201.0 692.8 L1195.0 691.1 L1189.0 689.4 L1183.0 687.8 L1177.0 686.1 L1171.0 684.4 L1165.0 682.7 L1159.0 681.1 L1153.0 679.4 L1147.0 677.7 L1141.0 676.0 L1135.0 674.3 L1129.0 672.7 L1123.0 671.0 L1117.0 669.3 L1111.0 667.6 L1105.0 666.0 L1099.0 664.3 L1093.0 662.6 L1087.0 660.9 L1081.0 659.2 L1075.0 657.6 L1069.0 655.9 L1063.0 654.2 L1057.0 652.5 L1051.0 650.9 L1045.0 649.2 L1039.0 647.5 L1033.0 645.8 L1027.0 644.1 L1021.0 642.5 L1015.0 640.8 L1009.0 639.1 L1003.0 637.4 L997.0 635.7 L991.0 634.1 L985.0 632.4 L979.0 630.7 L973.0 629.4 L967.0 628.4 L961.0 627.4 L955.0 626.4 L949.0 625.4 L943.0 624.4 L937.0 623.3 L931.0 622.3 L925.0 621.3 L919.0 620.3 L913.0 619.3 L907.0 618.3 L901.0 617.3 L895.0 616.3 L889.0 615.3 L883.0 614.3 L877.0 613.3 L871.0 612.3 L865.0 611.3 L859.0 610.3 L853.0 609.3 L847.0 608.3 L841.0 607.3 L835.0 606.3 L829.0 605.3 L823.0 604.3 L817.0 603.3 L811.0 602.3 L805.0 601.3 L799.0 600.3 L793.0 599.2 L787.0 598.2 L781.0 597.2 L775.0 596.2 L769.0 595.2 L763.0 594.2 L757.0 593.2 L751.0 592.2 L745.0 591.2 L739.0 590.2 L733.0 589.2 L727.0 588.2 L721.0 587.2 L715.0 586.2 L709.0 585.2 L703.0 584.3 L697.0 583.9 L691.0 583.6 L685.0 583.2 L679.0 582.9 L673.0 582.4 L667.0 581.9 L661.0 581.4 L655.0 580.9 L649.0 580.4 L643.0 579.9 L637.0 579.2 L631.0 578.4 L625.0 577.6 L619.0 576.8 L613.0 576.0 L607.0 575.1 L601.0 574.3 L595.0 573.3 L589.0 572.3 L583.0 571.3 L577.0 570.3 L571.0 569.3z" fill="#b10000"/><path d="M571.0 569.0 L577.0 569.9 L583.0 570.9 L589.0 571.8 L595.0 572.8 L601.0 573.7 L607.0 574.5 L613.0 575.2 L619.0 576.0 L625.0 576.8 L631.0 577.6 L637.0 578.3 L643.0 578.9 L649.0 579.4 L655.0 579.9 L661.0 580.3 L667.0 580.8 L673.0 581.3 L679.0 581.7 L685.0 582.1 L691.0 582.4 L697.0 582.7 L703.0 583.0 L709.0 583.9 L715.0 584.9 L721.0 585.9 L727.0 586.9 L733.0 587.9 L739.0 588.9 L745.0 589.9 L751.0 590.9 L757.0 591.9 L763.0 592.9 L769.0 593.9 L775.0 594.9 L781.0 595.9 L787.0 596.9 L793.0 597.9 L799.0 598.9 L805.0 599.9 L811.0 600.9 L817.0 601.9 L823.0 602.9 L829.0 603.9 L835.0 604.9 L841.0 605.9 L847.0 606.9 L853.0 607.9 L859.0 608.9 L865.0 609.9 L871.0 610.9 L877.0 611.9 L883.0 612.9 L889.0 613.9 L895.0 614.9 L901.0 615.9 L907.0 616.9 L913.0 617.9 L919.0 618.9 L925.0 619.9 L931.0 620.9 L937.0 621.9 L943.0 622.9 L949.0 623.9 L955.0 624.9 L961.0 625.9 L967.0 626.9 L973.0 627.9 L979.0 629.2 L985.0 630.9 L991.0 632.6 L997.0 634.3 L1003.0 636.0 L1009.0 637.7 L1015.0 639.4 L1021.0 641.1 L1027.0 642.8 L1033.0 644.5 L1039.0 646.2 L1045.0 647.9 L1051.0 649.6 L1057.0 651.3 L1063.0 652.9 L1069.0 654.6 L1075.0 656.3 L1081.0 658.0 L1087.0 659.7 L1093.0 661.4 L1099.0 663.1 L1105.0 664.8 L1111.0 666.5 L1117.0 668.2 L1123.0 669.9 L1129.0 671.6 L1135.0 673.3 L1141.0 675.0 L1147.0 676.7 L1153.0 678.4 L1159.0 680.1 L1165.0 681.7 L1171.0 683.4 L1177.0 685.1 L1183.0 686.8 L1189.0 688.5 L1195.0 690.2 L1201.0 691.9 L1207.0 693.6 L1213.0 695.3 L1219.0 697.0 L1225.0 698.7 L1231.0 700.4 L1237.0 702.1 L1243.0 703.8 L1249.0 705.5 L1255.0 707.2 L1261.0 708.9 L1267.0 710.6 L1273.0 712.2 L1279.0 713.9 L1285.0 715.6 L1291.0 717.3 L1297.0 719.0 L1303.0 720.7 L1309.0 722.4 L1315.0 724.1 L1321.0 725.8 L1327.0 727.5 L1333.0 729.2 L1339.0 730.9 L1345.0 732.6 L1351.0 734.3 L1357.0 736.0 L1363.0 737.7 L1369.0 739.4 L1375.0 741.0 L1381.0 742.7 L1387.0 744.4 L1393.0 746.1 L1399.0 747.8 L1405.0 749.5 L1411.0 751.3 L1413.0 752.0 L1413.0 752.3 L1411.0 751.7 L1405.0 749.9 L1399.0 748.3 L1393.0 746.6 L1387.0 745.0 L1381.0 743.3 L1375.0 741.7 L1369.0 740.0 L1363.0 738.4 L1357.0 736.7 L1351.0 735.1 L1345.0 733.4 L1339.0 731.8 L1333.0 730.1 L1327.0 728.5 L1321.0 726.8 L1315.0 725.2 L1309.0 723.5 L1303.0 721.9 L1297.0 720.2 L1291.0 718.6 L1285.0 716.9 L1279.0 715.3 L1273.0 713.6 L1267.0 712.0 L1261.0 710.3 L1255.0 708.7 L1249.0 707.0 L1243.0 705.4 L1237.0 703.7 L1231.0 702.1 L1225.0 700.4 L1219.0 698.8 L1213.0 697.1 L1207.0 695.5 L1201.0 693.8 L1195.0 692.2 L1189.0 690.5 L1183.0 688.9 L1177.0 687.2 L1171.0 685.6 L1165.0 683.9 L1159.0 682.3 L1153.0 680.7 L1147.0 679.0 L1141.0 677.4 L1135.0 675.7 L1129.0 674.1 L1123.0 672.4 L1117.0 670.8 L1111.0 669.1 L1105.0 667.5 L1099.0 665.8 L1093.0 664.2 L1087.0 662.5 L1081.0 660.9 L1075.0 659.2 L1069.0 657.6 L1063.0 655.9 L1057.0 654.3 L1051.0 652.6 L1045.0 651.0 L1039.0 649.3 L1033.0 647.7 L1027.0 646.0 L1021.0 644.4 L1015.0 642.7 L1009.0 641.1 L1003.0 639.4 L997.0 637.8 L991.0 636.1 L985.0 634.5 L979.0 632.8 L973.0 631.5 L967.0 630.5 L961.0 629.5 L955.0 628.5 L949.0 627.5 L943.0 626.4 L937.0 625.4 L931.0 624.4 L925.0 623.4 L919.0 622.4 L913.0 621.4 L907.0 620.4 L901.0 619.3 L895.0 618.3 L889.0 617.3 L883.0 616.3 L877.0 615.3 L871.0 614.3 L865.0 613.3 L859.0 612.2 L853.0 611.2 L847.0 610.2 L841.0 609.2 L835.0 608.2 L829.0 607.2 L823.0 606.2 L817.0 605.2 L811.0 604.1 L805.0 603.1 L799.0 602.1 L793.0 601.1 L787.0 600.1 L781.0 599.1 L775.0 598.1 L769.0 597.0 L763.0 596.0 L757.0 595.0 L751.0 594.0 L745.0 593.0 L739.0 592.0 L733.0 591.0 L727.0 589.9 L721.0 588.9 L715.0 587.9 L709.0 586.9 L703.0 586.0 L697.0 585.6 L691.0 585.2 L685.0 584.8 L679.0 584.4 L673.0 583.8 L667.0 583.3 L661.0 582.7 L655.0 582.2 L649.0 581.6 L643.0 581.0 L637.0 580.3 L631.0 579.4 L625.0 578.5 L619.0 577.6 L613.0 576.7 L607.0 575.8 L601.0 574.8 L595.0 573.8 L589.0 572.6 L583.0 571.5 L577.0 570.4 L571.0 569.3z" fill="#ad0000"/><path d="M571.0 569.0 L577.0 570.1 L583.0 571.1 L589.0 572.2 L595.0 573.2 L601.0 574.2 L607.0 575.1 L613.0 576.0 L619.0 576.8 L625.0 577.7 L631.0 578.5 L637.0 579.4 L643.0 580.1 L649.0 580.6 L655.0 581.1 L661.0 581.7 L667.0 582.2 L673.0 582.7 L679.0 583.2 L685.0 583.6 L691.0 584.0 L697.0 584.4 L703.0 584.7 L709.0 585.6 L715.0 586.7 L721.0 587.7 L727.0 588.7 L733.0 589.7 L739.0 590.7 L745.0 591.7 L751.0 592.7 L757.0 593.7 L763.0 594.7 L769.0 595.7 L775.0 596.7 L781.0 597.7 L787.0 598.8 L793.0 599.8 L799.0 600.8 L805.0 601.8 L811.0 602.8 L817.0 603.8 L823.0 604.8 L829.0 605.8 L835.0 606.8 L841.0 607.8 L847.0 608.8 L853.0 609.8 L859.0 610.9 L865.0 611.9 L871.0 612.9 L877.0 613.9 L883.0 614.9 L889.0 615.9 L895.0 616.9 L901.0 617.9 L907.0 618.9 L913.0 619.9 L919.0 620.9 L925.0 621.9 L931.0 623.0 L937.0 624.0 L943.0 625.0 L949.0 626.0 L955.0 627.0 L961.0 628.0 L967.0 629.0 L973.0 630.0 L979.0 631.3 L985.0 633.0 L991.0 634.7 L997.0 636.3 L1003.0 638.0 L1009.0 639.7 L1015.0 641.3 L1021.0 643.0 L1027.0 644.7 L1033.0 646.3 L1039.0 648.0 L1045.0 649.7 L1051.0 651.3 L1057.0 653.0 L1063.0 654.7 L1069.0 656.3 L1075.0 658.0 L1081.0 659.7 L1087.0 661.3 L1093.0 663.0 L1099.0 664.7 L1105.0 666.3 L1111.0 668.0 L1117.0 669.6 L1123.0 671.3 L1129.0 673.0 L1135.0 674.6 L1141.0 676.3 L1147.0 678.0 L1153.0 679.6 L1159.0 681.3 L1165.0 683.0 L1171.0 684.6 L1177.0 686.3 L1183.0 688.0 L1189.0 689.6 L1195.0 691.3 L1201.0 693.0 L1207.0 694.6 L1213.0 696.3 L1219.0 698.0 L1225.0 699.6 L1231.0 701.3 L1237.0 702.9 L1243.0 704.6 L1249.0 706.3 L1255.0 707.9 L1261.0 709.6 L1267.0 711.3 L1273.0 712.9 L1279.0 714.6 L1285.0 716.3 L1291.0 717.9 L1297.0 719.6 L1303.0 721.3 L1309.0 722.9 L1315.0 724.6 L1321.0 726.3 L1327.0 727.9 L1333.0 729.6 L1339.0 731.3 L1345.0 732.9 L1351.0 734.6 L1357.0 736.2 L1363.0 737.9 L1369.0 739.6 L1375.0 741.2 L1381.0 742.9 L1387.0 744.6 L1393.0 746.2 L1399.0 747.9 L1405.0 749.6 L1411.0 751.4 L1413.0 752.0 L1413.0 752.3 L1411.0 751.7 L1405.0 750.0 L1399.0 748.3 L1393.0 746.7 L1387.0 745.1 L1381.0 743.5 L1375.0 741.9 L1369.0 740.2 L1363.0 738.6 L1357.0 737.0 L1351.0 735.4 L1345.0 733.8 L1339.0 732.1 L1333.0 730.5 L1327.0 728.9 L1321.0 727.3 L1315.0 725.7 L1309.0 724.0 L1303.0 722.4 L1297.0 720.8 L1291.0 719.2 L1285.0 717.6 L1279.0 715.9 L1273.0 714.3 L1267.0 712.7 L1261.0 711.1 L1255.0 709.5 L1249.0 707.8 L1243.0 706.2 L1237.0 704.6 L1231.0 703.0 L1225.0 701.4 L1219.0 699.7 L1213.0 698.1 L1207.0 696.5 L1201.0 694.9 L1195.0 693.3 L1189.0 691.6 L1183.0 690.0 L1177.0 688.4 L1171.0 686.8 L1165.0 685.2 L1159.0 683.5 L1153.0 681.9 L1147.0 680.3 L1141.0 678.7 L1135.0 677.1 L1129.0 675.5 L1123.0 673.8 L1117.0 672.2 L1111.0 670.6 L1105.0 669.0 L1099.0 667.4 L1093.0 665.7 L1087.0 664.1 L1081.0 662.5 L1075.0 660.9 L1069.0 659.3 L1063.0 657.6 L1057.0 656.0 L1051.0 654.4 L1045.0 652.8 L1039.0 651.2 L1033.0 649.5 L1027.0 647.9 L1021.0 646.3 L1015.0 644.7 L1009.0 643.1 L1003.0 641.4 L997.0 639.8 L991.0 638.2 L985.0 636.6 L979.0 635.0 L973.0 633.6 L967.0 632.6 L961.0 631.6 L955.0 630.6 L949.0 629.5 L943.0 628.5 L937.0 627.5 L931.0 626.5 L925.0 625.5 L919.0 624.4 L913.0 623.4 L907.0 622.4 L901.0 621.4 L895.0 620.3 L889.0 619.3 L883.0 618.3 L877.0 617.3 L871.0 616.2 L865.0 615.2 L859.0 614.2 L853.0 613.2 L847.0 612.2 L841.0 611.1 L835.0 610.1 L829.0 609.1 L823.0 608.1 L817.0 607.0 L811.0 606.0 L805.0 605.0 L799.0 604.0 L793.0 602.9 L787.0 601.9 L781.0 600.9 L775.0 599.9 L769.0 598.9 L763.0 597.8 L757.0 596.8 L751.0 595.8 L745.0 594.8 L739.0 593.7 L733.0 592.7 L727.0 591.7 L721.0 590.7 L715.0 589.6 L709.0 588.6 L703.0 587.7 L697.0 587.2 L691.0 586.8 L685.0 586.3 L679.0 585.9 L673.0 585.3 L667.0 584.7 L661.0 584.1 L655.0 583.4 L649.0 582.8 L643.0 582.2 L637.0 581.4 L631.0 580.4 L625.0 579.4 L619.0 578.4 L613.0 577.4 L607.0 576.4 L601.0 575.4 L595.0 574.2 L589.0 573.0 L583.0 571.7 L577.0 570.5 L571.0 569.3z" fill="#aa0000"/><path d="M571.0 569.0 L577.0 570.2 L583.0 571.3 L589.0 572.5 L595.0 573.7 L601.0 574.8 L607.0 575.7 L613.0 576.7 L619.0 577.6 L625.0 578.6 L631.0 579.5 L637.0 580.5 L643.0 581.3 L649.0 581.8 L655.0 582.4 L661.0 583.0 L667.0 583.6 L673.0 584.2 L679.0 584.8 L685.0 585.2 L691.0 585.6 L697.0 586.0 L703.0 586.4 L709.0 587.4 L715.0 588.4 L721.0 589.4 L727.0 590.4 L733.0 591.4 L739.0 592.5 L745.0 593.5 L751.0 594.5 L757.0 595.5 L763.0 596.5 L769.0 597.5 L775.0 598.6 L781.0 599.6 L787.0 600.6 L793.0 601.6 L799.0 602.6 L805.0 603.6 L811.0 604.7 L817.0 605.7 L823.0 606.7 L829.0 607.7 L835.0 608.7 L841.0 609.8 L847.0 610.8 L853.0 611.8 L859.0 612.8 L865.0 613.8 L871.0 614.8 L877.0 615.9 L883.0 616.9 L889.0 617.9 L895.0 618.9 L901.0 619.9 L907.0 621.0 L913.0 622.0 L919.0 623.0 L925.0 624.0 L931.0 625.0 L937.0 626.0 L943.0 627.1 L949.0 628.1 L955.0 629.1 L961.0 630.1 L967.0 631.1 L973.0 632.1 L979.0 633.5 L985.0 635.1 L991.0 636.7 L997.0 638.4 L1003.0 640.0 L1009.0 641.7 L1015.0 643.3 L1021.0 644.9 L1027.0 646.6 L1033.0 648.2 L1039.0 649.8 L1045.0 651.5 L1051.0 653.1 L1057.0 654.7 L1063.0 656.4 L1069.0 658.0 L1075.0 659.6 L1081.0 661.3 L1087.0 662.9 L1093.0 664.6 L1099.0 666.2 L1105.0 667.8 L1111.0 669.5 L1117.0 671.1 L1123.0 672.7 L1129.0 674.4 L1135.0 676.0 L1141.0 677.6 L1147.0 679.3 L1153.0 680.9 L1159.0 682.6 L1165.0 684.2 L1171.0 685.8 L1177.0 687.5 L1183.0 689.1 L1189.0 690.7 L1195.0 692.4 L1201.0 694.0 L1207.0 695.6 L1213.0 697.3 L1219.0 698.9 L1225.0 700.5 L1231.0 702.2 L1237.0 703.8 L1243.0 705.5 L1249.0 707.1 L1255.0 708.7 L1261.0 710.4 L1267.0 712.0 L1273.0 713.6 L1279.0 715.3 L1285.0 716.9 L1291.0 718.5 L1297.0 720.2 L1303.0 721.8 L1309.0 723.4 L1315.0 725.1 L1321.0 726.7 L1327.0 728.4 L1333.0 730.0 L1339.0 731.6 L1345.0 733.3 L1351.0 734.9 L1357.0 736.5 L1363.0 738.2 L1369.0 739.8 L1375.0 741.4 L1381.0 743.1 L1387.0 744.7 L1393.0 746.3 L1399.0 748.0 L1405.0 749.6 L1411.0 751.4 L1413.0 752.0 L1413.0 752.3 L1411.0 751.7 L1405.0 750.0 L1399.0 748.4 L1393.0 746.8 L1387.0 745.2 L1381.0 743.6 L1375.0 742.0 L1369.0 740.5 L1363.0 738.9 L1357.0 737.3 L1351.0 735.7 L1345.0 734.1 L1339.0 732.5 L1333.0 730.9 L1327.0 729.3 L1321.0 727.7 L1315.0 726.1 L1309.0 724.6 L1303.0 723.0 L1297.0 721.4 L1291.0 719.8 L1285.0 718.2 L1279.0 716.6 L1273.0 715.0 L1267.0 713.4 L1261.0 711.8 L1255.0 710.2 L1249.0 708.7 L1243.0 707.1 L1237.0 705.5 L1231.0 703.9 L1225.0 702.3 L1219.0 700.7 L1213.0 699.1 L1207.0 697.5 L1201.0 695.9 L1195.0 694.3 L1189.0 692.7 L1183.0 691.2 L1177.0 689.6 L1171.0 688.0 L1165.0 686.4 L1159.0 684.8 L1153.0 683.2 L1147.0 681.6 L1141.0 680.0 L1135.0 678.4 L1129.0 676.8 L1123.0 675.3 L1117.0 673.7 L1111.0 672.1 L1105.0 670.5 L1099.0 668.9 L1093.0 667.3 L1087.0 665.7 L1081.0 664.1 L1075.0 662.5 L1069.0 660.9 L1063.0 659.4 L1057.0 657.8 L1051.0 656.2 L1045.0 654.6 L1039.0 653.0 L1033.0 651.4 L1027.0 649.8 L1021.0 648.2 L1015.0 646.6 L1009.0 645.0 L1003.0 643.4 L997.0 641.9 L991.0 640.3 L985.0 638.7 L979.0 637.1 L973.0 635.8 L967.0 634.7 L961.0 633.7 L955.0 632.7 L949.0 631.6 L943.0 630.6 L937.0 629.6 L931.0 628.5 L925.0 627.5 L919.0 626.5 L913.0 625.4 L907.0 624.4 L901.0 623.4 L895.0 622.4 L889.0 621.3 L883.0 620.3 L877.0 619.3 L871.0 618.2 L865.0 617.2 L859.0 616.2 L853.0 615.1 L847.0 614.1 L841.0 613.1 L835.0 612.0 L829.0 611.0 L823.0 610.0 L817.0 608.9 L811.0 607.9 L805.0 606.9 L799.0 605.8 L793.0 604.8 L787.0 603.8 L781.0 602.7 L775.0 601.7 L769.0 600.7 L763.0 599.6 L757.0 598.6 L751.0 597.6 L745.0 596.5 L739.0 595.5 L733.0 594.5 L727.0 593.4 L721.0 592.4 L715.0 591.4 L709.0 590.3 L703.0 589.4 L697.0 588.9 L691.0 588.4 L685.0 587.9 L679.0 587.4 L673.0 586.7 L667.0 586.1 L661.0 585.4 L655.0 584.7 L649.0 584.0 L643.0 583.4 L637.0 582.5 L631.0 581.4 L625.0 580.3 L619.0 579.2 L613.0 578.1 L607.0 577.0 L601.0 575.9 L595.0 574.6 L589.0 573.3 L583.0 572.0 L577.0 570.6 L571.0 569.3z" fill="#a70000"/><path d="M571.0 569.0 L577.0 570.3 L583.0 571.5 L589.0 572.8 L595.0 574.1 L601.0 575.3 L607.0 576.4 L613.0 577.4 L619.0 578.4 L625.0 579.5 L631.0 580.5 L637.0 581.6 L643.0 582.4 L649.0 583.1 L655.0 583.7 L661.0 584.3 L667.0 585.0 L673.0 585.6 L679.0 586.3 L685.0 586.7 L691.0 587.2 L697.0 587.7 L703.0 588.1 L709.0 589.1 L715.0 590.1 L721.0 591.1 L727.0 592.2 L733.0 593.2 L739.0 594.2 L745.0 595.2 L751.0 596.3 L757.0 597.3 L763.0 598.3 L769.0 599.4 L775.0 600.4 L781.0 601.4 L787.0 602.4 L793.0 603.5 L799.0 604.5 L805.0 605.5 L811.0 606.5 L817.0 607.6 L823.0 608.6 L829.0 609.6 L835.0 610.7 L841.0 611.7 L847.0 612.7 L853.0 613.7 L859.0 614.8 L865.0 615.8 L871.0 616.8 L877.0 617.8 L883.0 618.9 L889.0 619.9 L895.0 620.9 L901.0 622.0 L907.0 623.0 L913.0 624.0 L919.0 625.0 L925.0 626.1 L931.0 627.1 L937.0 628.1 L943.0 629.1 L949.0 630.2 L955.0 631.2 L961.0 632.2 L967.0 633.3 L973.0 634.3 L979.0 635.6 L985.0 637.2 L991.0 638.8 L997.0 640.4 L1003.0 642.0 L1009.0 643.6 L1015.0 645.2 L1021.0 646.8 L1027.0 648.5 L1033.0 650.1 L1039.0 651.7 L1045.0 653.3 L1051.0 654.9 L1057.0 656.5 L1063.0 658.1 L1069.0 659.7 L1075.0 661.3 L1081.0 662.9 L1087.0 664.5 L1093.0 666.1 L1099.0 667.7 L1105.0 669.3 L1111.0 670.9 L1117.0 672.6 L1123.0 674.2 L1129.0 675.8 L1135.0 677.4 L1141.0 679.0 L1147.0 680.6 L1153.0 682.2 L1159.0 683.8 L1165.0 685.4 L1171.0 687.0 L1177.0 688.6 L1183.0 690.2 L1189.0 691.8 L1195.0 693.4 L1201.0 695.0 L1207.0 696.7 L1213.0 698.3 L1219.0 699.9 L1225.0 701.5 L1231.0 703.1 L1237.0 704.7 L1243.0 706.3 L1249.0 707.9 L1255.0 709.5 L1261.0 711.1 L1267.0 712.7 L1273.0 714.3 L1279.0 715.9 L1285.0 717.5 L1291.0 719.1 L1297.0 720.8 L1303.0 722.4 L1309.0 724.0 L1315.0 725.6 L1321.0 727.2 L1327.0 728.8 L1333.0 730.4 L1339.0 732.0 L1345.0 733.6 L1351.0 735.2 L1357.0 736.8 L1363.0 738.4 L1369.0 740.0 L1375.0 741.6 L1381.0 743.2 L1387.0 744.9 L1393.0 746.5 L1399.0 748.1 L1405.0 749.7 L1411.0 751.4 L1413.0 752.0 L1413.0 752.3 L1411.0 751.7 L1405.0 750.1 L1399.0 748.5 L1393.0 746.9 L1387.0 745.4 L1381.0 743.8 L1375.0 742.2 L1369.0 740.7 L1363.0 739.1 L1357.0 737.6 L1351.0 736.0 L1345.0 734.4 L1339.0 732.9 L1333.0 731.3 L1327.0 729.8 L1321.0 728.2 L1315.0 726.6 L1309.0 725.1 L1303.0 723.5 L1297.0 722.0 L1291.0 720.4 L1285.0 718.8 L1279.0 717.3 L1273.0 715.7 L1267.0 714.1 L1261.0 712.6 L1255.0 711.0 L1249.0 709.5 L1243.0 707.9 L1237.0 706.3 L1231.0 704.8 L1225.0 703.2 L1219.0 701.7 L1213.0 700.1 L1207.0 698.5 L1201.0 697.0 L1195.0 695.4 L1189.0 693.9 L1183.0 692.3 L1177.0 690.7 L1171.0 689.2 L1165.0 687.6 L1159.0 686.0 L1153.0 684.5 L1147.0 682.9 L1141.0 681.4 L1135.0 679.8 L1129.0 678.2 L1123.0 676.7 L1117.0 675.1 L1111.0 673.6 L1105.0 672.0 L1099.0 670.4 L1093.0 668.9 L1087.0 667.3 L1081.0 665.7 L1075.0 664.2 L1069.0 662.6 L1063.0 661.1 L1057.0 659.5 L1051.0 657.9 L1045.0 656.4 L1039.0 654.8 L1033.0 653.3 L1027.0 651.7 L1021.0 650.1 L1015.0 648.6 L1009.0 647.0 L1003.0 645.5 L997.0 643.9 L991.0 642.3 L985.0 640.8 L979.0 639.2 L973.0 637.9 L967.0 636.9 L961.0 635.8 L955.0 634.8 L949.0 633.7 L943.0 632.7 L937.0 631.7 L931.0 630.6 L925.0 629.6 L919.0 628.5 L913.0 627.5 L907.0 626.4 L901.0 625.4 L895.0 624.4 L889.0 623.3 L883.0 622.3 L877.0 621.2 L871.0 620.2 L865.0 619.2 L859.0 618.1 L853.0 617.1 L847.0 616.0 L841.0 615.0 L835.0 613.9 L829.0 612.9 L823.0 611.9 L817.0 610.8 L811.0 609.8 L805.0 608.7 L799.0 607.7 L793.0 606.6 L787.0 605.6 L781.0 604.6 L775.0 603.5 L769.0 602.5 L763.0 601.4 L757.0 600.4 L751.0 599.4 L745.0 598.3 L739.0 597.3 L733.0 596.2 L727.0 595.2 L721.0 594.1 L715.0 593.1 L709.0 592.1 L703.0 591.1 L697.0 590.6 L691.0 590.0 L685.0 589.5 L679.0 588.9 L673.0 588.2 L667.0 587.5 L661.0 586.7 L655.0 586.0 L649.0 585.3 L643.0 584.5 L637.0 583.6 L631.0 582.4 L625.0 581.2 L619.0 580.0 L613.0 578.8 L607.0 577.6 L601.0 576.5 L595.0 575.1 L589.0 573.6 L583.0 572.2 L577.0 570.7 L571.0 569.3z" fill="#a40000"/><path d="M571.0 569.0 L577.0 570.4 L583.0 571.8 L589.0 573.1 L595.0 574.5 L601.0 575.9 L607.0 577.0 L613.0 578.1 L619.0 579.3 L625.0 580.4 L631.0 581.5 L637.0 582.7 L643.0 583.6 L649.0 584.3 L655.0 585.0 L661.0 585.7 L667.0 586.4 L673.0 587.1 L679.0 587.8 L685.0 588.3 L691.0 588.8 L697.0 589.3 L703.0 589.8 L709.0 590.8 L715.0 591.8 L721.0 592.9 L727.0 593.9 L733.0 594.9 L739.0 596.0 L745.0 597.0 L751.0 598.1 L757.0 599.1 L763.0 600.1 L769.0 601.2 L775.0 602.2 L781.0 603.2 L787.0 604.3 L793.0 605.3 L799.0 606.3 L805.0 607.4 L811.0 608.4 L817.0 609.5 L823.0 610.5 L829.0 611.5 L835.0 612.6 L841.0 613.6 L847.0 614.6 L853.0 615.7 L859.0 616.7 L865.0 617.8 L871.0 618.8 L877.0 619.8 L883.0 620.9 L889.0 621.9 L895.0 622.9 L901.0 624.0 L907.0 625.0 L913.0 626.0 L919.0 627.1 L925.0 628.1 L931.0 629.2 L937.0 630.2 L943.0 631.2 L949.0 632.3 L955.0 633.3 L961.0 634.3 L967.0 635.4 L973.0 636.4 L979.0 637.7 L985.0 639.3 L991.0 640.9 L997.0 642.5 L1003.0 644.0 L1009.0 645.6 L1015.0 647.2 L1021.0 648.8 L1027.0 650.3 L1033.0 651.9 L1039.0 653.5 L1045.0 655.1 L1051.0 656.7 L1057.0 658.2 L1063.0 659.8 L1069.0 661.4 L1075.0 663.0 L1081.0 664.5 L1087.0 666.1 L1093.0 667.7 L1099.0 669.3 L1105.0 670.8 L1111.0 672.4 L1117.0 674.0 L1123.0 675.6 L1129.0 677.2 L1135.0 678.7 L1141.0 680.3 L1147.0 681.9 L1153.0 683.5 L1159.0 685.0 L1165.0 686.6 L1171.0 688.2 L1177.0 689.8 L1183.0 691.4 L1189.0 692.9 L1195.0 694.5 L1201.0 696.1 L1207.0 697.7 L1213.0 699.2 L1219.0 700.8 L1225.0 702.4 L1231.0 704.0 L1237.0 705.6 L1243.0 707.1 L1249.0 708.7 L1255.0 710.3 L1261.0 711.9 L1267.0 713.4 L1273.0 715.0 L1279.0 716.6 L1285.0 718.2 L1291.0 719.8 L1297.0 721.3 L1303.0 722.9 L1309.0 724.5 L1315.0 726.1 L1321.0 727.6 L1327.0 729.2 L1333.0 730.8 L1339.0 732.4 L1345.0 733.9 L1351.0 735.5 L1357.0 737.1 L1363.0 738.7 L1369.0 740.3 L1375.0 741.8 L1381.0 743.4 L1387.0 745.0 L1393.0 746.6 L1399.0 748.1 L1405.0 749.7 L1411.0 751.4 L1413.0 752.0 L1413.0 752.3 L1411.0 751.7 L1405.0 750.1 L1399.0 748.6 L1393.0 747.0 L1387.0 745.5 L1381.0 744.0 L1375.0 742.4 L1369.0 740.9 L1363.0 739.4 L1357.0 737.8 L1351.0 736.3 L1345.0 734.8 L1339.0 733.3 L1333.0 731.7 L1327.0 730.2 L1321.0 728.7 L1315.0 727.1 L1309.0 725.6 L1303.0 724.1 L1297.0 722.5 L1291.0 721.0 L1285.0 719.5 L1279.0 717.9 L1273.0 716.4 L1267.0 714.9 L1261.0 713.3 L1255.0 711.8 L1249.0 710.3 L1243.0 708.7 L1237.0 707.2 L1231.0 705.7 L1225.0 704.1 L1219.0 702.6 L1213.0 701.1 L1207.0 699.5 L1201.0 698.0 L1195.0 696.5 L1189.0 695.0 L1183.0 693.4 L1177.0 691.9 L1171.0 690.4 L1165.0 688.8 L1159.0 687.3 L1153.0 685.8 L1147.0 684.2 L1141.0 682.7 L1135.0 681.2 L1129.0 679.6 L1123.0 678.1 L1117.0 676.6 L1111.0 675.0 L1105.0 673.5 L1099.0 672.0 L1093.0 670.4 L1087.0 668.9 L1081.0 667.4 L1075.0 665.8 L1069.0 664.3 L1063.0 662.8 L1057.0 661.2 L1051.0 659.7 L1045.0 658.2 L1039.0 656.7 L1033.0 655.1 L1027.0 653.6 L1021.0 652.1 L1015.0 650.5 L1009.0 649.0 L1003.0 647.5 L997.0 645.9 L991.0 644.4 L985.0 642.9 L979.0 641.3 L973.0 640.0 L967.0 639.0 L961.0 637.9 L955.0 636.9 L949.0 635.8 L943.0 634.8 L937.0 633.7 L931.0 632.7 L925.0 631.6 L919.0 630.6 L913.0 629.5 L907.0 628.5 L901.0 627.4 L895.0 626.4 L889.0 625.3 L883.0 624.3 L877.0 623.2 L871.0 622.2 L865.0 621.1 L859.0 620.1 L853.0 619.0 L847.0 618.0 L841.0 616.9 L835.0 615.9 L829.0 614.8 L823.0 613.8 L817.0 612.7 L811.0 611.7 L805.0 610.6 L799.0 609.5 L793.0 608.5 L787.0 607.4 L781.0 606.4 L775.0 605.3 L769.0 604.3 L763.0 603.2 L757.0 602.2 L751.0 601.1 L745.0 600.1 L739.0 599.0 L733.0 598.0 L727.0 596.9 L721.0 595.9 L715.0 594.8 L709.0 593.8 L703.0 592.8 L697.0 592.2 L691.0 591.6 L685.0 591.0 L679.0 590.4 L673.0 589.7 L667.0 588.9 L661.0 588.1 L655.0 587.3 L649.0 586.5 L643.0 585.7 L637.0 584.6 L631.0 583.4 L625.0 582.1 L619.0 580.8 L613.0 579.5 L607.0 578.3 L601.0 577.0 L595.0 575.5 L589.0 573.9 L583.0 572.4 L577.0 570.8 L571.0 569.3z" fill="#a10000"/><path d="M571.0 569.0 L577.0 570.5 L583.0 572.0 L589.0 573.5 L595.0 575.0 L601.0 576.4 L607.0 577.6 L613.0 578.8 L619.0 580.1 L625.0 581.3 L631.0 582.5 L637.0 583.7 L643.0 584.7 L649.0 585.5 L655.0 586.3 L661.0 587.0 L667.0 587.8 L673.0 588.5 L679.0 589.3 L685.0 589.9 L691.0 590.4 L697.0 591.0 L703.0 591.6 L709.0 592.5 L715.0 593.6 L721.0 594.6 L727.0 595.7 L733.0 596.7 L739.0 597.7 L745.0 598.8 L751.0 599.8 L757.0 600.9 L763.0 601.9 L769.0 603.0 L775.0 604.0 L781.0 605.1 L787.0 606.1 L793.0 607.2 L799.0 608.2 L805.0 609.3 L811.0 610.3 L817.0 611.3 L823.0 612.4 L829.0 613.4 L835.0 614.5 L841.0 615.5 L847.0 616.6 L853.0 617.6 L859.0 618.7 L865.0 619.7 L871.0 620.8 L877.0 621.8 L883.0 622.9 L889.0 623.9 L895.0 624.9 L901.0 626.0 L907.0 627.0 L913.0 628.1 L919.0 629.1 L925.0 630.2 L931.0 631.2 L937.0 632.3 L943.0 633.3 L949.0 634.4 L955.0 635.4 L961.0 636.5 L967.0 637.5 L973.0 638.5 L979.0 639.8 L985.0 641.4 L991.0 642.9 L997.0 644.5 L1003.0 646.0 L1009.0 647.6 L1015.0 649.1 L1021.0 650.7 L1027.0 652.2 L1033.0 653.8 L1039.0 655.3 L1045.0 656.9 L1051.0 658.4 L1057.0 660.0 L1063.0 661.5 L1069.0 663.1 L1075.0 664.6 L1081.0 666.2 L1087.0 667.7 L1093.0 669.3 L1099.0 670.8 L1105.0 672.4 L1111.0 673.9 L1117.0 675.5 L1123.0 677.0 L1129.0 678.6 L1135.0 680.1 L1141.0 681.6 L1147.0 683.2 L1153.0 684.7 L1159.0 686.3 L1165.0 687.8 L1171.0 689.4 L1177.0 690.9 L1183.0 692.5 L1189.0 694.0 L1195.0 695.6 L1201.0 697.1 L1207.0 698.7 L1213.0 700.2 L1219.0 701.8 L1225.0 703.3 L1231.0 704.9 L1237.0 706.4 L1243.0 708.0 L1249.0 709.5 L1255.0 711.1 L1261.0 712.6 L1267.0 714.2 L1273.0 715.7 L1279.0 717.3 L1285.0 718.8 L1291.0 720.4 L1297.0 721.9 L1303.0 723.5 L1309.0 725.0 L1315.0 726.6 L1321.0 728.1 L1327.0 729.6 L1333.0 731.2 L1339.0 732.7 L1345.0 734.3 L1351.0 735.8 L1357.0 737.4 L1363.0 738.9 L1369.0 740.5 L1375.0 742.0 L1381.0 743.6 L1387.0 745.1 L1393.0 746.7 L1399.0 748.2 L1405.0 749.8 L1411.0 751.4 L1413.0 752.0 L1413.0 752.3 L1411.0 751.7 L1405.0 750.2 L1399.0 748.7 L1393.0 747.1 L1387.0 745.6 L1381.0 744.1 L1375.0 742.6 L1369.0 741.1 L1363.0 739.6 L1357.0 738.1 L1351.0 736.6 L1345.0 735.1 L1339.0 733.6 L1333.0 732.1 L1327.0 730.6 L1321.0 729.1 L1315.0 727.6 L1309.0 726.1 L1303.0 724.6 L1297.0 723.1 L1291.0 721.6 L1285.0 720.1 L1279.0 718.6 L1273.0 717.1 L1267.0 715.6 L1261.0 714.1 L1255.0 712.6 L1249.0 711.1 L1243.0 709.6 L1237.0 708.1 L1231.0 706.6 L1225.0 705.1 L1219.0 703.6 L1213.0 702.1 L1207.0 700.6 L1201.0 699.1 L1195.0 697.6 L1189.0 696.1 L1183.0 694.6 L1177.0 693.0 L1171.0 691.5 L1165.0 690.0 L1159.0 688.5 L1153.0 687.0 L1147.0 685.5 L1141.0 684.0 L1135.0 682.5 L1129.0 681.0 L1123.0 679.5 L1117.0 678.0 L1111.0 676.5 L1105.0 675.0 L1099.0 673.5 L1093.0 672.0 L1087.0 670.5 L1081.0 669.0 L1075.0 667.5 L1069.0 666.0 L1063.0 664.5 L1057.0 663.0 L1051.0 661.5 L1045.0 660.0 L1039.0 658.5 L1033.0 657.0 L1027.0 655.5 L1021.0 654.0 L1015.0 652.5 L1009.0 651.0 L1003.0 649.5 L997.0 648.0 L991.0 646.5 L985.0 645.0 L979.0 643.5 L973.0 642.2 L967.0 641.1 L961.0 640.1 L955.0 639.0 L949.0 637.9 L943.0 636.9 L937.0 635.8 L931.0 634.7 L925.0 633.7 L919.0 632.6 L913.0 631.6 L907.0 630.5 L901.0 629.4 L895.0 628.4 L889.0 627.3 L883.0 626.3 L877.0 625.2 L871.0 624.1 L865.0 623.1 L859.0 622.0 L853.0 621.0 L847.0 619.9 L841.0 618.8 L835.0 617.8 L829.0 616.7 L823.0 615.7 L817.0 614.6 L811.0 613.5 L805.0 612.5 L799.0 611.4 L793.0 610.3 L787.0 609.3 L781.0 608.2 L775.0 607.2 L769.0 606.1 L763.0 605.0 L757.0 604.0 L751.0 602.9 L745.0 601.9 L739.0 600.8 L733.0 599.7 L727.0 598.7 L721.0 597.6 L715.0 596.6 L709.0 595.5 L703.0 594.5 L697.0 593.9 L691.0 593.2 L685.0 592.6 L679.0 592.0 L673.0 591.1 L667.0 590.3 L661.0 589.4 L655.0 588.5 L649.0 587.7 L643.0 586.8 L637.0 585.7 L631.0 584.4 L625.0 583.0 L619.0 581.6 L613.0 580.3 L607.0 578.9 L601.0 577.5 L595.0 575.9 L589.0 574.3 L583.0 572.6 L577.0 571.0 L571.0 569.3z" fill="#9e0000"/><path d="M571.0 569.0 L577.0 570.6 L583.0 572.2 L589.0 573.8 L595.0 575.4 L601.0 576.9 L607.0 578.3 L613.0 579.6 L619.0 580.9 L625.0 582.2 L631.0 583.5 L637.0 584.8 L643.0 585.9 L649.0 586.7 L655.0 587.5 L661.0 588.3 L667.0 589.2 L673.0 590.0 L679.0 590.8 L685.0 591.4 L691.0 592.0 L697.0 592.6 L703.0 593.3 L709.0 594.2 L715.0 595.3 L721.0 596.3 L727.0 597.4 L733.0 598.5 L739.0 599.5 L745.0 600.6 L751.0 601.6 L757.0 602.7 L763.0 603.7 L769.0 604.8 L775.0 605.8 L781.0 606.9 L787.0 608.0 L793.0 609.0 L799.0 610.1 L805.0 611.1 L811.0 612.2 L817.0 613.2 L823.0 614.3 L829.0 615.3 L835.0 616.4 L841.0 617.5 L847.0 618.5 L853.0 619.6 L859.0 620.6 L865.0 621.7 L871.0 622.7 L877.0 623.8 L883.0 624.8 L889.0 625.9 L895.0 627.0 L901.0 628.0 L907.0 629.1 L913.0 630.1 L919.0 631.2 L925.0 632.2 L931.0 633.3 L937.0 634.3 L943.0 635.4 L949.0 636.5 L955.0 637.5 L961.0 638.6 L967.0 639.6 L973.0 640.7 L979.0 642.0 L985.0 643.5 L991.0 645.0 L997.0 646.5 L1003.0 648.0 L1009.0 649.6 L1015.0 651.1 L1021.0 652.6 L1027.0 654.1 L1033.0 655.6 L1039.0 657.2 L1045.0 658.7 L1051.0 660.2 L1057.0 661.7 L1063.0 663.2 L1069.0 664.8 L1075.0 666.3 L1081.0 667.8 L1087.0 669.3 L1093.0 670.8 L1099.0 672.3 L1105.0 673.9 L1111.0 675.4 L1117.0 676.9 L1123.0 678.4 L1129.0 679.9 L1135.0 681.5 L1141.0 683.0 L1147.0 684.5 L1153.0 686.0 L1159.0 687.5 L1165.0 689.1 L1171.0 690.6 L1177.0 692.1 L1183.0 693.6 L1189.0 695.1 L1195.0 696.7 L1201.0 698.2 L1207.0 699.7 L1213.0 701.2 L1219.0 702.7 L1225.0 704.3 L1231.0 705.8 L1237.0 707.3 L1243.0 708.8 L1249.0 710.3 L1255.0 711.8 L1261.0 713.4 L1267.0 714.9 L1273.0 716.4 L1279.0 717.9 L1285.0 719.4 L1291.0 721.0 L1297.0 722.5 L1303.0 724.0 L1309.0 725.5 L1315.0 727.0 L1321.0 728.6 L1327.0 730.1 L1333.0 731.6 L1339.0 733.1 L1345.0 734.6 L1351.0 736.2 L1357.0 737.7 L1363.0 739.2 L1369.0 740.7 L1375.0 742.2 L1381.0 743.8 L1387.0 745.3 L1393.0 746.8 L1399.0 748.3 L1405.0 749.8 L1411.0 751.4 L1413.0 752.0 L1413.0 752.3 L1411.0 751.8 L1405.0 750.2 L1399.0 748.7 L1393.0 747.3 L1387.0 745.8 L1381.0 744.3 L1375.0 742.8 L1369.0 741.4 L1363.0 739.9 L1357.0 738.4 L1351.0 736.9 L1345.0 735.5 L1339.0 734.0 L1333.0 732.5 L1327.0 731.0 L1321.0 729.6 L1315.0 728.1 L1309.0 726.6 L1303.0 725.2 L1297.0 723.7 L1291.0 722.2 L1285.0 720.7 L1279.0 719.3 L1273.0 717.8 L1267.0 716.3 L1261.0 714.8 L1255.0 713.4 L1249.0 711.9 L1243.0 710.4 L1237.0 708.9 L1231.0 707.5 L1225.0 706.0 L1219.0 704.5 L1213.0 703.1 L1207.0 701.6 L1201.0 700.1 L1195.0 698.6 L1189.0 697.2 L1183.0 695.7 L1177.0 694.2 L1171.0 692.7 L1165.0 691.3 L1159.0 689.8 L1153.0 688.3 L1147.0 686.8 L1141.0 685.4 L1135.0 683.9 L1129.0 682.4 L1123.0 680.9 L1117.0 679.5 L1111.0 678.0 L1105.0 676.5 L1099.0 675.1 L1093.0 673.6 L1087.0 672.1 L1081.0 670.6 L1075.0 669.2 L1069.0 667.7 L1063.0 666.2 L1057.0 664.7 L1051.0 663.3 L1045.0 661.8 L1039.0 660.3 L1033.0 658.8 L1027.0 657.4 L1021.0 655.9 L1015.0 654.4 L1009.0 652.9 L1003.0 651.5 L997.0 650.0 L991.0 648.5 L985.0 647.1 L979.0 645.6 L973.0 644.3 L967.0 643.2 L961.0 642.2 L955.0 641.1 L949.0 640.0 L943.0 639.0 L937.0 637.9 L931.0 636.8 L925.0 635.7 L919.0 634.7 L913.0 633.6 L907.0 632.5 L901.0 631.5 L895.0 630.4 L889.0 629.3 L883.0 628.3 L877.0 627.2 L871.0 626.1 L865.0 625.0 L859.0 624.0 L853.0 622.9 L847.0 621.8 L841.0 620.8 L835.0 619.7 L829.0 618.6 L823.0 617.5 L817.0 616.5 L811.0 615.4 L805.0 614.3 L799.0 613.3 L793.0 612.2 L787.0 611.1 L781.0 610.1 L775.0 609.0 L769.0 607.9 L763.0 606.8 L757.0 605.8 L751.0 604.7 L745.0 603.6 L739.0 602.6 L733.0 601.5 L727.0 600.4 L721.0 599.4 L715.0 598.3 L709.0 597.2 L703.0 596.2 L697.0 595.5 L691.0 594.8 L685.0 594.2 L679.0 593.5 L673.0 592.6 L667.0 591.6 L661.0 590.7 L655.0 589.8 L649.0 588.9 L643.0 588.0 L637.0 586.8 L631.0 585.4 L625.0 583.9 L619.0 582.4 L613.0 581.0 L607.0 579.5 L601.0 578.1 L595.0 576.4 L589.0 574.6 L583.0 572.8 L577.0 571.1 L571.0 569.3z" fill="#9b0000"/><path d="M571.0 569.0 L577.0 570.7 L583.0 572.4 L589.0 574.1 L595.0 575.8 L601.0 577.5 L607.0 578.9 L613.0 580.3 L619.0 581.7 L625.0 583.1 L631.0 584.5 L637.0 585.9 L643.0 587.0 L649.0 587.9 L655.0 588.8 L661.0 589.7 L667.0 590.6 L673.0 591.4 L679.0 592.3 L685.0 593.0 L691.0 593.6 L697.0 594.3 L703.0 595.0 L709.0 596.0 L715.0 597.0 L721.0 598.1 L727.0 599.1 L733.0 600.2 L739.0 601.3 L745.0 602.3 L751.0 603.4 L757.0 604.5 L763.0 605.5 L769.0 606.6 L775.0 607.7 L781.0 608.7 L787.0 609.8 L793.0 610.9 L799.0 611.9 L805.0 613.0 L811.0 614.1 L817.0 615.1 L823.0 616.2 L829.0 617.3 L835.0 618.3 L841.0 619.4 L847.0 620.4 L853.0 621.5 L859.0 622.6 L865.0 623.6 L871.0 624.7 L877.0 625.8 L883.0 626.8 L889.0 627.9 L895.0 629.0 L901.0 630.0 L907.0 631.1 L913.0 632.2 L919.0 633.2 L925.0 634.3 L931.0 635.4 L937.0 636.4 L943.0 637.5 L949.0 638.6 L955.0 639.6 L961.0 640.7 L967.0 641.7 L973.0 642.8 L979.0 644.1 L985.0 645.6 L991.0 647.1 L997.0 648.6 L1003.0 650.0 L1009.0 651.5 L1015.0 653.0 L1021.0 654.5 L1027.0 656.0 L1033.0 657.5 L1039.0 659.0 L1045.0 660.5 L1051.0 662.0 L1057.0 663.5 L1063.0 664.9 L1069.0 666.4 L1075.0 667.9 L1081.0 669.4 L1087.0 670.9 L1093.0 672.4 L1099.0 673.9 L1105.0 675.4 L1111.0 676.9 L1117.0 678.4 L1123.0 679.8 L1129.0 681.3 L1135.0 682.8 L1141.0 684.3 L1147.0 685.8 L1153.0 687.3 L1159.0 688.8 L1165.0 690.3 L1171.0 691.8 L1177.0 693.3 L1183.0 694.7 L1189.0 696.2 L1195.0 697.7 L1201.0 699.2 L1207.0 700.7 L1213.0 702.2 L1219.0 703.7 L1225.0 705.2 L1231.0 706.7 L1237.0 708.2 L1243.0 709.6 L1249.0 711.1 L1255.0 712.6 L1261.0 714.1 L1267.0 715.6 L1273.0 717.1 L1279.0 718.6 L1285.0 720.1 L1291.0 721.6 L1297.0 723.1 L1303.0 724.5 L1309.0 726.0 L1315.0 727.5 L1321.0 729.0 L1327.0 730.5 L1333.0 732.0 L1339.0 733.5 L1345.0 735.0 L1351.0 736.5 L1357.0 738.0 L1363.0 739.4 L1369.0 740.9 L1375.0 742.4 L1381.0 743.9 L1387.0 745.4 L1393.0 746.9 L1399.0 748.4 L1405.0 749.9 L1411.0 751.4 L1413.0 752.0 L1413.0 752.3 L1411.0 751.8 L1405.0 750.3 L1399.0 748.8 L1393.0 747.4 L1387.0 745.9 L1381.0 744.5 L1375.0 743.0 L1369.0 741.6 L1363.0 740.1 L1357.0 738.7 L1351.0 737.3 L1345.0 735.8 L1339.0 734.4 L1333.0 732.9 L1327.0 731.5 L1321.0 730.0 L1315.0 728.6 L1309.0 727.1 L1303.0 725.7 L1297.0 724.3 L1291.0 722.8 L1285.0 721.4 L1279.0 719.9 L1273.0 718.5 L1267.0 717.0 L1261.0 715.6 L1255.0 714.1 L1249.0 712.7 L1243.0 711.3 L1237.0 709.8 L1231.0 708.4 L1225.0 706.9 L1219.0 705.5 L1213.0 704.0 L1207.0 702.6 L1201.0 701.1 L1195.0 699.7 L1189.0 698.3 L1183.0 696.8 L1177.0 695.4 L1171.0 693.9 L1165.0 692.5 L1159.0 691.0 L1153.0 689.6 L1147.0 688.1 L1141.0 686.7 L1135.0 685.3 L1129.0 683.8 L1123.0 682.4 L1117.0 680.9 L1111.0 679.5 L1105.0 678.0 L1099.0 676.6 L1093.0 675.1 L1087.0 673.7 L1081.0 672.3 L1075.0 670.8 L1069.0 669.4 L1063.0 667.9 L1057.0 666.5 L1051.0 665.0 L1045.0 663.6 L1039.0 662.1 L1033.0 660.7 L1027.0 659.3 L1021.0 657.8 L1015.0 656.4 L1009.0 654.9 L1003.0 653.5 L997.0 652.0 L991.0 650.6 L985.0 649.1 L979.0 647.7 L973.0 646.4 L967.0 645.4 L961.0 644.3 L955.0 643.2 L949.0 642.1 L943.0 641.0 L937.0 640.0 L931.0 638.9 L925.0 637.8 L919.0 636.7 L913.0 635.6 L907.0 634.6 L901.0 633.5 L895.0 632.4 L889.0 631.3 L883.0 630.2 L877.0 629.2 L871.0 628.1 L865.0 627.0 L859.0 625.9 L853.0 624.8 L847.0 623.8 L841.0 622.7 L835.0 621.6 L829.0 620.5 L823.0 619.4 L817.0 618.4 L811.0 617.3 L805.0 616.2 L799.0 615.1 L793.0 614.0 L787.0 613.0 L781.0 611.9 L775.0 610.8 L769.0 609.7 L763.0 608.6 L757.0 607.6 L751.0 606.5 L745.0 605.4 L739.0 604.3 L733.0 603.3 L727.0 602.2 L721.0 601.1 L715.0 600.0 L709.0 598.9 L703.0 597.9 L697.0 597.2 L691.0 596.5 L685.0 595.7 L679.0 595.0 L673.0 594.0 L667.0 593.0 L661.0 592.1 L655.0 591.1 L649.0 590.1 L643.0 589.1 L637.0 587.9 L631.0 586.3 L625.0 584.8 L619.0 583.3 L613.0 581.7 L607.0 580.2 L601.0 578.6 L595.0 576.8 L589.0 574.9 L583.0 573.0 L577.0 571.2 L571.0 569.3z" fill="#980000"/><path d="M571.0 569.0 L577.0 570.8 L583.0 572.6 L589.0 574.4 L595.0 576.3 L601.0 578.0 L607.0 579.5 L613.0 581.0 L619.0 582.5 L625.0 584.0 L631.0 585.5 L637.0 587.0 L643.0 588.2 L649.0 589.1 L655.0 590.1 L661.0 591.0 L667.0 592.0 L673.0 592.9 L679.0 593.8 L685.0 594.5 L691.0 595.3 L697.0 596.0 L703.0 596.7 L709.0 597.7 L715.0 598.7 L721.0 599.8 L727.0 600.9 L733.0 602.0 L739.0 603.0 L745.0 604.1 L751.0 605.2 L757.0 606.3 L763.0 607.3 L769.0 608.4 L775.0 609.5 L781.0 610.6 L787.0 611.6 L793.0 612.7 L799.0 613.8 L805.0 614.9 L811.0 615.9 L817.0 617.0 L823.0 618.1 L829.0 619.2 L835.0 620.2 L841.0 621.3 L847.0 622.4 L853.0 623.5 L859.0 624.5 L865.0 625.6 L871.0 626.7 L877.0 627.8 L883.0 628.8 L889.0 629.9 L895.0 631.0 L901.0 632.1 L907.0 633.1 L913.0 634.2 L919.0 635.3 L925.0 636.4 L931.0 637.4 L937.0 638.5 L943.0 639.6 L949.0 640.6 L955.0 641.7 L961.0 642.8 L967.0 643.9 L973.0 644.9 L979.0 646.2 L985.0 647.7 L991.0 649.1 L997.0 650.6 L1003.0 652.1 L1009.0 653.5 L1015.0 655.0 L1021.0 656.4 L1027.0 657.9 L1033.0 659.4 L1039.0 660.8 L1045.0 662.3 L1051.0 663.7 L1057.0 665.2 L1063.0 666.7 L1069.0 668.1 L1075.0 669.6 L1081.0 671.0 L1087.0 672.5 L1093.0 674.0 L1099.0 675.4 L1105.0 676.9 L1111.0 678.4 L1117.0 679.8 L1123.0 681.3 L1129.0 682.7 L1135.0 684.2 L1141.0 685.7 L1147.0 687.1 L1153.0 688.6 L1159.0 690.0 L1165.0 691.5 L1171.0 693.0 L1177.0 694.4 L1183.0 695.9 L1189.0 697.3 L1195.0 698.8 L1201.0 700.3 L1207.0 701.7 L1213.0 703.2 L1219.0 704.6 L1225.0 706.1 L1231.0 707.6 L1237.0 709.0 L1243.0 710.5 L1249.0 711.9 L1255.0 713.4 L1261.0 714.9 L1267.0 716.3 L1273.0 717.8 L1279.0 719.3 L1285.0 720.7 L1291.0 722.2 L1297.0 723.6 L1303.0 725.1 L1309.0 726.6 L1315.0 728.0 L1321.0 729.5 L1327.0 730.9 L1333.0 732.4 L1339.0 733.9 L1345.0 735.3 L1351.0 736.8 L1357.0 738.2 L1363.0 739.7 L1369.0 741.2 L1375.0 742.6 L1381.0 744.1 L1387.0 745.5 L1393.0 747.0 L1399.0 748.5 L1405.0 749.9 L1411.0 751.5 L1413.0 752.0 L1413.0 752.3 L1411.0 751.8 L1405.0 750.3 L1399.0 748.9 L1393.0 747.5 L1387.0 746.1 L1381.0 744.6 L1375.0 743.2 L1369.0 741.8 L1363.0 740.4 L1357.0 739.0 L1351.0 737.6 L1345.0 736.2 L1339.0 734.7 L1333.0 733.3 L1327.0 731.9 L1321.0 730.5 L1315.0 729.1 L1309.0 727.7 L1303.0 726.2 L1297.0 724.8 L1291.0 723.4 L1285.0 722.0 L1279.0 720.6 L1273.0 719.2 L1267.0 717.8 L1261.0 716.3 L1255.0 714.9 L1249.0 713.5 L1243.0 712.1 L1237.0 710.7 L1231.0 709.3 L1225.0 707.9 L1219.0 706.4 L1213.0 705.0 L1207.0 703.6 L1201.0 702.2 L1195.0 700.8 L1189.0 699.4 L1183.0 697.9 L1177.0 696.5 L1171.0 695.1 L1165.0 693.7 L1159.0 692.3 L1153.0 690.9 L1147.0 689.5 L1141.0 688.0 L1135.0 686.6 L1129.0 685.2 L1123.0 683.8 L1117.0 682.4 L1111.0 681.0 L1105.0 679.5 L1099.0 678.1 L1093.0 676.7 L1087.0 675.3 L1081.0 673.9 L1075.0 672.5 L1069.0 671.1 L1063.0 669.6 L1057.0 668.2 L1051.0 666.8 L1045.0 665.4 L1039.0 664.0 L1033.0 662.6 L1027.0 661.1 L1021.0 659.7 L1015.0 658.3 L1009.0 656.9 L1003.0 655.5 L997.0 654.1 L991.0 652.7 L985.0 651.2 L979.0 649.8 L973.0 648.6 L967.0 647.5 L961.0 646.4 L955.0 645.3 L949.0 644.2 L943.0 643.1 L937.0 642.0 L931.0 640.9 L925.0 639.9 L919.0 638.8 L913.0 637.7 L907.0 636.6 L901.0 635.5 L895.0 634.4 L889.0 633.3 L883.0 632.2 L877.0 631.1 L871.0 630.1 L865.0 629.0 L859.0 627.9 L853.0 626.8 L847.0 625.7 L841.0 624.6 L835.0 623.5 L829.0 622.4 L823.0 621.3 L817.0 620.3 L811.0 619.2 L805.0 618.1 L799.0 617.0 L793.0 615.9 L787.0 614.8 L781.0 613.7 L775.0 612.6 L769.0 611.5 L763.0 610.5 L757.0 609.4 L751.0 608.3 L745.0 607.2 L739.0 606.1 L733.0 605.0 L727.0 603.9 L721.0 602.8 L715.0 601.7 L709.0 600.6 L703.0 599.6 L697.0 598.8 L691.0 598.1 L685.0 597.3 L679.0 596.5 L673.0 595.5 L667.0 594.4 L661.0 593.4 L655.0 592.4 L649.0 591.3 L643.0 590.3 L637.0 589.0 L631.0 587.3 L625.0 585.7 L619.0 584.1 L613.0 582.4 L607.0 580.8 L601.0 579.2 L595.0 577.2 L589.0 575.2 L583.0 573.3 L577.0 571.3 L571.0 569.3z" fill="#940000"/><path d="M571.0 569.0 L577.0 570.9 L583.0 572.8 L589.0 574.8 L595.0 576.7 L601.0 578.6 L607.0 580.1 L613.0 581.7 L619.0 583.3 L625.0 584.9 L631.0 586.5 L637.0 588.1 L643.0 589.4 L649.0 590.4 L655.0 591.4 L661.0 592.4 L667.0 593.4 L673.0 594.4 L679.0 595.4 L685.0 596.1 L691.0 596.9 L697.0 597.6 L703.0 598.4 L709.0 599.4 L715.0 600.5 L721.0 601.6 L727.0 602.6 L733.0 603.7 L739.0 604.8 L745.0 605.9 L751.0 607.0 L757.0 608.1 L763.0 609.1 L769.0 610.2 L775.0 611.3 L781.0 612.4 L787.0 613.5 L793.0 614.6 L799.0 615.6 L805.0 616.7 L811.0 617.8 L817.0 618.9 L823.0 620.0 L829.0 621.1 L835.0 622.1 L841.0 623.2 L847.0 624.3 L853.0 625.4 L859.0 626.5 L865.0 627.6 L871.0 628.7 L877.0 629.7 L883.0 630.8 L889.0 631.9 L895.0 633.0 L901.0 634.1 L907.0 635.2 L913.0 636.2 L919.0 637.3 L925.0 638.4 L931.0 639.5 L937.0 640.6 L943.0 641.7 L949.0 642.7 L955.0 643.8 L961.0 644.9 L967.0 646.0 L973.0 647.1 L979.0 648.3 L985.0 649.8 L991.0 651.2 L997.0 652.6 L1003.0 654.1 L1009.0 655.5 L1015.0 656.9 L1021.0 658.4 L1027.0 659.8 L1033.0 661.2 L1039.0 662.7 L1045.0 664.1 L1051.0 665.5 L1057.0 666.9 L1063.0 668.4 L1069.0 669.8 L1075.0 671.2 L1081.0 672.7 L1087.0 674.1 L1093.0 675.5 L1099.0 677.0 L1105.0 678.4 L1111.0 679.8 L1117.0 681.3 L1123.0 682.7 L1129.0 684.1 L1135.0 685.6 L1141.0 687.0 L1147.0 688.4 L1153.0 689.9 L1159.0 691.3 L1165.0 692.7 L1171.0 694.1 L1177.0 695.6 L1183.0 697.0 L1189.0 698.4 L1195.0 699.9 L1201.0 701.3 L1207.0 702.7 L1213.0 704.2 L1219.0 705.6 L1225.0 707.0 L1231.0 708.5 L1237.0 709.9 L1243.0 711.3 L1249.0 712.8 L1255.0 714.2 L1261.0 715.6 L1267.0 717.1 L1273.0 718.5 L1279.0 719.9 L1285.0 721.3 L1291.0 722.8 L1297.0 724.2 L1303.0 725.6 L1309.0 727.1 L1315.0 728.5 L1321.0 729.9 L1327.0 731.4 L1333.0 732.8 L1339.0 734.2 L1345.0 735.7 L1351.0 737.1 L1357.0 738.5 L1363.0 740.0 L1369.0 741.4 L1375.0 742.8 L1381.0 744.3 L1387.0 745.7 L1393.0 747.1 L1399.0 748.5 L1405.0 750.0 L1411.0 751.5 L1413.0 752.0 L1413.0 752.3 L1411.0 751.8 L1405.0 750.4 L1399.0 749.0 L1393.0 747.6 L1387.0 746.2 L1381.0 744.8 L1375.0 743.4 L1369.0 742.0 L1363.0 740.7 L1357.0 739.3 L1351.0 737.9 L1345.0 736.5 L1339.0 735.1 L1333.0 733.7 L1327.0 732.3 L1321.0 731.0 L1315.0 729.6 L1309.0 728.2 L1303.0 726.8 L1297.0 725.4 L1291.0 724.0 L1285.0 722.6 L1279.0 721.3 L1273.0 719.9 L1267.0 718.5 L1261.0 717.1 L1255.0 715.7 L1249.0 714.3 L1243.0 712.9 L1237.0 711.6 L1231.0 710.2 L1225.0 708.8 L1219.0 707.4 L1213.0 706.0 L1207.0 704.6 L1201.0 703.2 L1195.0 701.8 L1189.0 700.5 L1183.0 699.1 L1177.0 697.7 L1171.0 696.3 L1165.0 694.9 L1159.0 693.5 L1153.0 692.1 L1147.0 690.8 L1141.0 689.4 L1135.0 688.0 L1129.0 686.6 L1123.0 685.2 L1117.0 683.8 L1111.0 682.4 L1105.0 681.1 L1099.0 679.7 L1093.0 678.3 L1087.0 676.9 L1081.0 675.5 L1075.0 674.1 L1069.0 672.7 L1063.0 671.4 L1057.0 670.0 L1051.0 668.6 L1045.0 667.2 L1039.0 665.8 L1033.0 664.4 L1027.0 663.0 L1021.0 661.7 L1015.0 660.3 L1009.0 658.9 L1003.0 657.5 L997.0 656.1 L991.0 654.7 L985.0 653.3 L979.0 651.9 L973.0 650.7 L967.0 649.6 L961.0 648.5 L955.0 647.4 L949.0 646.3 L943.0 645.2 L937.0 644.1 L931.0 643.0 L925.0 641.9 L919.0 640.8 L913.0 639.7 L907.0 638.6 L901.0 637.5 L895.0 636.4 L889.0 635.3 L883.0 634.2 L877.0 633.1 L871.0 632.0 L865.0 630.9 L859.0 629.8 L853.0 628.7 L847.0 627.6 L841.0 626.5 L835.0 625.4 L829.0 624.3 L823.0 623.2 L817.0 622.1 L811.0 621.0 L805.0 619.9 L799.0 618.8 L793.0 617.7 L787.0 616.6 L781.0 615.6 L775.0 614.5 L769.0 613.4 L763.0 612.3 L757.0 611.2 L751.0 610.1 L745.0 609.0 L739.0 607.9 L733.0 606.8 L727.0 605.7 L721.0 604.6 L715.0 603.5 L709.0 602.4 L703.0 601.3 L697.0 600.5 L691.0 599.7 L685.0 598.8 L679.0 598.0 L673.0 596.9 L667.0 595.8 L661.0 594.7 L655.0 593.6 L649.0 592.6 L643.0 591.5 L637.0 590.1 L631.0 588.3 L625.0 586.6 L619.0 584.9 L613.0 583.1 L607.0 581.4 L601.0 579.7 L595.0 577.7 L589.0 575.6 L583.0 573.5 L577.0 571.4 L571.0 569.3z" fill="#910000"/><path d="M571.0 569.0 L577.0 571.0 L583.0 573.1 L589.0 575.1 L595.0 577.1 L601.0 579.1 L607.0 580.8 L613.0 582.4 L619.0 584.1 L625.0 585.8 L631.0 587.5 L637.0 589.1 L643.0 590.5 L649.0 591.6 L655.0 592.6 L661.0 593.7 L667.0 594.8 L673.0 595.8 L679.0 596.9 L685.0 597.7 L691.0 598.5 L697.0 599.3 L703.0 600.1 L709.0 601.1 L715.0 602.2 L721.0 603.3 L727.0 604.4 L733.0 605.5 L739.0 606.6 L745.0 607.7 L751.0 608.8 L757.0 609.9 L763.0 610.9 L769.0 612.0 L775.0 613.1 L781.0 614.2 L787.0 615.3 L793.0 616.4 L799.0 617.5 L805.0 618.6 L811.0 619.7 L817.0 620.8 L823.0 621.9 L829.0 623.0 L835.0 624.1 L841.0 625.2 L847.0 626.3 L853.0 627.3 L859.0 628.4 L865.0 629.5 L871.0 630.6 L877.0 631.7 L883.0 632.8 L889.0 633.9 L895.0 635.0 L901.0 636.1 L907.0 637.2 L913.0 638.3 L919.0 639.4 L925.0 640.5 L931.0 641.6 L937.0 642.7 L943.0 643.7 L949.0 644.8 L955.0 645.9 L961.0 647.0 L967.0 648.1 L973.0 649.2 L979.0 650.5 L985.0 651.9 L991.0 653.3 L997.0 654.7 L1003.0 656.1 L1009.0 657.5 L1015.0 658.9 L1021.0 660.3 L1027.0 661.7 L1033.0 663.1 L1039.0 664.5 L1045.0 665.9 L1051.0 667.3 L1057.0 668.7 L1063.0 670.1 L1069.0 671.5 L1075.0 672.9 L1081.0 674.3 L1087.0 675.7 L1093.0 677.1 L1099.0 678.5 L1105.0 679.9 L1111.0 681.3 L1117.0 682.7 L1123.0 684.1 L1129.0 685.5 L1135.0 686.9 L1141.0 688.3 L1147.0 689.7 L1153.0 691.1 L1159.0 692.5 L1165.0 693.9 L1171.0 695.3 L1177.0 696.7 L1183.0 698.1 L1189.0 699.5 L1195.0 700.9 L1201.0 702.3 L1207.0 703.8 L1213.0 705.2 L1219.0 706.6 L1225.0 708.0 L1231.0 709.4 L1237.0 710.8 L1243.0 712.2 L1249.0 713.6 L1255.0 715.0 L1261.0 716.4 L1267.0 717.8 L1273.0 719.2 L1279.0 720.6 L1285.0 722.0 L1291.0 723.4 L1297.0 724.8 L1303.0 726.2 L1309.0 727.6 L1315.0 729.0 L1321.0 730.4 L1327.0 731.8 L1333.0 733.2 L1339.0 734.6 L1345.0 736.0 L1351.0 737.4 L1357.0 738.8 L1363.0 740.2 L1369.0 741.6 L1375.0 743.0 L1381.0 744.4 L1387.0 745.8 L1393.0 747.2 L1399.0 748.6 L1405.0 750.0 L1411.0 751.5 L1413.0 752.0 L1413.0 752.3 L1411.0 751.8 L1405.0 750.4 L1399.0 749.1 L1393.0 747.7 L1387.0 746.3 L1381.0 745.0 L1375.0 743.6 L1369.0 742.3 L1363.0 740.9 L1357.0 739.6 L1351.0 738.2 L1345.0 736.8 L1339.0 735.5 L1333.0 734.1 L1327.0 732.8 L1321.0 731.4 L1315.0 730.1 L1309.0 728.7 L1303.0 727.3 L1297.0 726.0 L1291.0 724.6 L1285.0 723.3 L1279.0 721.9 L1273.0 720.6 L1267.0 719.2 L1261.0 717.8 L1255.0 716.5 L1249.0 715.1 L1243.0 713.8 L1237.0 712.4 L1231.0 711.1 L1225.0 709.7 L1219.0 708.3 L1213.0 707.0 L1207.0 705.6 L1201.0 704.3 L1195.0 702.9 L1189.0 701.6 L1183.0 700.2 L1177.0 698.8 L1171.0 697.5 L1165.0 696.1 L1159.0 694.8 L1153.0 693.4 L1147.0 692.1 L1141.0 690.7 L1135.0 689.4 L1129.0 688.0 L1123.0 686.6 L1117.0 685.3 L1111.0 683.9 L1105.0 682.6 L1099.0 681.2 L1093.0 679.9 L1087.0 678.5 L1081.0 677.1 L1075.0 675.8 L1069.0 674.4 L1063.0 673.1 L1057.0 671.7 L1051.0 670.4 L1045.0 669.0 L1039.0 667.6 L1033.0 666.3 L1027.0 664.9 L1021.0 663.6 L1015.0 662.2 L1009.0 660.9 L1003.0 659.5 L997.0 658.1 L991.0 656.8 L985.0 655.4 L979.0 654.1 L973.0 652.8 L967.0 651.7 L961.0 650.6 L955.0 649.5 L949.0 648.4 L943.0 647.3 L937.0 646.2 L931.0 645.1 L925.0 644.0 L919.0 642.9 L913.0 641.8 L907.0 640.7 L901.0 639.5 L895.0 638.4 L889.0 637.3 L883.0 636.2 L877.0 635.1 L871.0 634.0 L865.0 632.9 L859.0 631.8 L853.0 630.7 L847.0 629.6 L841.0 628.5 L835.0 627.4 L829.0 626.2 L823.0 625.1 L817.0 624.0 L811.0 622.9 L805.0 621.8 L799.0 620.7 L793.0 619.6 L787.0 618.5 L781.0 617.4 L775.0 616.3 L769.0 615.2 L763.0 614.1 L757.0 612.9 L751.0 611.8 L745.0 610.7 L739.0 609.6 L733.0 608.5 L727.0 607.4 L721.0 606.3 L715.0 605.2 L709.0 604.1 L703.0 603.0 L697.0 602.1 L691.0 601.3 L685.0 600.4 L679.0 599.5 L673.0 598.4 L667.0 597.2 L661.0 596.1 L655.0 594.9 L649.0 593.8 L643.0 592.6 L637.0 591.1 L631.0 589.3 L625.0 587.5 L619.0 585.7 L613.0 583.9 L607.0 582.0 L601.0 580.2 L595.0 578.1 L589.0 575.9 L583.0 573.7 L577.0 571.5 L571.0 569.3z" fill="#8a0000"/><path d="M571.0 569.0 L577.0 571.1 L583.0 573.3 L589.0 575.4 L595.0 577.6 L601.0 579.6 L607.0 581.4 L613.0 583.2 L619.0 584.9 L625.0 586.7 L631.0 588.5 L637.0 590.2 L643.0 591.7 L649.0 592.8 L655.0 593.9 L661.0 595.0 L667.0 596.2 L673.0 597.3 L679.0 598.4 L685.0 599.2 L691.0 600.1 L697.0 600.9 L703.0 601.8 L709.0 602.8 L715.0 603.9 L721.0 605.0 L727.0 606.1 L733.0 607.2 L739.0 608.3 L745.0 609.4 L751.0 610.5 L757.0 611.6 L763.0 612.7 L769.0 613.8 L775.0 615.0 L781.0 616.1 L787.0 617.2 L793.0 618.3 L799.0 619.4 L805.0 620.5 L811.0 621.6 L817.0 622.7 L823.0 623.8 L829.0 624.9 L835.0 626.0 L841.0 627.1 L847.0 628.2 L853.0 629.3 L859.0 630.4 L865.0 631.5 L871.0 632.6 L877.0 633.7 L883.0 634.8 L889.0 635.9 L895.0 637.0 L901.0 638.1 L907.0 639.2 L913.0 640.3 L919.0 641.4 L925.0 642.5 L931.0 643.6 L937.0 644.7 L943.0 645.8 L949.0 646.9 L955.0 648.0 L961.0 649.1 L967.0 650.2 L973.0 651.3 L979.0 652.6 L985.0 654.0 L991.0 655.3 L997.0 656.7 L1003.0 658.1 L1009.0 659.4 L1015.0 660.8 L1021.0 662.2 L1027.0 663.6 L1033.0 664.9 L1039.0 666.3 L1045.0 667.7 L1051.0 669.1 L1057.0 670.4 L1063.0 671.8 L1069.0 673.2 L1075.0 674.6 L1081.0 675.9 L1087.0 677.3 L1093.0 678.7 L1099.0 680.0 L1105.0 681.4 L1111.0 682.8 L1117.0 684.2 L1123.0 685.5 L1129.0 686.9 L1135.0 688.3 L1141.0 689.7 L1147.0 691.0 L1153.0 692.4 L1159.0 693.8 L1165.0 695.2 L1171.0 696.5 L1177.0 697.9 L1183.0 699.3 L1189.0 700.6 L1195.0 702.0 L1201.0 703.4 L1207.0 704.8 L1213.0 706.1 L1219.0 707.5 L1225.0 708.9 L1231.0 710.3 L1237.0 711.6 L1243.0 713.0 L1249.0 714.4 L1255.0 715.8 L1261.0 717.1 L1267.0 718.5 L1273.0 719.9 L1279.0 721.2 L1285.0 722.6 L1291.0 724.0 L1297.0 725.4 L1303.0 726.7 L1309.0 728.1 L1315.0 729.5 L1321.0 730.9 L1327.0 732.2 L1333.0 733.6 L1339.0 735.0 L1345.0 736.4 L1351.0 737.7 L1357.0 739.1 L1363.0 740.5 L1369.0 741.8 L1375.0 743.2 L1381.0 744.6 L1387.0 746.0 L1393.0 747.3 L1399.0 748.7 L1405.0 750.1 L1411.0 751.5 L1413.0 752.0 L1413.0 752.3 L1411.0 751.8 L1405.0 750.5 L1399.0 749.1 L1393.0 747.8 L1387.0 746.5 L1381.0 745.2 L1375.0 743.8 L1369.0 742.5 L1363.0 741.2 L1357.0 739.8 L1351.0 738.5 L1345.0 737.2 L1339.0 735.9 L1333.0 734.5 L1327.0 733.2 L1321.0 731.9 L1315.0 730.5 L1309.0 729.2 L1303.0 727.9 L1297.0 726.6 L1291.0 725.2 L1285.0 723.9 L1279.0 722.6 L1273.0 721.3 L1267.0 719.9 L1261.0 718.6 L1255.0 717.3 L1249.0 715.9 L1243.0 714.6 L1237.0 713.3 L1231.0 712.0 L1225.0 710.6 L1219.0 709.3 L1213.0 708.0 L1207.0 706.6 L1201.0 705.3 L1195.0 704.0 L1189.0 702.7 L1183.0 701.3 L1177.0 700.0 L1171.0 698.7 L1165.0 697.4 L1159.0 696.0 L1153.0 694.7 L1147.0 693.4 L1141.0 692.0 L1135.0 690.7 L1129.0 689.4 L1123.0 688.1 L1117.0 686.7 L1111.0 685.4 L1105.0 684.1 L1099.0 682.7 L1093.0 681.4 L1087.0 680.1 L1081.0 678.8 L1075.0 677.4 L1069.0 676.1 L1063.0 674.8 L1057.0 673.5 L1051.0 672.1 L1045.0 670.8 L1039.0 669.5 L1033.0 668.1 L1027.0 666.8 L1021.0 665.5 L1015.0 664.2 L1009.0 662.8 L1003.0 661.5 L997.0 660.2 L991.0 658.9 L985.0 657.5 L979.0 656.2 L973.0 655.0 L967.0 653.9 L961.0 652.7 L955.0 651.6 L949.0 650.5 L943.0 649.4 L937.0 648.3 L931.0 647.2 L925.0 646.0 L919.0 644.9 L913.0 643.8 L907.0 642.7 L901.0 641.6 L895.0 640.4 L889.0 639.3 L883.0 638.2 L877.0 637.1 L871.0 636.0 L865.0 634.9 L859.0 633.7 L853.0 632.6 L847.0 631.5 L841.0 630.4 L835.0 629.3 L829.0 628.2 L823.0 627.0 L817.0 625.9 L811.0 624.8 L805.0 623.7 L799.0 622.6 L793.0 621.4 L787.0 620.3 L781.0 619.2 L775.0 618.1 L769.0 617.0 L763.0 615.9 L757.0 614.7 L751.0 613.6 L745.0 612.5 L739.0 611.4 L733.0 610.3 L727.0 609.2 L721.0 608.0 L715.0 606.9 L709.0 605.8 L703.0 604.7 L697.0 603.8 L691.0 602.9 L685.0 602.0 L679.0 601.1 L673.0 599.8 L667.0 598.6 L661.0 597.4 L655.0 596.2 L649.0 595.0 L643.0 593.8 L637.0 592.2 L631.0 590.3 L625.0 588.4 L619.0 586.5 L613.0 584.6 L607.0 582.7 L601.0 580.8 L595.0 578.5 L589.0 576.2 L583.0 573.9 L577.0 571.6 L571.0 569.3z" fill="#820000"/><path d="M571.0 569.0 L577.0 571.2 L583.0 573.5 L589.0 575.7 L595.0 578.0 L601.0 580.2 L607.0 582.0 L613.0 583.9 L619.0 585.7 L625.0 587.6 L631.0 589.5 L637.0 591.3 L643.0 592.8 L649.0 594.0 L655.0 595.2 L661.0 596.4 L667.0 597.5 L673.0 598.7 L679.0 599.9 L685.0 600.8 L691.0 601.7 L697.0 602.6 L703.0 603.5 L709.0 604.5 L715.0 605.7 L721.0 606.8 L727.0 607.9 L733.0 609.0 L739.0 610.1 L745.0 611.2 L751.0 612.3 L757.0 613.4 L763.0 614.5 L769.0 615.7 L775.0 616.8 L781.0 617.9 L787.0 619.0 L793.0 620.1 L799.0 621.2 L805.0 622.3 L811.0 623.4 L817.0 624.6 L823.0 625.7 L829.0 626.8 L835.0 627.9 L841.0 629.0 L847.0 630.1 L853.0 631.2 L859.0 632.3 L865.0 633.5 L871.0 634.6 L877.0 635.7 L883.0 636.8 L889.0 637.9 L895.0 639.0 L901.0 640.1 L907.0 641.2 L913.0 642.4 L919.0 643.5 L925.0 644.6 L931.0 645.7 L937.0 646.8 L943.0 647.9 L949.0 649.0 L955.0 650.1 L961.0 651.3 L967.0 652.4 L973.0 653.5 L979.0 654.7 L985.0 656.1 L991.0 657.4 L997.0 658.7 L1003.0 660.1 L1009.0 661.4 L1015.0 662.8 L1021.0 664.1 L1027.0 665.5 L1033.0 666.8 L1039.0 668.1 L1045.0 669.5 L1051.0 670.8 L1057.0 672.2 L1063.0 673.5 L1069.0 674.9 L1075.0 676.2 L1081.0 677.6 L1087.0 678.9 L1093.0 680.2 L1099.0 681.6 L1105.0 682.9 L1111.0 684.3 L1117.0 685.6 L1123.0 687.0 L1129.0 688.3 L1135.0 689.7 L1141.0 691.0 L1147.0 692.3 L1153.0 693.7 L1159.0 695.0 L1165.0 696.4 L1171.0 697.7 L1177.0 699.1 L1183.0 700.4 L1189.0 701.7 L1195.0 703.1 L1201.0 704.4 L1207.0 705.8 L1213.0 707.1 L1219.0 708.5 L1225.0 709.8 L1231.0 711.2 L1237.0 712.5 L1243.0 713.8 L1249.0 715.2 L1255.0 716.5 L1261.0 717.9 L1267.0 719.2 L1273.0 720.6 L1279.0 721.9 L1285.0 723.3 L1291.0 724.6 L1297.0 725.9 L1303.0 727.3 L1309.0 728.6 L1315.0 730.0 L1321.0 731.3 L1327.0 732.7 L1333.0 734.0 L1339.0 735.3 L1345.0 736.7 L1351.0 738.0 L1357.0 739.4 L1363.0 740.7 L1369.0 742.1 L1375.0 743.4 L1381.0 744.8 L1387.0 746.1 L1393.0 747.4 L1399.0 748.8 L1405.0 750.1 L1411.0 751.5 L1413.0 752.0 L1413.0 752.3 L1411.0 751.8 L1405.0 750.5 L1399.0 749.2 L1393.0 747.9 L1387.0 746.6 L1381.0 745.3 L1375.0 744.0 L1369.0 742.7 L1363.0 741.4 L1357.0 740.1 L1351.0 738.8 L1345.0 737.5 L1339.0 736.2 L1333.0 734.9 L1327.0 733.6 L1321.0 732.3 L1315.0 731.0 L1309.0 729.7 L1303.0 728.4 L1297.0 727.1 L1291.0 725.8 L1285.0 724.5 L1279.0 723.2 L1273.0 721.9 L1267.0 720.6 L1261.0 719.3 L1255.0 718.1 L1249.0 716.8 L1243.0 715.5 L1237.0 714.2 L1231.0 712.9 L1225.0 711.6 L1219.0 710.3 L1213.0 709.0 L1207.0 707.7 L1201.0 706.4 L1195.0 705.1 L1189.0 703.8 L1183.0 702.5 L1177.0 701.2 L1171.0 699.9 L1165.0 698.6 L1159.0 697.3 L1153.0 696.0 L1147.0 694.7 L1141.0 693.4 L1135.0 692.1 L1129.0 690.8 L1123.0 689.5 L1117.0 688.2 L1111.0 686.9 L1105.0 685.6 L1099.0 684.3 L1093.0 683.0 L1087.0 681.7 L1081.0 680.4 L1075.0 679.1 L1069.0 677.8 L1063.0 676.5 L1057.0 675.2 L1051.0 673.9 L1045.0 672.6 L1039.0 671.3 L1033.0 670.0 L1027.0 668.7 L1021.0 667.4 L1015.0 666.1 L1009.0 664.8 L1003.0 663.5 L997.0 662.2 L991.0 660.9 L985.0 659.6 L979.0 658.3 L973.0 657.1 L967.0 656.0 L961.0 654.9 L955.0 653.7 L949.0 652.6 L943.0 651.5 L937.0 650.3 L931.0 649.2 L925.0 648.1 L919.0 647.0 L913.0 645.8 L907.0 644.7 L901.0 643.6 L895.0 642.5 L889.0 641.3 L883.0 640.2 L877.0 639.1 L871.0 637.9 L865.0 636.8 L859.0 635.7 L853.0 634.6 L847.0 633.4 L841.0 632.3 L835.0 631.2 L829.0 630.1 L823.0 628.9 L817.0 627.8 L811.0 626.7 L805.0 625.6 L799.0 624.4 L793.0 623.3 L787.0 622.2 L781.0 621.0 L775.0 619.9 L769.0 618.8 L763.0 617.7 L757.0 616.5 L751.0 615.4 L745.0 614.3 L739.0 613.2 L733.0 612.0 L727.0 610.9 L721.0 609.8 L715.0 608.6 L709.0 607.5 L703.0 606.4 L697.0 605.5 L691.0 604.5 L685.0 603.5 L679.0 602.6 L673.0 601.3 L667.0 600.0 L661.0 598.8 L655.0 597.5 L649.0 596.2 L643.0 594.9 L637.0 593.3 L631.0 591.3 L625.0 589.3 L619.0 587.3 L613.0 585.3 L607.0 583.3 L601.0 581.3 L595.0 579.0 L589.0 576.5 L583.0 574.1 L577.0 571.7 L571.0 569.3z" fill="#7b0000"/><path d="M571.0 569.0 L577.0 571.4 L583.0 573.7 L589.0 576.1 L595.0 578.4 L601.0 580.7 L607.0 582.7 L613.0 584.6 L619.0 586.5 L625.0 588.5 L631.0 590.4 L637.0 592.4 L643.0 594.0 L649.0 595.2 L655.0 596.5 L661.0 597.7 L667.0 598.9 L673.0 600.2 L679.0 601.4 L685.0 602.4 L691.0 603.3 L697.0 604.2 L703.0 605.2 L709.0 606.3 L715.0 607.4 L721.0 608.5 L727.0 609.6 L733.0 610.7 L739.0 611.9 L745.0 613.0 L751.0 614.1 L757.0 615.2 L763.0 616.4 L769.0 617.5 L775.0 618.6 L781.0 619.7 L787.0 620.8 L793.0 622.0 L799.0 623.1 L805.0 624.2 L811.0 625.3 L817.0 626.4 L823.0 627.6 L829.0 628.7 L835.0 629.8 L841.0 630.9 L847.0 632.1 L853.0 633.2 L859.0 634.3 L865.0 635.4 L871.0 636.5 L877.0 637.7 L883.0 638.8 L889.0 639.9 L895.0 641.0 L901.0 642.2 L907.0 643.3 L913.0 644.4 L919.0 645.5 L925.0 646.6 L931.0 647.8 L937.0 648.9 L943.0 650.0 L949.0 651.1 L955.0 652.2 L961.0 653.4 L967.0 654.5 L973.0 655.6 L979.0 656.8 L985.0 658.1 L991.0 659.5 L997.0 660.8 L1003.0 662.1 L1009.0 663.4 L1015.0 664.7 L1021.0 666.0 L1027.0 667.3 L1033.0 668.7 L1039.0 670.0 L1045.0 671.3 L1051.0 672.6 L1057.0 673.9 L1063.0 675.2 L1069.0 676.6 L1075.0 677.9 L1081.0 679.2 L1087.0 680.5 L1093.0 681.8 L1099.0 683.1 L1105.0 684.4 L1111.0 685.8 L1117.0 687.1 L1123.0 688.4 L1129.0 689.7 L1135.0 691.0 L1141.0 692.3 L1147.0 693.6 L1153.0 695.0 L1159.0 696.3 L1165.0 697.6 L1171.0 698.9 L1177.0 700.2 L1183.0 701.5 L1189.0 702.9 L1195.0 704.2 L1201.0 705.5 L1207.0 706.8 L1213.0 708.1 L1219.0 709.4 L1225.0 710.7 L1231.0 712.1 L1237.0 713.4 L1243.0 714.7 L1249.0 716.0 L1255.0 717.3 L1261.0 718.6 L1267.0 719.9 L1273.0 721.3 L1279.0 722.6 L1285.0 723.9 L1291.0 725.2 L1297.0 726.5 L1303.0 727.8 L1309.0 729.1 L1315.0 730.5 L1321.0 731.8 L1327.0 733.1 L1333.0 734.4 L1339.0 735.7 L1345.0 737.0 L1351.0 738.4 L1357.0 739.7 L1363.0 741.0 L1369.0 742.3 L1375.0 743.6 L1381.0 744.9 L1387.0 746.2 L1393.0 747.6 L1399.0 748.9 L1405.0 750.2 L1411.0 751.5 L1413.0 752.0 L1413.0 752.3 L1411.0 751.9 L1405.0 750.6 L1399.0 749.3 L1393.0 748.0 L1387.0 746.8 L1381.0 745.5 L1375.0 744.2 L1369.0 742.9 L1363.0 741.7 L1357.0 740.4 L1351.0 739.1 L1345.0 737.9 L1339.0 736.6 L1333.0 735.3 L1327.0 734.1 L1321.0 732.8 L1315.0 731.5 L1309.0 730.3 L1303.0 729.0 L1297.0 727.7 L1291.0 726.4 L1285.0 725.2 L1279.0 723.9 L1273.0 722.6 L1267.0 721.4 L1261.0 720.1 L1255.0 718.8 L1249.0 717.6 L1243.0 716.3 L1237.0 715.0 L1231.0 713.8 L1225.0 712.5 L1219.0 711.2 L1213.0 709.9 L1207.0 708.7 L1201.0 707.4 L1195.0 706.1 L1189.0 704.9 L1183.0 703.6 L1177.0 702.3 L1171.0 701.1 L1165.0 699.8 L1159.0 698.5 L1153.0 697.3 L1147.0 696.0 L1141.0 694.7 L1135.0 693.4 L1129.0 692.2 L1123.0 690.9 L1117.0 689.6 L1111.0 688.4 L1105.0 687.1 L1099.0 685.8 L1093.0 684.6 L1087.0 683.3 L1081.0 682.0 L1075.0 680.8 L1069.0 679.5 L1063.0 678.2 L1057.0 676.9 L1051.0 675.7 L1045.0 674.4 L1039.0 673.1 L1033.0 671.9 L1027.0 670.6 L1021.0 669.3 L1015.0 668.1 L1009.0 666.8 L1003.0 665.5 L997.0 664.3 L991.0 663.0 L985.0 661.7 L979.0 660.4 L973.0 659.2 L967.0 658.1 L961.0 657.0 L955.0 655.8 L949.0 654.7 L943.0 653.6 L937.0 652.4 L931.0 651.3 L925.0 650.1 L919.0 649.0 L913.0 647.9 L907.0 646.7 L901.0 645.6 L895.0 644.5 L889.0 643.3 L883.0 642.2 L877.0 641.1 L871.0 639.9 L865.0 638.8 L859.0 637.6 L853.0 636.5 L847.0 635.4 L841.0 634.2 L835.0 633.1 L829.0 632.0 L823.0 630.8 L817.0 629.7 L811.0 628.6 L805.0 627.4 L799.0 626.3 L793.0 625.1 L787.0 624.0 L781.0 622.9 L775.0 621.7 L769.0 620.6 L763.0 619.5 L757.0 618.3 L751.0 617.2 L745.0 616.1 L739.0 614.9 L733.0 613.8 L727.0 612.6 L721.0 611.5 L715.0 610.4 L709.0 609.2 L703.0 608.1 L697.0 607.1 L691.0 606.1 L685.0 605.1 L679.0 604.1 L673.0 602.8 L667.0 601.4 L661.0 600.1 L655.0 598.8 L649.0 597.4 L643.0 596.1 L637.0 594.4 L631.0 592.3 L625.0 590.2 L619.0 588.1 L613.0 586.0 L607.0 583.9 L601.0 581.8 L595.0 579.4 L589.0 576.9 L583.0 574.3 L577.0 571.8 L571.0 569.3z" fill="#730000"/><path d="M571.0 569.0 L577.0 571.5 L583.0 573.9 L589.0 576.4 L595.0 578.9 L601.0 581.2 L607.0 583.3 L613.0 585.3 L619.0 587.4 L625.0 589.4 L631.0 591.4 L637.0 593.5 L643.0 595.1 L649.0 596.4 L655.0 597.7 L661.0 599.0 L667.0 600.3 L673.0 601.6 L679.0 602.9 L685.0 603.9 L691.0 604.9 L697.0 605.9 L703.0 606.9 L709.0 608.0 L715.0 609.1 L721.0 610.2 L727.0 611.4 L733.0 612.5 L739.0 613.6 L745.0 614.8 L751.0 615.9 L757.0 617.0 L763.0 618.2 L769.0 619.3 L775.0 620.4 L781.0 621.5 L787.0 622.7 L793.0 623.8 L799.0 624.9 L805.0 626.1 L811.0 627.2 L817.0 628.3 L823.0 629.5 L829.0 630.6 L835.0 631.7 L841.0 632.9 L847.0 634.0 L853.0 635.1 L859.0 636.3 L865.0 637.4 L871.0 638.5 L877.0 639.6 L883.0 640.8 L889.0 641.9 L895.0 643.0 L901.0 644.2 L907.0 645.3 L913.0 646.4 L919.0 647.6 L925.0 648.7 L931.0 649.8 L937.0 651.0 L943.0 652.1 L949.0 653.2 L955.0 654.4 L961.0 655.5 L967.0 656.6 L973.0 657.7 L979.0 659.0 L985.0 660.2 L991.0 661.5 L997.0 662.8 L1003.0 664.1 L1009.0 665.4 L1015.0 666.7 L1021.0 668.0 L1027.0 669.2 L1033.0 670.5 L1039.0 671.8 L1045.0 673.1 L1051.0 674.4 L1057.0 675.7 L1063.0 677.0 L1069.0 678.2 L1075.0 679.5 L1081.0 680.8 L1087.0 682.1 L1093.0 683.4 L1099.0 684.7 L1105.0 686.0 L1111.0 687.2 L1117.0 688.5 L1123.0 689.8 L1129.0 691.1 L1135.0 692.4 L1141.0 693.7 L1147.0 695.0 L1153.0 696.2 L1159.0 697.5 L1165.0 698.8 L1171.0 700.1 L1177.0 701.4 L1183.0 702.7 L1189.0 704.0 L1195.0 705.2 L1201.0 706.5 L1207.0 707.8 L1213.0 709.1 L1219.0 710.4 L1225.0 711.7 L1231.0 713.0 L1237.0 714.2 L1243.0 715.5 L1249.0 716.8 L1255.0 718.1 L1261.0 719.4 L1267.0 720.7 L1273.0 722.0 L1279.0 723.2 L1285.0 724.5 L1291.0 725.8 L1297.0 727.1 L1303.0 728.4 L1309.0 729.7 L1315.0 731.0 L1321.0 732.2 L1327.0 733.5 L1333.0 734.8 L1339.0 736.1 L1345.0 737.4 L1351.0 738.7 L1357.0 740.0 L1363.0 741.2 L1369.0 742.5 L1375.0 743.8 L1381.0 745.1 L1387.0 746.4 L1393.0 747.7 L1399.0 749.0 L1405.0 750.2 L1411.0 751.6 L1413.0 752.0 L1413.0 752.3 L1411.0 751.9 L1405.0 750.6 L1399.0 749.4 L1393.0 748.1 L1387.0 746.9 L1381.0 745.7 L1375.0 744.4 L1369.0 743.2 L1363.0 741.9 L1357.0 740.7 L1351.0 739.5 L1345.0 738.2 L1339.0 737.0 L1333.0 735.7 L1327.0 734.5 L1321.0 733.3 L1315.0 732.0 L1309.0 730.8 L1303.0 729.5 L1297.0 728.3 L1291.0 727.1 L1285.0 725.8 L1279.0 724.6 L1273.0 723.3 L1267.0 722.1 L1261.0 720.9 L1255.0 719.6 L1249.0 718.4 L1243.0 717.1 L1237.0 715.9 L1231.0 714.7 L1225.0 713.4 L1219.0 712.2 L1213.0 710.9 L1207.0 709.7 L1201.0 708.5 L1195.0 707.2 L1189.0 706.0 L1183.0 704.7 L1177.0 703.5 L1171.0 702.3 L1165.0 701.0 L1159.0 699.8 L1153.0 698.5 L1147.0 697.3 L1141.0 696.0 L1135.0 694.8 L1129.0 693.6 L1123.0 692.3 L1117.0 691.1 L1111.0 689.8 L1105.0 688.6 L1099.0 687.4 L1093.0 686.1 L1087.0 684.9 L1081.0 683.6 L1075.0 682.4 L1069.0 681.2 L1063.0 679.9 L1057.0 678.7 L1051.0 677.4 L1045.0 676.2 L1039.0 675.0 L1033.0 673.7 L1027.0 672.5 L1021.0 671.2 L1015.0 670.0 L1009.0 668.8 L1003.0 667.5 L997.0 666.3 L991.0 665.0 L985.0 663.8 L979.0 662.6 L973.0 661.4 L967.0 660.2 L961.0 659.1 L955.0 657.9 L949.0 656.8 L943.0 655.6 L937.0 654.5 L931.0 653.4 L925.0 652.2 L919.0 651.1 L913.0 649.9 L907.0 648.8 L901.0 647.6 L895.0 646.5 L889.0 645.3 L883.0 644.2 L877.0 643.0 L871.0 641.9 L865.0 640.7 L859.0 639.6 L853.0 638.5 L847.0 637.3 L841.0 636.2 L835.0 635.0 L829.0 633.9 L823.0 632.7 L817.0 631.6 L811.0 630.4 L805.0 629.3 L799.0 628.1 L793.0 627.0 L787.0 625.9 L781.0 624.7 L775.0 623.6 L769.0 622.4 L763.0 621.3 L757.0 620.1 L751.0 619.0 L745.0 617.8 L739.0 616.7 L733.0 615.5 L727.0 614.4 L721.0 613.2 L715.0 612.1 L709.0 611.0 L703.0 609.8 L697.0 608.8 L691.0 607.7 L685.0 606.7 L679.0 605.6 L673.0 604.2 L667.0 602.8 L661.0 601.4 L655.0 600.0 L649.0 598.6 L643.0 597.2 L637.0 595.5 L631.0 593.3 L625.0 591.1 L619.0 588.9 L613.0 586.7 L607.0 584.6 L601.0 582.4 L595.0 579.8 L589.0 577.2 L583.0 574.6 L577.0 571.9 L571.0 569.3z" fill="#6b0000"/><path d="M571.0 569.0 L577.0 571.6 L583.0 574.1 L589.0 576.7 L595.0 579.3 L601.0 581.8 L607.0 583.9 L613.0 586.0 L619.0 588.2 L625.0 590.3 L631.0 592.4 L637.0 594.6 L643.0 596.3 L649.0 597.7 L655.0 599.0 L661.0 600.4 L667.0 601.7 L673.0 603.1 L679.0 604.5 L685.0 605.5 L691.0 606.5 L697.0 607.5 L703.0 608.6 L709.0 609.7 L715.0 610.8 L721.0 612.0 L727.0 613.1 L733.0 614.3 L739.0 615.4 L745.0 616.5 L751.0 617.7 L757.0 618.8 L763.0 620.0 L769.0 621.1 L775.0 622.2 L781.0 623.4 L787.0 624.5 L793.0 625.7 L799.0 626.8 L805.0 627.9 L811.0 629.1 L817.0 630.2 L823.0 631.4 L829.0 632.5 L835.0 633.6 L841.0 634.8 L847.0 635.9 L853.0 637.1 L859.0 638.2 L865.0 639.3 L871.0 640.5 L877.0 641.6 L883.0 642.8 L889.0 643.9 L895.0 645.1 L901.0 646.2 L907.0 647.3 L913.0 648.5 L919.0 649.6 L925.0 650.8 L931.0 651.9 L937.0 653.0 L943.0 654.2 L949.0 655.3 L955.0 656.5 L961.0 657.6 L967.0 658.7 L973.0 659.9 L979.0 661.1 L985.0 662.3 L991.0 663.6 L997.0 664.8 L1003.0 666.1 L1009.0 667.4 L1015.0 668.6 L1021.0 669.9 L1027.0 671.1 L1033.0 672.4 L1039.0 673.6 L1045.0 674.9 L1051.0 676.2 L1057.0 677.4 L1063.0 678.7 L1069.0 679.9 L1075.0 681.2 L1081.0 682.4 L1087.0 683.7 L1093.0 685.0 L1099.0 686.2 L1105.0 687.5 L1111.0 688.7 L1117.0 690.0 L1123.0 691.2 L1129.0 692.5 L1135.0 693.7 L1141.0 695.0 L1147.0 696.3 L1153.0 697.5 L1159.0 698.8 L1165.0 700.0 L1171.0 701.3 L1177.0 702.5 L1183.0 703.8 L1189.0 705.1 L1195.0 706.3 L1201.0 707.6 L1207.0 708.8 L1213.0 710.1 L1219.0 711.3 L1225.0 712.6 L1231.0 713.8 L1237.0 715.1 L1243.0 716.4 L1249.0 717.6 L1255.0 718.9 L1261.0 720.1 L1267.0 721.4 L1273.0 722.6 L1279.0 723.9 L1285.0 725.2 L1291.0 726.4 L1297.0 727.7 L1303.0 728.9 L1309.0 730.2 L1315.0 731.4 L1321.0 732.7 L1327.0 734.0 L1333.0 735.2 L1339.0 736.5 L1345.0 737.7 L1351.0 739.0 L1357.0 740.2 L1363.0 741.5 L1369.0 742.7 L1375.0 744.0 L1381.0 745.3 L1387.0 746.5 L1393.0 747.8 L1399.0 749.0 L1405.0 750.3 L1411.0 751.6 L1413.0 752.0 L1413.0 752.3 L1411.0 751.9 L1405.0 750.7 L1399.0 749.5 L1393.0 748.2 L1387.0 747.0 L1381.0 745.8 L1375.0 744.6 L1369.0 743.4 L1363.0 742.2 L1357.0 741.0 L1351.0 739.8 L1345.0 738.6 L1339.0 737.3 L1333.0 736.1 L1327.0 734.9 L1321.0 733.7 L1315.0 732.5 L1309.0 731.3 L1303.0 730.1 L1297.0 728.9 L1291.0 727.7 L1285.0 726.4 L1279.0 725.2 L1273.0 724.0 L1267.0 722.8 L1261.0 721.6 L1255.0 720.4 L1249.0 719.2 L1243.0 718.0 L1237.0 716.8 L1231.0 715.5 L1225.0 714.3 L1219.0 713.1 L1213.0 711.9 L1207.0 710.7 L1201.0 709.5 L1195.0 708.3 L1189.0 707.1 L1183.0 705.9 L1177.0 704.7 L1171.0 703.4 L1165.0 702.2 L1159.0 701.0 L1153.0 699.8 L1147.0 698.6 L1141.0 697.4 L1135.0 696.2 L1129.0 695.0 L1123.0 693.8 L1117.0 692.5 L1111.0 691.3 L1105.0 690.1 L1099.0 688.9 L1093.0 687.7 L1087.0 686.5 L1081.0 685.3 L1075.0 684.1 L1069.0 682.9 L1063.0 681.6 L1057.0 680.4 L1051.0 679.2 L1045.0 678.0 L1039.0 676.8 L1033.0 675.6 L1027.0 674.4 L1021.0 673.2 L1015.0 672.0 L1009.0 670.7 L1003.0 669.5 L997.0 668.3 L991.0 667.1 L985.0 665.9 L979.0 664.7 L973.0 663.5 L967.0 662.4 L961.0 661.2 L955.0 660.0 L949.0 658.9 L943.0 657.7 L937.0 656.6 L931.0 655.4 L925.0 654.3 L919.0 653.1 L913.0 652.0 L907.0 650.8 L901.0 649.6 L895.0 648.5 L889.0 647.3 L883.0 646.2 L877.0 645.0 L871.0 643.9 L865.0 642.7 L859.0 641.6 L853.0 640.4 L847.0 639.2 L841.0 638.1 L835.0 636.9 L829.0 635.8 L823.0 634.6 L817.0 633.5 L811.0 632.3 L805.0 631.2 L799.0 630.0 L793.0 628.8 L787.0 627.7 L781.0 626.5 L775.0 625.4 L769.0 624.2 L763.0 623.1 L757.0 621.9 L751.0 620.8 L745.0 619.6 L739.0 618.4 L733.0 617.3 L727.0 616.1 L721.0 615.0 L715.0 613.8 L709.0 612.7 L703.0 611.5 L697.0 610.4 L691.0 609.3 L685.0 608.2 L679.0 607.1 L673.0 605.7 L667.0 604.2 L661.0 602.8 L655.0 601.3 L649.0 599.9 L643.0 598.4 L637.0 596.5 L631.0 594.3 L625.0 592.0 L619.0 589.7 L613.0 587.5 L607.0 585.2 L601.0 582.9 L595.0 580.3 L589.0 577.5 L583.0 574.8 L577.0 572.0 L571.0 569.3z" fill="#630000"/><path d="M571.0 569.0 L577.0 571.7 L583.0 574.4 L589.0 577.0 L595.0 579.7 L601.0 582.3 L607.0 584.5 L613.0 586.8 L619.0 589.0 L625.0 591.2 L631.0 593.4 L637.0 595.6 L643.0 597.5 L649.0 598.9 L655.0 600.3 L661.0 601.7 L667.0 603.1 L673.0 604.5 L679.0 606.0 L685.0 607.0 L691.0 608.1 L697.0 609.2 L703.0 610.3 L709.0 611.4 L715.0 612.6 L721.0 613.7 L727.0 614.9 L733.0 616.0 L739.0 617.2 L745.0 618.3 L751.0 619.5 L757.0 620.6 L763.0 621.8 L769.0 622.9 L775.0 624.1 L781.0 625.2 L787.0 626.4 L793.0 627.5 L799.0 628.7 L805.0 629.8 L811.0 631.0 L817.0 632.1 L823.0 633.3 L829.0 634.4 L835.0 635.6 L841.0 636.7 L847.0 637.9 L853.0 639.0 L859.0 640.2 L865.0 641.3 L871.0 642.5 L877.0 643.6 L883.0 644.8 L889.0 645.9 L895.0 647.1 L901.0 648.2 L907.0 649.4 L913.0 650.5 L919.0 651.7 L925.0 652.8 L931.0 654.0 L937.0 655.1 L943.0 656.3 L949.0 657.4 L955.0 658.6 L961.0 659.7 L967.0 660.9 L973.0 662.0 L979.0 663.2 L985.0 664.4 L991.0 665.7 L997.0 666.9 L1003.0 668.1 L1009.0 669.3 L1015.0 670.6 L1021.0 671.8 L1027.0 673.0 L1033.0 674.2 L1039.0 675.5 L1045.0 676.7 L1051.0 677.9 L1057.0 679.2 L1063.0 680.4 L1069.0 681.6 L1075.0 682.8 L1081.0 684.1 L1087.0 685.3 L1093.0 686.5 L1099.0 687.7 L1105.0 689.0 L1111.0 690.2 L1117.0 691.4 L1123.0 692.7 L1129.0 693.9 L1135.0 695.1 L1141.0 696.3 L1147.0 697.6 L1153.0 698.8 L1159.0 700.0 L1165.0 701.2 L1171.0 702.5 L1177.0 703.7 L1183.0 704.9 L1189.0 706.2 L1195.0 707.4 L1201.0 708.6 L1207.0 709.8 L1213.0 711.1 L1219.0 712.3 L1225.0 713.5 L1231.0 714.7 L1237.0 716.0 L1243.0 717.2 L1249.0 718.4 L1255.0 719.7 L1261.0 720.9 L1267.0 722.1 L1273.0 723.3 L1279.0 724.6 L1285.0 725.8 L1291.0 727.0 L1297.0 728.2 L1303.0 729.5 L1309.0 730.7 L1315.0 731.9 L1321.0 733.2 L1327.0 734.4 L1333.0 735.6 L1339.0 736.8 L1345.0 738.1 L1351.0 739.3 L1357.0 740.5 L1363.0 741.7 L1369.0 743.0 L1375.0 744.2 L1381.0 745.4 L1387.0 746.7 L1393.0 747.9 L1399.0 749.1 L1405.0 750.3 L1411.0 751.6 L1413.0 752.0 L1413.0 752.3 L1411.0 751.9 L1405.0 750.7 L1399.0 749.5 L1393.0 748.4 L1387.0 747.2 L1381.0 746.0 L1375.0 744.8 L1369.0 743.6 L1363.0 742.4 L1357.0 741.3 L1351.0 740.1 L1345.0 738.9 L1339.0 737.7 L1333.0 736.5 L1327.0 735.4 L1321.0 734.2 L1315.0 733.0 L1309.0 731.8 L1303.0 730.6 L1297.0 729.4 L1291.0 728.3 L1285.0 727.1 L1279.0 725.9 L1273.0 724.7 L1267.0 723.5 L1261.0 722.4 L1255.0 721.2 L1249.0 720.0 L1243.0 718.8 L1237.0 717.6 L1231.0 716.4 L1225.0 715.3 L1219.0 714.1 L1213.0 712.9 L1207.0 711.7 L1201.0 710.5 L1195.0 709.4 L1189.0 708.2 L1183.0 707.0 L1177.0 705.8 L1171.0 704.6 L1165.0 703.4 L1159.0 702.3 L1153.0 701.1 L1147.0 699.9 L1141.0 698.7 L1135.0 697.5 L1129.0 696.4 L1123.0 695.2 L1117.0 694.0 L1111.0 692.8 L1105.0 691.6 L1099.0 690.4 L1093.0 689.3 L1087.0 688.1 L1081.0 686.9 L1075.0 685.7 L1069.0 684.5 L1063.0 683.4 L1057.0 682.2 L1051.0 681.0 L1045.0 679.8 L1039.0 678.6 L1033.0 677.4 L1027.0 676.3 L1021.0 675.1 L1015.0 673.9 L1009.0 672.7 L1003.0 671.5 L997.0 670.4 L991.0 669.2 L985.0 668.0 L979.0 666.8 L973.0 665.6 L967.0 664.5 L961.0 663.3 L955.0 662.1 L949.0 661.0 L943.0 659.8 L937.0 658.7 L931.0 657.5 L925.0 656.3 L919.0 655.2 L913.0 654.0 L907.0 652.8 L901.0 651.7 L895.0 650.5 L889.0 649.3 L883.0 648.2 L877.0 647.0 L871.0 645.8 L865.0 644.7 L859.0 643.5 L853.0 642.3 L847.0 641.2 L841.0 640.0 L835.0 638.8 L829.0 637.7 L823.0 636.5 L817.0 635.4 L811.0 634.2 L805.0 633.0 L799.0 631.9 L793.0 630.7 L787.0 629.5 L781.0 628.4 L775.0 627.2 L769.0 626.0 L763.0 624.9 L757.0 623.7 L751.0 622.5 L745.0 621.4 L739.0 620.2 L733.0 619.0 L727.0 617.9 L721.0 616.7 L715.0 615.6 L709.0 614.4 L703.0 613.2 L697.0 612.1 L691.0 610.9 L685.0 609.8 L679.0 608.6 L673.0 607.1 L667.0 605.6 L661.0 604.1 L655.0 602.6 L649.0 601.1 L643.0 599.6 L637.0 597.6 L631.0 595.3 L625.0 592.9 L619.0 590.5 L613.0 588.2 L607.0 585.8 L601.0 583.5 L595.0 580.7 L589.0 577.8 L583.0 575.0 L577.0 572.1 L571.0 569.3z" fill="#5c0000"/><path d="M571.0 569.0 L577.0 571.8 L583.0 574.6 L589.0 577.4 L595.0 580.2 L601.0 582.9 L607.0 585.2 L613.0 587.5 L619.0 589.8 L625.0 592.1 L631.0 594.4 L637.0 596.7 L643.0 598.6 L649.0 600.1 L655.0 601.6 L661.0 603.0 L667.0 604.5 L673.0 606.0 L679.0 607.5 L685.0 608.6 L691.0 609.7 L697.0 610.9 L703.0 612.0 L709.0 613.1 L715.0 614.3 L721.0 615.4 L727.0 616.6 L733.0 617.8 L739.0 618.9 L745.0 620.1 L751.0 621.2 L757.0 622.4 L763.0 623.6 L769.0 624.7 L775.0 625.9 L781.0 627.0 L787.0 628.2 L793.0 629.4 L799.0 630.5 L805.0 631.7 L811.0 632.8 L817.0 634.0 L823.0 635.2 L829.0 636.3 L835.0 637.5 L841.0 638.6 L847.0 639.8 L853.0 641.0 L859.0 642.1 L865.0 643.3 L871.0 644.4 L877.0 645.6 L883.0 646.8 L889.0 647.9 L895.0 649.1 L901.0 650.2 L907.0 651.4 L913.0 652.5 L919.0 653.7 L925.0 654.9 L931.0 656.0 L937.0 657.2 L943.0 658.3 L949.0 659.5 L955.0 660.7 L961.0 661.8 L967.0 663.0 L973.0 664.1 L979.0 665.3 L985.0 666.5 L991.0 667.7 L997.0 668.9 L1003.0 670.1 L1009.0 671.3 L1015.0 672.5 L1021.0 673.7 L1027.0 674.9 L1033.0 676.1 L1039.0 677.3 L1045.0 678.5 L1051.0 679.7 L1057.0 680.9 L1063.0 682.1 L1069.0 683.3 L1075.0 684.5 L1081.0 685.7 L1087.0 686.9 L1093.0 688.1 L1099.0 689.3 L1105.0 690.5 L1111.0 691.7 L1117.0 692.9 L1123.0 694.1 L1129.0 695.3 L1135.0 696.5 L1141.0 697.7 L1147.0 698.9 L1153.0 700.1 L1159.0 701.3 L1165.0 702.5 L1171.0 703.7 L1177.0 704.9 L1183.0 706.1 L1189.0 707.3 L1195.0 708.5 L1201.0 709.7 L1207.0 710.9 L1213.0 712.1 L1219.0 713.2 L1225.0 714.4 L1231.0 715.6 L1237.0 716.8 L1243.0 718.0 L1249.0 719.2 L1255.0 720.4 L1261.0 721.6 L1267.0 722.8 L1273.0 724.0 L1279.0 725.2 L1285.0 726.4 L1291.0 727.6 L1297.0 728.8 L1303.0 730.0 L1309.0 731.2 L1315.0 732.4 L1321.0 733.6 L1327.0 734.8 L1333.0 736.0 L1339.0 737.2 L1345.0 738.4 L1351.0 739.6 L1357.0 740.8 L1363.0 742.0 L1369.0 743.2 L1375.0 744.4 L1381.0 745.6 L1387.0 746.8 L1393.0 748.0 L1399.0 749.2 L1405.0 750.4 L1411.0 751.6 L1413.0 752.0 L1413.0 752.3 L1411.0 751.9 L1405.0 750.7 L1399.0 749.6 L1393.0 748.4 L1387.0 747.2 L1381.0 746.1 L1375.0 744.9 L1369.0 743.7 L1363.0 742.6 L1357.0 741.4 L1351.0 740.2 L1345.0 739.1 L1339.0 737.9 L1333.0 736.7 L1327.0 735.5 L1321.0 734.4 L1315.0 733.2 L1309.0 732.0 L1303.0 730.9 L1297.0 729.7 L1291.0 728.5 L1285.0 727.4 L1279.0 726.2 L1273.0 725.0 L1267.0 723.9 L1261.0 722.7 L1255.0 721.5 L1249.0 720.3 L1243.0 719.2 L1237.0 718.0 L1231.0 716.8 L1225.0 715.7 L1219.0 714.5 L1213.0 713.3 L1207.0 712.2 L1201.0 711.0 L1195.0 709.8 L1189.0 708.7 L1183.0 707.5 L1177.0 706.3 L1171.0 705.2 L1165.0 704.0 L1159.0 702.8 L1153.0 701.6 L1147.0 700.5 L1141.0 699.3 L1135.0 698.1 L1129.0 697.0 L1123.0 695.8 L1117.0 694.6 L1111.0 693.5 L1105.0 692.3 L1099.0 691.1 L1093.0 690.0 L1087.0 688.8 L1081.0 687.6 L1075.0 686.4 L1069.0 685.3 L1063.0 684.1 L1057.0 682.9 L1051.0 681.8 L1045.0 680.6 L1039.0 679.4 L1033.0 678.3 L1027.0 677.1 L1021.0 675.9 L1015.0 674.8 L1009.0 673.6 L1003.0 672.4 L997.0 671.3 L991.0 670.1 L985.0 668.9 L979.0 667.7 L973.0 666.6 L967.0 665.4 L961.0 664.2 L955.0 663.1 L949.0 661.9 L943.0 660.7 L937.0 659.6 L931.0 658.4 L925.0 657.2 L919.0 656.1 L913.0 654.9 L907.0 653.7 L901.0 652.6 L895.0 651.4 L889.0 650.2 L883.0 649.0 L877.0 647.9 L871.0 646.7 L865.0 645.5 L859.0 644.4 L853.0 643.2 L847.0 642.0 L841.0 640.9 L835.0 639.7 L829.0 638.5 L823.0 637.4 L817.0 636.2 L811.0 635.0 L805.0 633.8 L799.0 632.7 L793.0 631.5 L787.0 630.3 L781.0 629.2 L775.0 628.0 L769.0 626.8 L763.0 625.7 L757.0 624.5 L751.0 623.3 L745.0 622.2 L739.0 621.0 L733.0 619.8 L727.0 618.7 L721.0 617.5 L715.0 616.3 L709.0 615.1 L703.0 614.0 L697.0 612.8 L691.0 611.6 L685.0 610.5 L679.0 609.3 L673.0 607.8 L667.0 606.2 L661.0 604.7 L655.0 603.1 L649.0 601.6 L643.0 600.1 L637.0 598.1 L631.0 595.7 L625.0 593.3 L619.0 590.9 L613.0 588.5 L607.0 586.1 L601.0 583.7 L595.0 580.9 L589.0 578.0 L583.0 575.1 L577.0 572.2 L571.0 569.3z" fill="#540000"/></g><path d="M1459 640 L1459 660 L1438 720 L1420 752 L1413 752 L1432 712z" fill="#a00000"/><path d="M675 468 L705 472 L705 503 L675 497z" fill="#700000"/><path d="M675 430 L705 431 L705 472 L675 468z" fill="#ff0000"/><path d="M675 438 L705 441 L705 445 L675 442z" fill="#c00000"/><path d="M976 540 L1205 540 L1240 560 L1276 566 L1321 580 L1459 611 L1330 604 L1150 583 L977 559z" fill="#740000"/><path d="M976 433 h14 v53 h-14z" fill="#ff0000"/><path d="M976 433 h14 v3 h-14z" fill="#c80000"/><path d="M991 448 h56 v38 h-56z" fill="#ff0000"/><path d="M991 448 h56 v5 h-56z" fill="#740000"/><path d="M1030 453 h17 v33 h-17z" fill="#e40000"/><path d="M1002 431 h40 v20 h-40z" fill="#ff0000"/><path d="M1002 431 h40 v3 h-40z" fill="#740000"/><path d="M1030 434 h12 v17 h-12z" fill="#e40000"/><path d="M1016 414 h18 v20 h-18z" fill="#ff0000"/><path d="M1016 413 h18 v3 h-18z" fill="#740000"/><path d="M1034 419 l7 -2 v4 l-7 2z M1008 428 l8 -2 v3 l-8 2z" fill="#ff0000"/><path d="M1048 463 a7.5 2.5 0 0 1 15 0 v10 h-15z" fill="#ff0000"/><path d="M976 485 L1034 485 L1034 494 L976 494z" fill="#740000"/><path d="M1034 472 h32 v31 h-32z" fill="#ff0000"/><path d="M1034 472 h32 v5 h-32z" fill="#740000"/><path d="M1034 477 h12 v26 h-12z" fill="#e00000"/><path d="M1020 475 a7 3 0 0 1 14 0 v57 h-14z" fill="#ff0000"/><path d="M1030 474 h4 v58 h-4z" fill="#d00000"/><path d="M976 494 h28 v37 h-28z" fill="#ff0000"/><path d="M1004 494 a7.5 8 0 0 1 15 0 v38 h-15z" fill="#ff0000"/><path d="M1015 490 h4 v42 h-4z" fill="#d00000"/><path d="M1021 505 L1077 491 L1077 558 L1021 558z" fill="#ff0000"/><path d="M1021 505 L1040 498 L1077 491 L1077 505 L1021 510z" fill="#740000"/><path d="M1077 493 L1125 493 L1140 505 L1140 556 L1077 558z" fill="#ff0000"/><path d="M1077 493 L1125 493 L1140 505 L1140 508 L1077 507z" fill="#740000"/><path d="M1125 508 h15 v48 h-15z" fill="#e20000"/><path d="M976 528 L1020 528 L1032 540 L1068 540 L1077 556 L976 558z" fill="#ff0000"/><path d="M976 530 L1000 534 L1030 532 M990 545 L1030 543" fill="none"/><path d="M976 531 L1000 535 L1028 533 M980 544 L1030 541 M1032 540 L1050 548 L1068 545" stroke="#900000" stroke-width="1" fill="none"/><path d="M1032 540 L1055 539 L1068 548 L1068 558 L1055 560 L1032 556z" fill="#f00000"/><path d="M1055 539 L1068 548 L1068 558 L1055 560z" fill="#c00000"/><path d="M1109 549 a11.5 3 0 0 1 23 0 v12 a11.5 3 0 0 1 -23 0z" fill="#ff0000"/><path d="M1133 512 L1150 505 L1190 505 L1205 516 L1205 537 L1199 537 L1199 565 Q1175 571 1150 565 L1150 537 L1133 537z" fill="#ff0000"/><path d="M1133 512 L1150 505 L1190 505 L1205 516 L1204 523 L1134 520z" fill="#740000"/><path d="M1138 512 L1150 507 L1160 509 L1150 520z M1180 507 L1205 516 L1204 523 L1187 522z" fill="#b00000"/><path d="M1150 537 h5 v30 h-5z" fill="#c00000"/><path d="M1189 525 L1250 536 L1250 539 L1189 529z M1190 531 L1240 539 L1240 542 L1190 535z" fill="#ff0000"/><path d="M1203 552 L1218 543 L1258 543 L1275 556 L1273 574 L1258 580 L1220 582 L1204 576z" fill="#ff0000"/><path d="M1203 552 L1218 543 L1258 543 L1275 556 L1273 561 L1206 559z" fill="#740000"/><path d="M1210 550 L1218 545 L1232 546 L1220 556z M1248 545 L1275 556 L1273 561 L1256 560z" fill="#b00000"/><path d="M1270 561 L1321 573 L1321 576 L1270 565z M1259 566 L1311 576 L1311 579 L1259 570z" fill="#ff0000"/><line x1="675" y1="521.9" x2="1408" y2="662.6" stroke="#a444e4" stroke-width="1.5" /><line x1="1408" y1="662.6" x2="1515" y2="623.6" stroke="#a444e4" stroke-width="1.5" /><line x1="1408" y1="393" x2="1408" y2="778" stroke="#3c3cff" stroke-width="2" /><line x1="422" y1="589.6" x2="1408" y2="778" stroke="#3c3cff" stroke-width="2" /><line x1="426.4" y1="587.3" x2="1408" y2="775.5" stroke="#ff44ff" stroke-width="1" /><line x1="679" y1="609" x2="1408" y2="750" stroke="#a444e4" stroke-width="1.2" stroke-dasharray="3 3"/></svg>
<div class="a" style="left:1378px;top:116px;width:300px;height:186px;background:linear-gradient(#bccbdc,#d6e2ef);border:1px solid #6a6f7a;border-radius:2px"></div>
<div class="a" style="left:1381px;top:137px;width:294px;height:163px;background:#222;border:1px solid #0a0a0a"></div>
<div class="t" style="left:1381px;top:122.27px;font-size:11.5px;line-height:11.5px;color:#2a3240;letter-spacing:-0.2px;">EM.CUBE Help</div>
<div class="a" style="left:1660px;top:121px;width:13px;height:13px;border:1px solid #6d7a8c;border-radius:2px;background:linear-gradient(#e8eef6,#c8d4e2)"><svg class="a" style="left:2px;top:2px" width="8" height="8"><path d="M1 1 L7 7 M7 1 L1 7" stroke="#333" stroke-width="2.2"/><path d="M1 1 L7 7 M7 1 L1 7" stroke="#fff" stroke-width="0.8"/></svg></div>
<div class="a" style="left:1385px;top:141px;width:281px;height:38px;border-radius:9px;background:linear-gradient(#d4d4d4,#f4f4f4 60%,#fafafa);border:1px solid #999"></div>
<svg class="a" style="left:1397px;top:153px" width="17" height="16"><rect x="0" y="0" width="17" height="16" fill="#a8c8ec"/><rect x="0" y="0" width="17" height="4" fill="#3a78d0"/><path d="M0 4.5 H17 M0 8.5 H17 M0 12.5 H17 M4 0 V16 M8.5 0 V16 M13 0 V16" stroke="#6a9ad8" stroke-dasharray="2 2"/></svg>
<div class="t" style="left:1427px;top:154.69px;font-size:11px;line-height:11px;color:#111;letter-spacing:0px;font-weight:bold;">Show/Generate Mesh</div>
<div class="t" style="left:1385px;top:190.19px;font-size:11px;line-height:11px;color:#fff;letter-spacing:0.1px;font-weight:bold;">You are currently in Mesh View Mode. Click Show</div>
<div class="t" style="left:1385px;top:202.69px;font-size:11px;line-height:11px;color:#fff;letter-spacing:0.01px;font-weight:bold;">Mesh button one more time or use Esc button to hide</div>
<div class="t" style="left:1385px;top:215.19px;font-size:11px;line-height:11px;color:#fff;letter-spacing:0.01px;font-weight:bold;">mesh and return to Normal View Mode.</div>
<div class="a" style="left:0;top:42px;width:675px;height:493px;border:1px solid #3c3c3c;border-left-width:1px;border-radius:6px 6px 0 0;background:linear-gradient(#bac9da,#cddaea 55%,#dbe6f3);"></div>
<div class="a" style="left:1px;top:67px;width:672px;height:467px;background:#f0f0f0;border:1px solid #d9e4f1;border-top:none"></div>
<div class="t" style="left:7px;top:50.769999999999996px;font-size:11.5px;line-height:11.5px;color:#333d4a;letter-spacing:-0.1px;">FDTD Mesh Settings</div>
<div class="a" style="left:639px;top:47px;width:31px;height:17px;border:1px solid #8c9ab0;border-radius:3px;background:linear-gradient(#d7e1ed,#c3d0e0 50%,#b9c8da 51%,#c8d6e6)"><svg class="a" style="left:9px;top:2px" width="12" height="11"><path d="M2 2 L10 9 M10 2 L2 9" stroke="#4a4a4a" stroke-width="3.6"/><path d="M2 2 L10 9 M10 2 L2 9" stroke="#f4f4f4" stroke-width="1.8"/></svg></div>
<div class="gb" style="left:14px;top:80px;width:647px;height:412px;"></div>
<div class="t" style="left:21px;top:75.69px;font-size:11px;line-height:11px;background:#f0f0f0;padding:0 2px;">Mesh Properties</div>
<div class="t" style="left:24px;top:99.69px;font-size:11px;line-height:11px;">Mesh Type:</div>
<div class="ed" style="left:84px;top:96px;width:98px;height:20px;background:#fff"></div>
<div class="t" style="left:90px;top:100.69px;font-size:11px;line-height:11px;letter-spacing:0px;">Adaptive</div>
<div class="bt" style="left:164px;top:98px;width:16px;height:16px;"></div>
<svg class="a" style="left:168px;top:103px" width="8" height="5"><path d="M0 0 H7 L3.5 4z" fill="#000"/></svg>
<div class="bt" style="left:192px;top:96px;width:162px;height:20px;"></div>
<div class="t" style="left:192px;width:162px;text-align:center;top:100.69px;font-size:11px;line-height:11px;letter-spacing:-0.15px">High Precision Mesh Settings</div>
<div class="bt" style="left:83px;top:124px;width:99px;height:20px;"></div>
<div class="t" style="left:83px;width:99px;text-align:center;top:128.69px;font-size:11px;line-height:11px;letter-spacing:-0.15px">Restore Defaults</div>
<div class="bt" style="left:192px;top:124px;width:162px;height:20px;"></div>
<div class="t" style="left:192px;width:162px;text-align:center;top:128.69px;font-size:11px;line-height:11px;letter-spacing:-0.15px">Fast Run/Low Memory Settings</div>
<div class="gb" style="left:22px;top:160px;width:328px;height:236px;"></div>
<div class="t" style="left:28px;top:153.69px;font-size:11px;line-height:11px;background:#f0f0f0;padding:0 2px;">Variable Mesh Settings</div>
<div class="t" style="left:38px;top:177.69px;font-size:11px;line-height:11px;">Minimum Mesh Density:</div>
<div class="ed" style="left:203px;top:172px;width:83px;height:19px;background:#fff;"></div>
<div class="t" style="left:208.5px;top:176.19px;font-size:11px;line-height:11px;letter-spacing:0.3px;">20.000000</div>
<div class="t" style="left:289px;top:175.69px;font-size:11px;line-height:11px;letter-spacing:-0.2px;">Cells/ &lambda;<span style='font-size:8px;position:relative;top:3px'>eff</span></div>
<div class="gb" style="left:31px;top:205px;width:307px;height:73px;"></div>
<div class="t" style="left:36px;top:200.69px;font-size:11px;line-height:11px;background:#f0f0f0;padding:0 2px;">In Free Space</div>
<div class="t" style="left:47px;top:226.69px;font-size:11px;line-height:11px;">Wavelength at Max Freq:</div>
<div class="ed" style="left:203px;top:222px;width:83px;height:19px;background:#f0f0f0;"></div>
<div class="t" style="left:208.5px;top:226.19px;font-size:11px;line-height:11px;letter-spacing:0.3px;">5.468066</div>
<div class="ub" style="left:292px;top:224px;width:39px;height:16px;"></div>
<div class="t" style="left:294px;top:227.69px;font-size:11px;line-height:11px;">ft</div>
<div class="t" style="left:47px;top:252.69px;font-size:11px;line-height:11px;">Max Grid Spacing at Max Freq:</div>
<div class="ed" style="left:203px;top:249px;width:83px;height:19px;background:#f0f0f0;"></div>
<div class="t" style="left:208.5px;top:253.19px;font-size:11px;line-height:11px;letter-spacing:0.3px;">0.273403</div>
<div class="ub" style="left:292px;top:251px;width:39px;height:16px;"></div>
<div class="t" style="left:294px;top:254.69px;font-size:11px;line-height:11px;">ft</div>
<div class="gb" style="left:31px;top:292px;width:307px;height:70px;"></div>
<div class="t" style="left:36px;top:285.69px;font-size:11px;line-height:11px;background:#f0f0f0;padding:0 2px;">In Highest Dielectric Material</div>
<div class="t" style="left:47px;top:309.69px;font-size:11px;line-height:11px;">Wavelength at Max Freq:</div>
<div class="ed" style="left:203px;top:304px;width:83px;height:19px;background:#f0f0f0;"></div>
<div class="t" style="left:208.5px;top:308.19px;font-size:11px;line-height:11px;letter-spacing:0.3px;">5.468066</div>
<div class="ub" style="left:292px;top:307px;width:39px;height:16px;"></div>
<div class="t" style="left:294px;top:310.69px;font-size:11px;line-height:11px;">ft</div>
<div class="t" style="left:47px;top:335.69px;font-size:11px;line-height:11px;">Max Grid Spacing at Max Freq:</div>
<div class="ed" style="left:203px;top:332px;width:83px;height:19px;background:#f0f0f0;"></div>
<div class="t" style="left:208.5px;top:336.19px;font-size:11px;line-height:11px;letter-spacing:0.3px;">0.273403</div>
<div class="ub" style="left:292px;top:334px;width:39px;height:16px;"></div>
<div class="t" style="left:294px;top:337.69px;font-size:11px;line-height:11px;">ft</div>
<div class="cb" style="left:36px;top:372px;width:13px;height:13px;"><svg width="13" height="13" style="position:absolute;left:-2px;top:-2px"><path d="M3 6 L5 8.5 L10 3.5" stroke="#000" stroke-width="2" fill="none"/></svg></div>
<div class="t" style="left:57px;top:372.69px;font-size:11px;line-height:11px;">Create Gradual Grid Transitions</div>
<div class="gb" style="left:22px;top:409px;width:328px;height:55px;"></div>
<div class="t" style="left:27px;top:403.69px;font-size:11px;line-height:11px;background:#f0f0f0;padding:0 2px;">Fixed-Cell Mesh Settings</div>
<div class="t" style="left:170px;top:413.69px;font-size:11px;line-height:11px;">X</div>
<div class="t" style="left:238px;top:413.69px;font-size:11px;line-height:11px;">Y</div>
<div class="t" style="left:307px;top:413.69px;font-size:11px;line-height:11px;">Z</div>
<div class="t" style="left:35px;top:433.69px;font-size:11px;line-height:11px;">Cell Size in</div>
<div class="ub" style="left:92px;top:431px;width:40px;height:16px;"></div>
<div class="t" style="left:94px;top:434.69px;font-size:11px;line-height:11px;">ft</div>
<div class="ed" style="left:140px;top:429px;width:61px;height:19px;background:#f0f0f0;"></div>
<div class="t" style="left:145.5px;top:433.19px;font-size:11px;line-height:11px;color:#6d6d6d;letter-spacing:0.3px;">1</div>
<div class="ed" style="left:210px;top:429px;width:61px;height:19px;background:#f0f0f0;"></div>
<div class="t" style="left:215.5px;top:433.19px;font-size:11px;line-height:11px;color:#6d6d6d;letter-spacing:0.3px;">1</div>
<div class="ed" style="left:279px;top:429px;width:61px;height:19px;background:#f0f0f0;"></div>
<div class="t" style="left:284.5px;top:433.19px;font-size:11px;line-height:11px;color:#6d6d6d;letter-spacing:0.3px;">1</div>
<div class="cb" style="left:38px;top:471px;width:13px;height:13px;"></div>
<div class="t" style="left:59px;top:471.69px;font-size:11px;line-height:11px;">Apply 3D Mesh Fill (Slower than Default 1D Mesh Fill)</div>
<div class="gb" style="left:362px;top:99px;width:289px;height:134px;"></div>
<div class="t" style="left:368px;top:94.69px;font-size:11px;line-height:11px;background:#f0f0f0;padding:0 2px;">Mesh Adaptation to Geometric Contours</div>
<div class="cb" style="left:378px;top:120px;width:13px;height:13px;"><svg width="13" height="13" style="position:absolute;left:-2px;top:-2px"><path d="M3 6 L5 8.5 L10 3.5" stroke="#000" stroke-width="2" fill="none"/></svg></div>
<div class="t" style="left:395px;top:121.69px;font-size:11px;line-height:11px;">Refine Grid to Capture Geometric Contours</div>
<div class="t" style="left:376px;top:146.69px;font-size:11px;line-height:11px;">Specify Min Grid Spacing for Geometric Contours As:</div>
<svg class="rd" style="left:391px;top:176px" width="12" height="12"><path d="M10.2 1.8 A5.5 5.5 0 0 0 1.8 10.2" stroke="#a0a0a0" fill="none"/><path d="M9.5 2.5 A4.6 4.6 0 0 0 2.5 9.5" stroke="#696969" fill="none"/><path d="M1.8 10.2 A5.5 5.5 0 0 0 10.2 1.8" stroke="#fff" fill="none"/><circle cx="6" cy="6" r="4" fill="#fff"/><circle cx="6" cy="6" r="2" fill="#000"/></svg>
<div class="t" style="left:407px;top:170.69px;font-size:11px;line-height:11px;">Fraction of Max Grid</div>
<div class="t" style="left:407px;top:183.69px;font-size:11px;line-height:11px;">Spacing in Free Space:</div>
<div class="ed" style="left:531px;top:176px;width:67px;height:20px;background:#fff;"></div>
<div class="t" style="left:536.5px;top:180.19px;font-size:11px;line-height:11px;letter-spacing:0.3px;">0.400000</div>
<svg class="rd" style="left:391px;top:208px" width="12" height="12"><path d="M10.2 1.8 A5.5 5.5 0 0 0 1.8 10.2" stroke="#a0a0a0" fill="none"/><path d="M9.5 2.5 A4.6 4.6 0 0 0 2.5 9.5" stroke="#696969" fill="none"/><path d="M1.8 10.2 A5.5 5.5 0 0 0 10.2 1.8" stroke="#fff" fill="none"/><circle cx="6" cy="6" r="4" fill="#fff"/></svg>
<div class="t" style="left:407px;top:208.69px;font-size:11px;line-height:11px;">Min Distance:</div>
<div class="ed" style="left:531px;top:204px;width:67px;height:19px;background:#f0f0f0;"></div>
<div class="t" style="left:536.5px;top:208.19px;font-size:11px;line-height:11px;color:#6d6d6d;letter-spacing:0.3px;">0.109361</div>
<div class="ub" style="left:605px;top:204px;width:38px;height:19px;"></div>
<div class="t" style="left:607px;top:207.69px;font-size:11px;line-height:11px;">ft</div>
<div class="gb" style="left:362px;top:248px;width:289px;height:135px;"></div>
<div class="t" style="left:368px;top:242.69px;font-size:11px;line-height:11px;background:#f0f0f0;padding:0 2px;">Mesh Adaption at Thin or Narrow Regions</div>
<div class="cb" style="left:378px;top:270px;width:13px;height:13px;"></div>
<div class="t" style="left:395px;top:271.69px;font-size:11px;line-height:11px;">Refine Grid to Capture Thin or Narrow Regions</div>
<div class="t" style="left:376px;top:294.69px;font-size:11px;line-height:11px;">Specify Min Grid Spacing at Thin or Narrow Regions As:</div>
<svg class="rd" style="left:391px;top:323px" width="12" height="12"><path d="M10.2 1.8 A5.5 5.5 0 0 0 1.8 10.2" stroke="#a0a0a0" fill="none"/><path d="M9.5 2.5 A4.6 4.6 0 0 0 2.5 9.5" stroke="#696969" fill="none"/><path d="M1.8 10.2 A5.5 5.5 0 0 0 10.2 1.8" stroke="#fff" fill="none"/><circle cx="6" cy="6" r="4" fill="#f0f0f0"/><circle cx="6" cy="6" r="2" fill="#999"/></svg>
<div class="t" style="left:407px;top:318.69px;font-size:11px;line-height:11px;color:#8d8d8d;">Fraction of Max Grid</div>
<div class="t" style="left:407px;top:331.69px;font-size:11px;line-height:11px;color:#8d8d8d;">Spacing in Free Space:</div>
<div class="ed" style="left:531px;top:322px;width:67px;height:20px;background:#fff;"></div>
<div class="t" style="left:536.5px;top:326.19px;font-size:11px;line-height:11px;letter-spacing:0.3px;">0.400000</div>
<svg class="rd" style="left:391px;top:354px" width="12" height="12"><path d="M10.2 1.8 A5.5 5.5 0 0 0 1.8 10.2" stroke="#a0a0a0" fill="none"/><path d="M9.5 2.5 A4.6 4.6 0 0 0 2.5 9.5" stroke="#696969" fill="none"/><path d="M1.8 10.2 A5.5 5.5 0 0 0 10.2 1.8" stroke="#fff" fill="none"/><circle cx="6" cy="6" r="4" fill="#f0f0f0"/></svg>
<div class="t" style="left:407px;top:354.69px;font-size:11px;line-height:11px;color:#8d8d8d;">Min Distance:</div>
<div class="ed" style="left:531px;top:350px;width:67px;height:20px;background:#f0f0f0;"></div>
<div class="t" style="left:536.5px;top:354.19px;font-size:11px;line-height:11px;color:#6d6d6d;letter-spacing:0.3px;">0.109361</div>
<div class="ub" style="left:605px;top:353px;width:38px;height:16px;"></div>
<div class="t" style="left:607px;top:356.69px;font-size:11px;line-height:11px;">ft</div>
<div class="gb" style="left:362px;top:397px;width:289px;height:85px;"></div>
<div class="t" style="left:368px;top:391.69px;font-size:11px;line-height:11px;background:#f0f0f0;padding:0 2px;">Absolute Minimum Grid Spacing</div>
<svg class="rd" style="left:391px;top:422px" width="12" height="12"><path d="M10.2 1.8 A5.5 5.5 0 0 0 1.8 10.2" stroke="#a0a0a0" fill="none"/><path d="M9.5 2.5 A4.6 4.6 0 0 0 2.5 9.5" stroke="#696969" fill="none"/><path d="M1.8 10.2 A5.5 5.5 0 0 0 10.2 1.8" stroke="#fff" fill="none"/><circle cx="6" cy="6" r="4" fill="#fff"/><circle cx="6" cy="6" r="2" fill="#000"/></svg>
<div class="t" style="left:407px;top:417.69px;font-size:11px;line-height:11px;">Fraction of Max Grid</div>
<div class="t" style="left:407px;top:430.69px;font-size:11px;line-height:11px;">Spacing in Free Space:</div>
<div class="ed" style="left:531px;top:425px;width:67px;height:20px;background:#fff;"></div>
<div class="t" style="left:536.5px;top:429.19px;font-size:11px;line-height:11px;letter-spacing:0.3px;">0.150000</div>
<svg class="rd" style="left:391px;top:455px" width="12" height="12"><path d="M10.2 1.8 A5.5 5.5 0 0 0 1.8 10.2" stroke="#a0a0a0" fill="none"/><path d="M9.5 2.5 A4.6 4.6 0 0 0 2.5 9.5" stroke="#696969" fill="none"/><path d="M1.8 10.2 A5.5 5.5 0 0 0 10.2 1.8" stroke="#fff" fill="none"/><circle cx="6" cy="6" r="4" fill="#fff"/></svg>
<div class="t" style="left:407px;top:455.69px;font-size:11px;line-height:11px;">Absolute Min Distance:</div>
<div class="ed" style="left:531px;top:452px;width:67px;height:18px;background:#f0f0f0;"></div>
<div class="t" style="left:536.5px;top:456.19px;font-size:11px;line-height:11px;color:#6d6d6d;letter-spacing:0.3px;">0.041010</div>
<div class="ub" style="left:605px;top:454px;width:38px;height:16px;"></div>
<div class="t" style="left:607px;top:457.69px;font-size:11px;line-height:11px;">ft</div>
<div class="bt" style="left:162px;top:501px;width:75px;height:23px;"></div>
<div class="t" style="left:162px;width:75px;text-align:center;top:506.69px;font-size:11px;line-height:11px;letter-spacing:-0.15px">Apply</div>
<div class="bt" style="left:252px;top:501px;width:75px;height:23px;"></div>
<div class="t" style="left:252px;width:75px;text-align:center;top:506.69px;font-size:11px;line-height:11px;letter-spacing:-0.15px">Advanced...</div>
<div class="bt" style="left:345px;top:501px;width:75px;height:23px;"></div>
<div class="t" style="left:345px;width:75px;text-align:center;top:506.69px;font-size:11px;line-height:11px;letter-spacing:-0.15px">OK</div>
<div class="bt" style="left:435px;top:501px;width:75px;height:23px;"></div>
<div class="t" style="left:435px;width:75px;text-align:center;top:506.69px;font-size:11px;line-height:11px;letter-spacing:-0.15px">Cancel</div>
<div class="a" style="left:705px;top:404px;width:271px;height:203px;border:1px solid #3c4a5a;border-radius:6px 6px 0 0;background:linear-gradient(#a6bdd5,#bdd1e6 60%,#cadbee)"></div>
<div class="a" style="left:707px;top:428px;width:267px;height:177px;background:#f0f0f0;border:1px solid #a8c4dc"></div>
<div class="a" style="left:705px;top:605px;width:271px;height:2px;background:#3aa8c8"></div>
<div class="t" style="left:711px;top:410.84px;font-size:12px;line-height:12px;color:#111;letter-spacing:-0.2px;">Generating FDTD Grid</div>
<div class="a" style="left:941px;top:408px;width:31px;height:17px;border:1px solid #6a3a36;border-radius:3px;background:linear-gradient(#e8a898,#d0705c 50%,#c04a36 51%,#d07060)"><svg class="a" style="left:9px;top:2px" width="12" height="11"><path d="M2 2 L10 9 M10 2 L2 9" stroke="#5a2a24" stroke-width="3.6"/><path d="M2 2 L10 9 M10 2 L2 9" stroke="#fff" stroke-width="1.8"/></svg></div>
<div class="t" style="left:727px;top:440.69px;font-size:11px;line-height:11px;letter-spacing:-0.1px;">Processing</div>
<div class="ed" style="left:788px;top:436px;width:73px;height:19px;background:#f0f0f0;"></div>
<div class="t" style="left:793.5px;top:441.19px;font-size:11px;line-height:11px;letter-spacing:0.3px;">8</div>
<div class="t" style="left:866px;top:440.69px;font-size:11px;line-height:11px;letter-spacing:0px;">of</div>
<div class="ed" style="left:880px;top:436px;width:76px;height:19px;background:#f0f0f0;"></div>
<div class="t" style="left:885.5px;top:441.19px;font-size:11px;line-height:11px;letter-spacing:0.3px;">116</div>
<div class="a" style="left:719px;top:465px;width:237px;height:13px;background:#eeeeee;border:1px solid;border-color:#b4b4b4 #dcdcdc #dcdcdc #b4b4b4;border-radius:1px"></div>
<div class="a" style="left:721px;top:467px;width:16px;height:9px;background:#3399ff"></div>
<div class="t" style="left:705px;width:266px;text-align:center;top:487px;font-size:11px;line-height:11px;letter-spacing:-0.15px">Meshing Progress</div>
<div class="a" style="left:719px;top:504px;width:237px;height:13px;background:#eeeeee;border:1px solid;border-color:#b4b4b4 #dcdcdc #dcdcdc #b4b4b4;border-radius:1px"></div>
<div class="ed" style="left:718px;top:526px;width:237px;height:41px;background:#f0f0f0"></div>
<div class="bt" style="left:794px;top:573px;width:90px;height:23px;"></div>
<div class="t" style="left:794px;width:90px;text-align:center;top:578.69px;font-size:11px;line-height:11px;letter-spacing:-0.15px">Abort Process</div>
<svg class="a" style="left:783px;top:624px" width="14" height="22"><path d="M1 1 L1 17 L5 13 L8 20 L10.5 19 L7.5 12 L13 12z" fill="#fff" stroke="#000" stroke-width="1"/></svg>
</body></html>
